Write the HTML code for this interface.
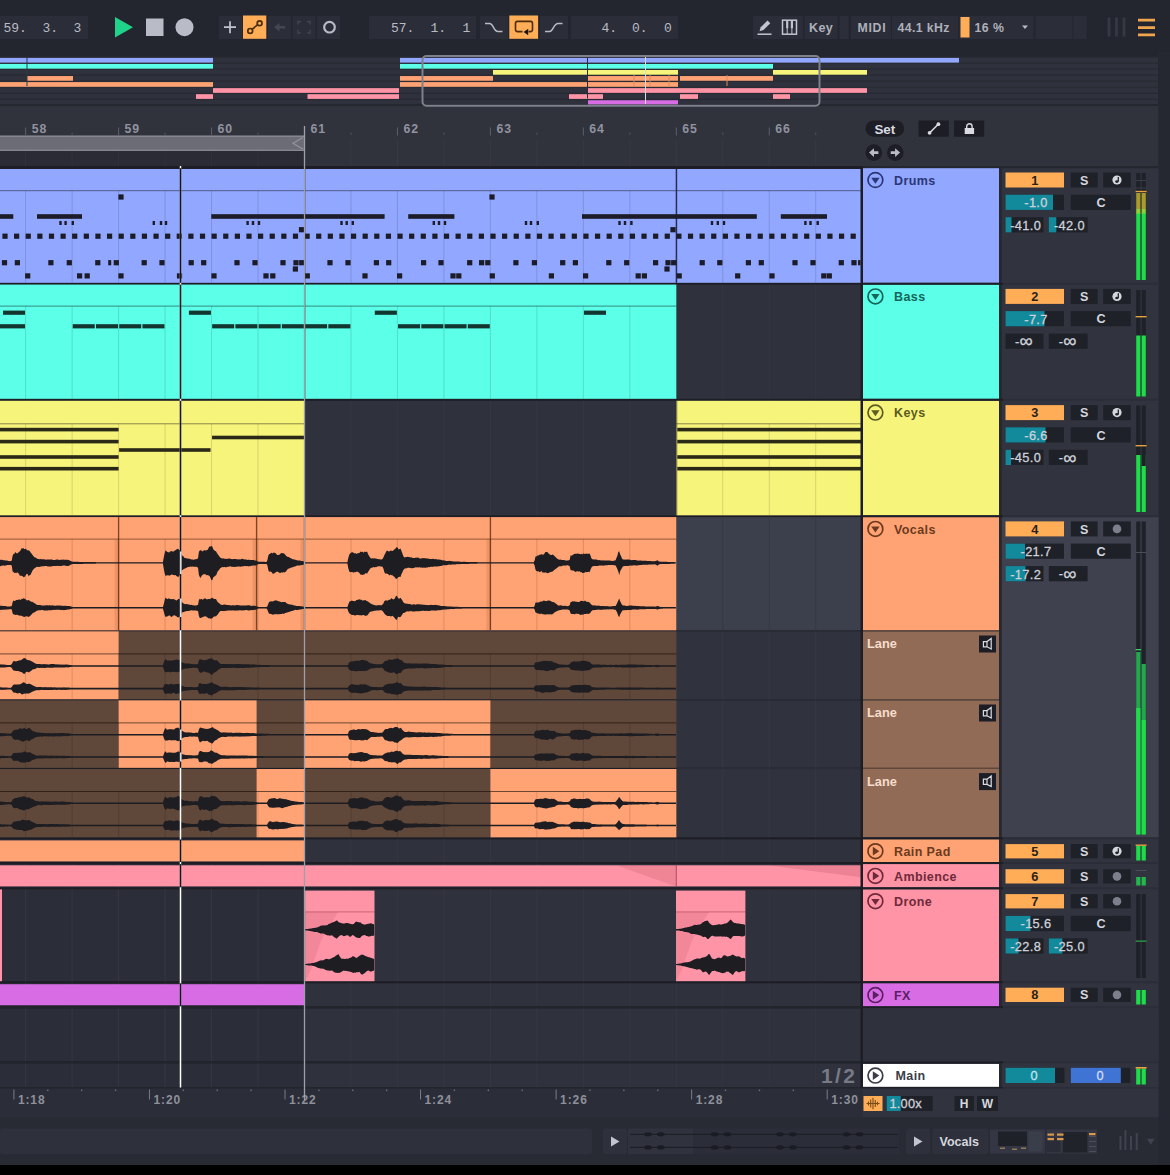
<!DOCTYPE html>
<html lang="en">
<head>
<meta charset="utf-8">
<title>Arrangement View</title>
<style>
html,body{margin:0;padding:0;background:#24262f;}
body{width:1170px;height:1175px;overflow:hidden;font-family:"Liberation Sans",sans-serif;}
svg{display:block;}
svg text{white-space:pre;}
</style>
</head>
<body>
<svg width="1170" height="1175" viewBox="0 0 1170 1175">
<rect x="0.00" y="0.00" width="1170.00" height="1175.00" fill="#24262f" />
<rect x="0.00" y="16.00" width="88.00" height="23.00" fill="#2b2d38" />
<text x="3.50" y="31.80" font-family='"Liberation Mono", monospace' font-size="13" font-weight="normal" fill="#b9bbc4" text-anchor="start" >59.</text>
<text x="42.50" y="31.80" font-family='"Liberation Mono", monospace' font-size="13" font-weight="normal" fill="#b9bbc4" text-anchor="start" >3.</text>
<text x="73.50" y="31.80" font-family='"Liberation Mono", monospace' font-size="13" font-weight="normal" fill="#b9bbc4" text-anchor="start" >3</text>
<polygon points="115,17 115,37.5 133,27.2" fill="#1fd48a"/>
<rect x="146.00" y="18.50" width="17.50" height="17.50" fill="#b9bbc6" />
<circle cx="184.5" cy="27.2" r="9" fill="#b9bbc6"/>
<rect x="219.00" y="16.00" width="23.00" height="23.00" fill="#2b2d38" />
<path d="M224 27.2h12M230 21.2v12" stroke="#c3c5ce" stroke-width="1.7" fill="none"/>
<rect x="243.00" y="15.50" width="23.30" height="23.30" fill="#ffad56" />
<g stroke="#4a2c0c" stroke-width="1.7" fill="none"><circle cx="250.2" cy="30.9" r="2.4"/><circle cx="259.6" cy="23.2" r="2.4"/><path d="M252.1 29.3l5.6-4.6"/></g>
<rect x="268.00" y="16.00" width="23.00" height="23.00" fill="#2b2d38" />
<path d="M274 27.2l5.6-4.2v2.9h5.6v2.6h-5.6v2.9z" fill="#444753"/>
<rect x="292.50" y="16.00" width="23.00" height="23.00" fill="#2b2d38" />
<path d="M298 24.5v-3h3M307 21.5h3v3M310 30v3h-3M301 33h-3v-3" stroke="#40434f" stroke-width="1.6" fill="none"/>
<rect x="317.00" y="16.00" width="23.00" height="23.00" fill="#2b2d38" />
<circle cx="329.5" cy="27.2" r="5.3" stroke="#b9bbc4" stroke-width="2.2" fill="none"/>
<rect x="369.00" y="16.00" width="107.00" height="23.00" fill="#2b2d38" />
<text x="391.00" y="31.80" font-family='"Liberation Mono", monospace' font-size="13" font-weight="normal" fill="#b9bbc4" text-anchor="start" >57.</text>
<text x="430.50" y="31.80" font-family='"Liberation Mono", monospace' font-size="13" font-weight="normal" fill="#b9bbc4" text-anchor="start" >1.</text>
<text x="462.50" y="31.80" font-family='"Liberation Mono", monospace' font-size="13" font-weight="normal" fill="#b9bbc4" text-anchor="start" >1</text>
<rect x="480.00" y="16.00" width="28.00" height="23.00" fill="#2b2d38" />
<path d="M485 23.5h4.5c4 0 4 8 8.5 8h4.5" stroke="#b9bbc4" stroke-width="1.5" fill="none"/>
<rect x="509.30" y="15.50" width="28.80" height="23.30" fill="#ffad56" />
<path d="M528.5 31.6h2a2 2 0 0 0 2-2v-6.2a2 2 0 0 0-2-2h-13a2 2 0 0 0-2 2v6.2a2 2 0 0 0 2 2h5" stroke="#4a2c0c" stroke-width="1.6" fill="none"/>
<path d="M523.6 32l4.6-3.3v6.6z" fill="#1f1408"/>
<rect x="540.00" y="16.00" width="28.00" height="23.00" fill="#2b2d38" />
<path d="M545 31.5h4.5c4 0 4-8 8.5-8h4.5" stroke="#b9bbc4" stroke-width="1.5" fill="none"/>
<rect x="571.00" y="16.00" width="107.00" height="23.00" fill="#2b2d38" />
<text x="601.50" y="31.80" font-family='"Liberation Mono", monospace' font-size="13" font-weight="normal" fill="#b9bbc4" text-anchor="start" >4.</text>
<text x="632.00" y="31.80" font-family='"Liberation Mono", monospace' font-size="13" font-weight="normal" fill="#b9bbc4" text-anchor="start" >0.</text>
<text x="664.00" y="31.80" font-family='"Liberation Mono", monospace' font-size="13" font-weight="normal" fill="#b9bbc4" text-anchor="start" >0</text>
<rect x="753.00" y="16.00" width="50.00" height="23.00" fill="#2b2d38" />
<path d="M759.5 31.2l1.2-4 6.8-6.8 2.8 2.8-6.8 6.8z" fill="#c3c5ce"/>
<path d="M757.5 34.2h14" stroke="#c3c5ce" stroke-width="1.5"/>
<rect x="782.50" y="20.20" width="14.00" height="14.00" fill="none" stroke="#c3c5ce" stroke-width="1.5"/>
<path d="M787.2 20.2v8M791.9 20.2v8" stroke="#c3c5ce" stroke-width="2.2"/>
<path d="M787.2 28v6M791.9 28v6" stroke="#c3c5ce" stroke-width="1"/>
<rect x="804.50" y="16.00" width="33.00" height="23.00" fill="#2b2d38" />
<text x="809.00" y="32.00" font-family='"Liberation Sans", sans-serif' font-size="12.5" font-weight="bold" fill="#aeb0ba" text-anchor="start" letter-spacing="0.4" >Key</text>
<rect x="839.50" y="16.00" width="9.00" height="23.00" fill="#2c2e39" />
<rect x="851.00" y="16.00" width="40.00" height="23.00" fill="#2b2d38" />
<text x="857.50" y="32.00" font-family='"Liberation Sans", sans-serif' font-size="12.3" font-weight="bold" fill="#aeb0ba" text-anchor="start" letter-spacing="0.7" >MIDI</text>
<rect x="892.00" y="16.00" width="66.00" height="23.00" fill="#2b2d38" />
<text x="897.50" y="32.00" font-family='"Liberation Sans", sans-serif' font-size="12.3" font-weight="bold" fill="#aeb0ba" text-anchor="start" letter-spacing="0.4" >44.1 kHz</text>
<rect x="959.50" y="16.00" width="74.00" height="23.00" fill="#2b2d38" />
<rect x="960.50" y="17.00" width="9.00" height="20.50" fill="#ffad56" />
<text x="974.50" y="32.00" font-family='"Liberation Sans", sans-serif' font-size="12.3" font-weight="bold" fill="#aeb0ba" text-anchor="start" letter-spacing="0.5" >16 %</text>
<path d="M1022 25.5h6l-3 3.4z" fill="#b9bbc4"/>
<rect x="1035.50" y="16.00" width="37.00" height="23.00" fill="#2b2d38" />
<rect x="1073.50" y="16.00" width="13.00" height="23.00" fill="#2b2d38" />
<path d="M1109 17.5v19M1116.5 17.5v19M1124 17.5v19" stroke="#363843" stroke-width="2.8"/>
<path d="M1138 20.2h17M1138 27.6h17M1138 34.9h17" stroke="#f0a54f" stroke-width="2.7"/>
<rect x="0.00" y="57.20" width="1158.00" height="47.30" fill="#2f313c" />
<line x1="0.00" y1="57.00" x2="1158.00" y2="57.00" stroke="#282a33" stroke-width="1.2" />
<line x1="0.00" y1="63.05" x2="1158.00" y2="63.05" stroke="#282a33" stroke-width="1.2" />
<line x1="0.00" y1="69.10" x2="1158.00" y2="69.10" stroke="#282a33" stroke-width="1.2" />
<line x1="0.00" y1="75.15" x2="1158.00" y2="75.15" stroke="#282a33" stroke-width="1.2" />
<line x1="0.00" y1="81.20" x2="1158.00" y2="81.20" stroke="#282a33" stroke-width="1.2" />
<line x1="0.00" y1="87.25" x2="1158.00" y2="87.25" stroke="#282a33" stroke-width="1.2" />
<line x1="0.00" y1="93.30" x2="1158.00" y2="93.30" stroke="#282a33" stroke-width="1.2" />
<line x1="0.00" y1="99.35" x2="1158.00" y2="99.35" stroke="#282a33" stroke-width="1.2" />
<line x1="0.00" y1="105.40" x2="1158.00" y2="105.40" stroke="#282a33" stroke-width="1.2" />
<rect x="0.00" y="57.90" width="213.00" height="4.70" fill="#92a7ff" />
<rect x="400.00" y="57.90" width="559.00" height="4.70" fill="#92a7ff" />
<rect x="0.00" y="63.95" width="213.00" height="4.70" fill="#5cffe8" />
<rect x="400.00" y="63.95" width="373.00" height="4.70" fill="#5cffe8" />
<rect x="493.00" y="70.00" width="185.00" height="4.70" fill="#f7f47c" />
<rect x="773.00" y="70.00" width="94.00" height="4.70" fill="#f7f47c" />
<rect x="27.00" y="76.05" width="46.00" height="4.70" fill="#ffa374" />
<rect x="400.00" y="76.05" width="93.00" height="4.70" fill="#ffa374" />
<rect x="588.00" y="76.05" width="90.00" height="4.70" fill="#ffa374" />
<rect x="680.00" y="76.05" width="93.00" height="4.70" fill="#ffa374" />
<rect x="0.00" y="82.10" width="213.00" height="4.70" fill="#ffa374" />
<rect x="400.00" y="82.10" width="278.00" height="4.70" fill="#ffa374" />
<rect x="213.00" y="88.15" width="186.00" height="4.70" fill="#ff94a6" />
<rect x="588.00" y="88.15" width="279.00" height="4.70" fill="#ff94a6" />
<rect x="196.00" y="94.20" width="17.00" height="4.70" fill="#ff94a6" />
<rect x="307.50" y="94.20" width="91.50" height="4.70" fill="#ff94a6" />
<rect x="569.00" y="94.20" width="34.00" height="4.70" fill="#ff94a6" />
<rect x="680.00" y="94.20" width="18.00" height="4.70" fill="#ff94a6" />
<rect x="773.00" y="94.20" width="17.00" height="4.70" fill="#ff94a6" />
<rect x="588.00" y="100.25" width="90.00" height="4.70" fill="#d86ce4" />
<line x1="27.00" y1="57.00" x2="27.00" y2="86.00" stroke="#2a3a44" stroke-width="1" />
<line x1="634.00" y1="75.00" x2="634.00" y2="86.00" stroke="#d98a5f" stroke-width="1" />
<line x1="650.00" y1="75.00" x2="650.00" y2="86.00" stroke="#d98a5f" stroke-width="1" />
<line x1="669.00" y1="75.00" x2="669.00" y2="86.00" stroke="#d98a5f" stroke-width="1" />
<line x1="727.00" y1="75.00" x2="727.00" y2="86.00" stroke="#d98a5f" stroke-width="1" />
<line x1="587.50" y1="57.50" x2="587.50" y2="98.50" stroke="#2a2c36" stroke-width="1" />
<line x1="645.50" y1="57.00" x2="645.50" y2="104.00" stroke="#d9dbe2" stroke-width="1" />
<rect x="0.00" y="104.50" width="1158.50" height="1.50" fill="#25272f" />
<rect x="0.00" y="106.00" width="1158.50" height="60.50" fill="#30323c" />
<rect x="0.00" y="151.00" width="304.50" height="15.00" fill="#2a2b35" />
<rect x="0.00" y="135.60" width="304.50" height="15.40" fill="#6b6c75" />
<rect x="0.00" y="135.60" width="304.50" height="1.40" fill="#85868e" />
<rect x="0.00" y="149.60" width="304.50" height="1.40" fill="#85868e" />
<path d="M303 137.5l-10 5.8 10 5.8" fill="none" stroke="#8e8f97" stroke-width="1.4"/>
<line x1="25.65" y1="127.50" x2="25.65" y2="135.50" stroke="#5d5f6a" stroke-width="1" />
<text x="31.65" y="132.90" font-family='"Liberation Sans", sans-serif' font-size="12.3" font-weight="bold" fill="#9093a0" text-anchor="start" letter-spacing="0.9" >58</text>
<rect x="71.52" y="132.50" width="1.20" height="2.50" fill="#4a4c57" />
<line x1="118.60" y1="127.50" x2="118.60" y2="135.50" stroke="#5d5f6a" stroke-width="1" />
<text x="124.60" y="132.90" font-family='"Liberation Sans", sans-serif' font-size="12.3" font-weight="bold" fill="#9093a0" text-anchor="start" letter-spacing="0.9" >59</text>
<rect x="164.47" y="132.50" width="1.20" height="2.50" fill="#4a4c57" />
<line x1="211.55" y1="127.50" x2="211.55" y2="135.50" stroke="#5d5f6a" stroke-width="1" />
<text x="217.55" y="132.90" font-family='"Liberation Sans", sans-serif' font-size="12.3" font-weight="bold" fill="#9093a0" text-anchor="start" letter-spacing="0.9" >60</text>
<rect x="257.43" y="132.50" width="1.20" height="2.50" fill="#4a4c57" />
<text x="310.50" y="132.90" font-family='"Liberation Sans", sans-serif' font-size="12.3" font-weight="bold" fill="#9093a0" text-anchor="start" letter-spacing="0.9" >61</text>
<rect x="350.38" y="132.50" width="1.20" height="2.50" fill="#4a4c57" />
<line x1="397.45" y1="127.50" x2="397.45" y2="135.50" stroke="#5d5f6a" stroke-width="1" />
<text x="403.45" y="132.90" font-family='"Liberation Sans", sans-serif' font-size="12.3" font-weight="bold" fill="#9093a0" text-anchor="start" letter-spacing="0.9" >62</text>
<rect x="443.32" y="132.50" width="1.20" height="2.50" fill="#4a4c57" />
<line x1="490.40" y1="127.50" x2="490.40" y2="135.50" stroke="#5d5f6a" stroke-width="1" />
<text x="496.40" y="132.90" font-family='"Liberation Sans", sans-serif' font-size="12.3" font-weight="bold" fill="#9093a0" text-anchor="start" letter-spacing="0.9" >63</text>
<rect x="536.27" y="132.50" width="1.20" height="2.50" fill="#4a4c57" />
<line x1="583.35" y1="127.50" x2="583.35" y2="135.50" stroke="#5d5f6a" stroke-width="1" />
<text x="589.35" y="132.90" font-family='"Liberation Sans", sans-serif' font-size="12.3" font-weight="bold" fill="#9093a0" text-anchor="start" letter-spacing="0.9" >64</text>
<rect x="629.23" y="132.50" width="1.20" height="2.50" fill="#4a4c57" />
<line x1="676.30" y1="127.50" x2="676.30" y2="135.50" stroke="#5d5f6a" stroke-width="1" />
<text x="682.30" y="132.90" font-family='"Liberation Sans", sans-serif' font-size="12.3" font-weight="bold" fill="#9093a0" text-anchor="start" letter-spacing="0.9" >65</text>
<rect x="722.17" y="132.50" width="1.20" height="2.50" fill="#4a4c57" />
<line x1="769.25" y1="127.50" x2="769.25" y2="135.50" stroke="#5d5f6a" stroke-width="1" />
<text x="775.25" y="132.90" font-family='"Liberation Sans", sans-serif' font-size="12.3" font-weight="bold" fill="#9093a0" text-anchor="start" letter-spacing="0.9" >66</text>
<rect x="815.12" y="132.50" width="1.20" height="2.50" fill="#4a4c57" />
<line x1="25.65" y1="151.00" x2="25.65" y2="166.00" stroke="#30313c" stroke-width="1" />
<line x1="72.12" y1="151.00" x2="72.12" y2="166.00" stroke="#30313c" stroke-width="1" />
<line x1="118.60" y1="151.00" x2="118.60" y2="166.00" stroke="#30313c" stroke-width="1" />
<line x1="165.07" y1="151.00" x2="165.07" y2="166.00" stroke="#30313c" stroke-width="1" />
<line x1="211.55" y1="151.00" x2="211.55" y2="166.00" stroke="#30313c" stroke-width="1" />
<line x1="258.02" y1="151.00" x2="258.02" y2="166.00" stroke="#30313c" stroke-width="1" />
<line x1="304.50" y1="151.00" x2="304.50" y2="166.00" stroke="#30313c" stroke-width="1" />
<line x1="350.98" y1="140.00" x2="350.98" y2="166.00" stroke="#373944" stroke-width="1" />
<line x1="397.45" y1="140.00" x2="397.45" y2="166.00" stroke="#373944" stroke-width="1" />
<line x1="443.93" y1="140.00" x2="443.93" y2="166.00" stroke="#373944" stroke-width="1" />
<line x1="490.40" y1="140.00" x2="490.40" y2="166.00" stroke="#373944" stroke-width="1" />
<line x1="536.88" y1="140.00" x2="536.88" y2="166.00" stroke="#373944" stroke-width="1" />
<line x1="583.35" y1="140.00" x2="583.35" y2="166.00" stroke="#373944" stroke-width="1" />
<line x1="629.83" y1="140.00" x2="629.83" y2="166.00" stroke="#373944" stroke-width="1" />
<line x1="676.30" y1="140.00" x2="676.30" y2="166.00" stroke="#373944" stroke-width="1" />
<line x1="722.78" y1="140.00" x2="722.78" y2="166.00" stroke="#373944" stroke-width="1" />
<line x1="769.25" y1="140.00" x2="769.25" y2="166.00" stroke="#373944" stroke-width="1" />
<line x1="815.73" y1="140.00" x2="815.73" y2="166.00" stroke="#373944" stroke-width="1" />
<rect x="0.00" y="166.00" width="863.00" height="2.20" fill="#1c1d25" />
<rect x="422.5" y="56" width="397" height="49.7" rx="4" ry="4" fill="none" stroke="#7e818c" stroke-width="2"/>
<rect x="0.00" y="166.00" width="863.00" height="921.00" fill="#1c1d25" />
<rect x="0.00" y="168.20" width="304.50" height="114.60" fill="#2b2d38" />
<rect x="304.50" y="168.20" width="556.50" height="114.60" fill="#2f313c" />
<line x1="25.65" y1="168.20" x2="25.65" y2="282.80" stroke="#353743" stroke-width="1" opacity="1.0"/>
<line x1="72.12" y1="168.20" x2="72.12" y2="282.80" stroke="#353743" stroke-width="1" opacity="1.0"/>
<line x1="118.60" y1="168.20" x2="118.60" y2="282.80" stroke="#353743" stroke-width="1" opacity="1.0"/>
<line x1="165.07" y1="168.20" x2="165.07" y2="282.80" stroke="#353743" stroke-width="1" opacity="1.0"/>
<line x1="211.55" y1="168.20" x2="211.55" y2="282.80" stroke="#353743" stroke-width="1" opacity="1.0"/>
<line x1="258.02" y1="168.20" x2="258.02" y2="282.80" stroke="#353743" stroke-width="1" opacity="1.0"/>
<line x1="304.50" y1="168.20" x2="304.50" y2="282.80" stroke="#353743" stroke-width="1" opacity="1.0"/>
<line x1="350.98" y1="168.20" x2="350.98" y2="282.80" stroke="#353743" stroke-width="1" opacity="1.0"/>
<line x1="397.45" y1="168.20" x2="397.45" y2="282.80" stroke="#353743" stroke-width="1" opacity="1.0"/>
<line x1="443.93" y1="168.20" x2="443.93" y2="282.80" stroke="#353743" stroke-width="1" opacity="1.0"/>
<line x1="490.40" y1="168.20" x2="490.40" y2="282.80" stroke="#353743" stroke-width="1" opacity="1.0"/>
<line x1="536.88" y1="168.20" x2="536.88" y2="282.80" stroke="#353743" stroke-width="1" opacity="1.0"/>
<line x1="583.35" y1="168.20" x2="583.35" y2="282.80" stroke="#353743" stroke-width="1" opacity="1.0"/>
<line x1="629.83" y1="168.20" x2="629.83" y2="282.80" stroke="#353743" stroke-width="1" opacity="1.0"/>
<line x1="676.30" y1="168.20" x2="676.30" y2="282.80" stroke="#353743" stroke-width="1" opacity="1.0"/>
<line x1="722.78" y1="168.20" x2="722.78" y2="282.80" stroke="#353743" stroke-width="1" opacity="1.0"/>
<line x1="769.25" y1="168.20" x2="769.25" y2="282.80" stroke="#353743" stroke-width="1" opacity="1.0"/>
<line x1="815.73" y1="168.20" x2="815.73" y2="282.80" stroke="#353743" stroke-width="1" opacity="1.0"/>
<rect x="0.00" y="284.60" width="304.50" height="114.20" fill="#2b2d38" />
<rect x="304.50" y="284.60" width="556.50" height="114.20" fill="#2f313c" />
<line x1="25.65" y1="284.60" x2="25.65" y2="398.80" stroke="#353743" stroke-width="1" opacity="1.0"/>
<line x1="72.12" y1="284.60" x2="72.12" y2="398.80" stroke="#353743" stroke-width="1" opacity="1.0"/>
<line x1="118.60" y1="284.60" x2="118.60" y2="398.80" stroke="#353743" stroke-width="1" opacity="1.0"/>
<line x1="165.07" y1="284.60" x2="165.07" y2="398.80" stroke="#353743" stroke-width="1" opacity="1.0"/>
<line x1="211.55" y1="284.60" x2="211.55" y2="398.80" stroke="#353743" stroke-width="1" opacity="1.0"/>
<line x1="258.02" y1="284.60" x2="258.02" y2="398.80" stroke="#353743" stroke-width="1" opacity="1.0"/>
<line x1="304.50" y1="284.60" x2="304.50" y2="398.80" stroke="#353743" stroke-width="1" opacity="1.0"/>
<line x1="350.98" y1="284.60" x2="350.98" y2="398.80" stroke="#353743" stroke-width="1" opacity="1.0"/>
<line x1="397.45" y1="284.60" x2="397.45" y2="398.80" stroke="#353743" stroke-width="1" opacity="1.0"/>
<line x1="443.93" y1="284.60" x2="443.93" y2="398.80" stroke="#353743" stroke-width="1" opacity="1.0"/>
<line x1="490.40" y1="284.60" x2="490.40" y2="398.80" stroke="#353743" stroke-width="1" opacity="1.0"/>
<line x1="536.88" y1="284.60" x2="536.88" y2="398.80" stroke="#353743" stroke-width="1" opacity="1.0"/>
<line x1="583.35" y1="284.60" x2="583.35" y2="398.80" stroke="#353743" stroke-width="1" opacity="1.0"/>
<line x1="629.83" y1="284.60" x2="629.83" y2="398.80" stroke="#353743" stroke-width="1" opacity="1.0"/>
<line x1="676.30" y1="284.60" x2="676.30" y2="398.80" stroke="#353743" stroke-width="1" opacity="1.0"/>
<line x1="722.78" y1="284.60" x2="722.78" y2="398.80" stroke="#353743" stroke-width="1" opacity="1.0"/>
<line x1="769.25" y1="284.60" x2="769.25" y2="398.80" stroke="#353743" stroke-width="1" opacity="1.0"/>
<line x1="815.73" y1="284.60" x2="815.73" y2="398.80" stroke="#353743" stroke-width="1" opacity="1.0"/>
<rect x="0.00" y="400.80" width="304.50" height="114.50" fill="#2b2d38" />
<rect x="304.50" y="400.80" width="556.50" height="114.50" fill="#2f313c" />
<line x1="25.65" y1="400.80" x2="25.65" y2="515.30" stroke="#353743" stroke-width="1" opacity="1.0"/>
<line x1="72.12" y1="400.80" x2="72.12" y2="515.30" stroke="#353743" stroke-width="1" opacity="1.0"/>
<line x1="118.60" y1="400.80" x2="118.60" y2="515.30" stroke="#353743" stroke-width="1" opacity="1.0"/>
<line x1="165.07" y1="400.80" x2="165.07" y2="515.30" stroke="#353743" stroke-width="1" opacity="1.0"/>
<line x1="211.55" y1="400.80" x2="211.55" y2="515.30" stroke="#353743" stroke-width="1" opacity="1.0"/>
<line x1="258.02" y1="400.80" x2="258.02" y2="515.30" stroke="#353743" stroke-width="1" opacity="1.0"/>
<line x1="304.50" y1="400.80" x2="304.50" y2="515.30" stroke="#353743" stroke-width="1" opacity="1.0"/>
<line x1="350.98" y1="400.80" x2="350.98" y2="515.30" stroke="#353743" stroke-width="1" opacity="1.0"/>
<line x1="397.45" y1="400.80" x2="397.45" y2="515.30" stroke="#353743" stroke-width="1" opacity="1.0"/>
<line x1="443.93" y1="400.80" x2="443.93" y2="515.30" stroke="#353743" stroke-width="1" opacity="1.0"/>
<line x1="490.40" y1="400.80" x2="490.40" y2="515.30" stroke="#353743" stroke-width="1" opacity="1.0"/>
<line x1="536.88" y1="400.80" x2="536.88" y2="515.30" stroke="#353743" stroke-width="1" opacity="1.0"/>
<line x1="583.35" y1="400.80" x2="583.35" y2="515.30" stroke="#353743" stroke-width="1" opacity="1.0"/>
<line x1="629.83" y1="400.80" x2="629.83" y2="515.30" stroke="#353743" stroke-width="1" opacity="1.0"/>
<line x1="676.30" y1="400.80" x2="676.30" y2="515.30" stroke="#353743" stroke-width="1" opacity="1.0"/>
<line x1="722.78" y1="400.80" x2="722.78" y2="515.30" stroke="#353743" stroke-width="1" opacity="1.0"/>
<line x1="769.25" y1="400.80" x2="769.25" y2="515.30" stroke="#353743" stroke-width="1" opacity="1.0"/>
<line x1="815.73" y1="400.80" x2="815.73" y2="515.30" stroke="#353743" stroke-width="1" opacity="1.0"/>
<rect x="0.00" y="839.40" width="304.50" height="22.60" fill="#2b2d38" />
<rect x="304.50" y="839.40" width="556.50" height="22.60" fill="#2f313c" />
<line x1="25.65" y1="839.40" x2="25.65" y2="862.00" stroke="#353743" stroke-width="1" opacity="1.0"/>
<line x1="72.12" y1="839.40" x2="72.12" y2="862.00" stroke="#353743" stroke-width="1" opacity="1.0"/>
<line x1="118.60" y1="839.40" x2="118.60" y2="862.00" stroke="#353743" stroke-width="1" opacity="1.0"/>
<line x1="165.07" y1="839.40" x2="165.07" y2="862.00" stroke="#353743" stroke-width="1" opacity="1.0"/>
<line x1="211.55" y1="839.40" x2="211.55" y2="862.00" stroke="#353743" stroke-width="1" opacity="1.0"/>
<line x1="258.02" y1="839.40" x2="258.02" y2="862.00" stroke="#353743" stroke-width="1" opacity="1.0"/>
<line x1="304.50" y1="839.40" x2="304.50" y2="862.00" stroke="#353743" stroke-width="1" opacity="1.0"/>
<line x1="350.98" y1="839.40" x2="350.98" y2="862.00" stroke="#353743" stroke-width="1" opacity="1.0"/>
<line x1="397.45" y1="839.40" x2="397.45" y2="862.00" stroke="#353743" stroke-width="1" opacity="1.0"/>
<line x1="443.93" y1="839.40" x2="443.93" y2="862.00" stroke="#353743" stroke-width="1" opacity="1.0"/>
<line x1="490.40" y1="839.40" x2="490.40" y2="862.00" stroke="#353743" stroke-width="1" opacity="1.0"/>
<line x1="536.88" y1="839.40" x2="536.88" y2="862.00" stroke="#353743" stroke-width="1" opacity="1.0"/>
<line x1="583.35" y1="839.40" x2="583.35" y2="862.00" stroke="#353743" stroke-width="1" opacity="1.0"/>
<line x1="629.83" y1="839.40" x2="629.83" y2="862.00" stroke="#353743" stroke-width="1" opacity="1.0"/>
<line x1="676.30" y1="839.40" x2="676.30" y2="862.00" stroke="#353743" stroke-width="1" opacity="1.0"/>
<line x1="722.78" y1="839.40" x2="722.78" y2="862.00" stroke="#353743" stroke-width="1" opacity="1.0"/>
<line x1="769.25" y1="839.40" x2="769.25" y2="862.00" stroke="#353743" stroke-width="1" opacity="1.0"/>
<line x1="815.73" y1="839.40" x2="815.73" y2="862.00" stroke="#353743" stroke-width="1" opacity="1.0"/>
<rect x="0.00" y="864.10" width="304.50" height="23.20" fill="#2b2d38" />
<rect x="304.50" y="864.10" width="556.50" height="23.20" fill="#2f313c" />
<line x1="25.65" y1="864.10" x2="25.65" y2="887.30" stroke="#353743" stroke-width="1" opacity="1.0"/>
<line x1="72.12" y1="864.10" x2="72.12" y2="887.30" stroke="#353743" stroke-width="1" opacity="1.0"/>
<line x1="118.60" y1="864.10" x2="118.60" y2="887.30" stroke="#353743" stroke-width="1" opacity="1.0"/>
<line x1="165.07" y1="864.10" x2="165.07" y2="887.30" stroke="#353743" stroke-width="1" opacity="1.0"/>
<line x1="211.55" y1="864.10" x2="211.55" y2="887.30" stroke="#353743" stroke-width="1" opacity="1.0"/>
<line x1="258.02" y1="864.10" x2="258.02" y2="887.30" stroke="#353743" stroke-width="1" opacity="1.0"/>
<line x1="304.50" y1="864.10" x2="304.50" y2="887.30" stroke="#353743" stroke-width="1" opacity="1.0"/>
<line x1="350.98" y1="864.10" x2="350.98" y2="887.30" stroke="#353743" stroke-width="1" opacity="1.0"/>
<line x1="397.45" y1="864.10" x2="397.45" y2="887.30" stroke="#353743" stroke-width="1" opacity="1.0"/>
<line x1="443.93" y1="864.10" x2="443.93" y2="887.30" stroke="#353743" stroke-width="1" opacity="1.0"/>
<line x1="490.40" y1="864.10" x2="490.40" y2="887.30" stroke="#353743" stroke-width="1" opacity="1.0"/>
<line x1="536.88" y1="864.10" x2="536.88" y2="887.30" stroke="#353743" stroke-width="1" opacity="1.0"/>
<line x1="583.35" y1="864.10" x2="583.35" y2="887.30" stroke="#353743" stroke-width="1" opacity="1.0"/>
<line x1="629.83" y1="864.10" x2="629.83" y2="887.30" stroke="#353743" stroke-width="1" opacity="1.0"/>
<line x1="676.30" y1="864.10" x2="676.30" y2="887.30" stroke="#353743" stroke-width="1" opacity="1.0"/>
<line x1="722.78" y1="864.10" x2="722.78" y2="887.30" stroke="#353743" stroke-width="1" opacity="1.0"/>
<line x1="769.25" y1="864.10" x2="769.25" y2="887.30" stroke="#353743" stroke-width="1" opacity="1.0"/>
<line x1="815.73" y1="864.10" x2="815.73" y2="887.30" stroke="#353743" stroke-width="1" opacity="1.0"/>
<rect x="0.00" y="889.40" width="304.50" height="91.80" fill="#2b2d38" />
<rect x="304.50" y="889.40" width="556.50" height="91.80" fill="#2f313c" />
<line x1="25.65" y1="889.40" x2="25.65" y2="981.20" stroke="#353743" stroke-width="1" opacity="1.0"/>
<line x1="72.12" y1="889.40" x2="72.12" y2="981.20" stroke="#353743" stroke-width="1" opacity="1.0"/>
<line x1="118.60" y1="889.40" x2="118.60" y2="981.20" stroke="#353743" stroke-width="1" opacity="1.0"/>
<line x1="165.07" y1="889.40" x2="165.07" y2="981.20" stroke="#353743" stroke-width="1" opacity="1.0"/>
<line x1="211.55" y1="889.40" x2="211.55" y2="981.20" stroke="#353743" stroke-width="1" opacity="1.0"/>
<line x1="258.02" y1="889.40" x2="258.02" y2="981.20" stroke="#353743" stroke-width="1" opacity="1.0"/>
<line x1="304.50" y1="889.40" x2="304.50" y2="981.20" stroke="#353743" stroke-width="1" opacity="1.0"/>
<line x1="350.98" y1="889.40" x2="350.98" y2="981.20" stroke="#353743" stroke-width="1" opacity="1.0"/>
<line x1="397.45" y1="889.40" x2="397.45" y2="981.20" stroke="#353743" stroke-width="1" opacity="1.0"/>
<line x1="443.93" y1="889.40" x2="443.93" y2="981.20" stroke="#353743" stroke-width="1" opacity="1.0"/>
<line x1="490.40" y1="889.40" x2="490.40" y2="981.20" stroke="#353743" stroke-width="1" opacity="1.0"/>
<line x1="536.88" y1="889.40" x2="536.88" y2="981.20" stroke="#353743" stroke-width="1" opacity="1.0"/>
<line x1="583.35" y1="889.40" x2="583.35" y2="981.20" stroke="#353743" stroke-width="1" opacity="1.0"/>
<line x1="629.83" y1="889.40" x2="629.83" y2="981.20" stroke="#353743" stroke-width="1" opacity="1.0"/>
<line x1="676.30" y1="889.40" x2="676.30" y2="981.20" stroke="#353743" stroke-width="1" opacity="1.0"/>
<line x1="722.78" y1="889.40" x2="722.78" y2="981.20" stroke="#353743" stroke-width="1" opacity="1.0"/>
<line x1="769.25" y1="889.40" x2="769.25" y2="981.20" stroke="#353743" stroke-width="1" opacity="1.0"/>
<line x1="815.73" y1="889.40" x2="815.73" y2="981.20" stroke="#353743" stroke-width="1" opacity="1.0"/>
<rect x="0.00" y="983.30" width="304.50" height="23.00" fill="#2b2d38" />
<rect x="304.50" y="983.30" width="556.50" height="23.00" fill="#2f313c" />
<line x1="25.65" y1="983.30" x2="25.65" y2="1006.30" stroke="#353743" stroke-width="1" opacity="1.0"/>
<line x1="72.12" y1="983.30" x2="72.12" y2="1006.30" stroke="#353743" stroke-width="1" opacity="1.0"/>
<line x1="118.60" y1="983.30" x2="118.60" y2="1006.30" stroke="#353743" stroke-width="1" opacity="1.0"/>
<line x1="165.07" y1="983.30" x2="165.07" y2="1006.30" stroke="#353743" stroke-width="1" opacity="1.0"/>
<line x1="211.55" y1="983.30" x2="211.55" y2="1006.30" stroke="#353743" stroke-width="1" opacity="1.0"/>
<line x1="258.02" y1="983.30" x2="258.02" y2="1006.30" stroke="#353743" stroke-width="1" opacity="1.0"/>
<line x1="304.50" y1="983.30" x2="304.50" y2="1006.30" stroke="#353743" stroke-width="1" opacity="1.0"/>
<line x1="350.98" y1="983.30" x2="350.98" y2="1006.30" stroke="#353743" stroke-width="1" opacity="1.0"/>
<line x1="397.45" y1="983.30" x2="397.45" y2="1006.30" stroke="#353743" stroke-width="1" opacity="1.0"/>
<line x1="443.93" y1="983.30" x2="443.93" y2="1006.30" stroke="#353743" stroke-width="1" opacity="1.0"/>
<line x1="490.40" y1="983.30" x2="490.40" y2="1006.30" stroke="#353743" stroke-width="1" opacity="1.0"/>
<line x1="536.88" y1="983.30" x2="536.88" y2="1006.30" stroke="#353743" stroke-width="1" opacity="1.0"/>
<line x1="583.35" y1="983.30" x2="583.35" y2="1006.30" stroke="#353743" stroke-width="1" opacity="1.0"/>
<line x1="629.83" y1="983.30" x2="629.83" y2="1006.30" stroke="#353743" stroke-width="1" opacity="1.0"/>
<line x1="676.30" y1="983.30" x2="676.30" y2="1006.30" stroke="#353743" stroke-width="1" opacity="1.0"/>
<line x1="722.78" y1="983.30" x2="722.78" y2="1006.30" stroke="#353743" stroke-width="1" opacity="1.0"/>
<line x1="769.25" y1="983.30" x2="769.25" y2="1006.30" stroke="#353743" stroke-width="1" opacity="1.0"/>
<line x1="815.73" y1="983.30" x2="815.73" y2="1006.30" stroke="#353743" stroke-width="1" opacity="1.0"/>
<rect x="0.00" y="1008.30" width="304.50" height="53.00" fill="#2b2d38" />
<rect x="304.50" y="1008.30" width="556.50" height="53.00" fill="#2f313c" />
<line x1="25.65" y1="1008.30" x2="25.65" y2="1061.30" stroke="#353743" stroke-width="1" opacity="1.0"/>
<line x1="72.12" y1="1008.30" x2="72.12" y2="1061.30" stroke="#353743" stroke-width="1" opacity="1.0"/>
<line x1="118.60" y1="1008.30" x2="118.60" y2="1061.30" stroke="#353743" stroke-width="1" opacity="1.0"/>
<line x1="165.07" y1="1008.30" x2="165.07" y2="1061.30" stroke="#353743" stroke-width="1" opacity="1.0"/>
<line x1="211.55" y1="1008.30" x2="211.55" y2="1061.30" stroke="#353743" stroke-width="1" opacity="1.0"/>
<line x1="258.02" y1="1008.30" x2="258.02" y2="1061.30" stroke="#353743" stroke-width="1" opacity="1.0"/>
<line x1="304.50" y1="1008.30" x2="304.50" y2="1061.30" stroke="#353743" stroke-width="1" opacity="1.0"/>
<line x1="350.98" y1="1008.30" x2="350.98" y2="1061.30" stroke="#353743" stroke-width="1" opacity="1.0"/>
<line x1="397.45" y1="1008.30" x2="397.45" y2="1061.30" stroke="#353743" stroke-width="1" opacity="1.0"/>
<line x1="443.93" y1="1008.30" x2="443.93" y2="1061.30" stroke="#353743" stroke-width="1" opacity="1.0"/>
<line x1="490.40" y1="1008.30" x2="490.40" y2="1061.30" stroke="#353743" stroke-width="1" opacity="1.0"/>
<line x1="536.88" y1="1008.30" x2="536.88" y2="1061.30" stroke="#353743" stroke-width="1" opacity="1.0"/>
<line x1="583.35" y1="1008.30" x2="583.35" y2="1061.30" stroke="#353743" stroke-width="1" opacity="1.0"/>
<line x1="629.83" y1="1008.30" x2="629.83" y2="1061.30" stroke="#353743" stroke-width="1" opacity="1.0"/>
<line x1="676.30" y1="1008.30" x2="676.30" y2="1061.30" stroke="#353743" stroke-width="1" opacity="1.0"/>
<line x1="722.78" y1="1008.30" x2="722.78" y2="1061.30" stroke="#353743" stroke-width="1" opacity="1.0"/>
<line x1="769.25" y1="1008.30" x2="769.25" y2="1061.30" stroke="#353743" stroke-width="1" opacity="1.0"/>
<line x1="815.73" y1="1008.30" x2="815.73" y2="1061.30" stroke="#353743" stroke-width="1" opacity="1.0"/>
<rect x="0.00" y="1063.30" width="304.50" height="23.70" fill="#2b2d38" />
<rect x="304.50" y="1063.30" width="556.50" height="23.70" fill="#2f313c" />
<line x1="25.65" y1="1063.30" x2="25.65" y2="1087.00" stroke="#353743" stroke-width="1" opacity="1.0"/>
<line x1="72.12" y1="1063.30" x2="72.12" y2="1087.00" stroke="#353743" stroke-width="1" opacity="1.0"/>
<line x1="118.60" y1="1063.30" x2="118.60" y2="1087.00" stroke="#353743" stroke-width="1" opacity="1.0"/>
<line x1="165.07" y1="1063.30" x2="165.07" y2="1087.00" stroke="#353743" stroke-width="1" opacity="1.0"/>
<line x1="211.55" y1="1063.30" x2="211.55" y2="1087.00" stroke="#353743" stroke-width="1" opacity="1.0"/>
<line x1="258.02" y1="1063.30" x2="258.02" y2="1087.00" stroke="#353743" stroke-width="1" opacity="1.0"/>
<line x1="304.50" y1="1063.30" x2="304.50" y2="1087.00" stroke="#353743" stroke-width="1" opacity="1.0"/>
<line x1="350.98" y1="1063.30" x2="350.98" y2="1087.00" stroke="#353743" stroke-width="1" opacity="1.0"/>
<line x1="397.45" y1="1063.30" x2="397.45" y2="1087.00" stroke="#353743" stroke-width="1" opacity="1.0"/>
<line x1="443.93" y1="1063.30" x2="443.93" y2="1087.00" stroke="#353743" stroke-width="1" opacity="1.0"/>
<line x1="490.40" y1="1063.30" x2="490.40" y2="1087.00" stroke="#353743" stroke-width="1" opacity="1.0"/>
<line x1="536.88" y1="1063.30" x2="536.88" y2="1087.00" stroke="#353743" stroke-width="1" opacity="1.0"/>
<line x1="583.35" y1="1063.30" x2="583.35" y2="1087.00" stroke="#353743" stroke-width="1" opacity="1.0"/>
<line x1="629.83" y1="1063.30" x2="629.83" y2="1087.00" stroke="#353743" stroke-width="1" opacity="1.0"/>
<line x1="676.30" y1="1063.30" x2="676.30" y2="1087.00" stroke="#353743" stroke-width="1" opacity="1.0"/>
<line x1="722.78" y1="1063.30" x2="722.78" y2="1087.00" stroke="#353743" stroke-width="1" opacity="1.0"/>
<line x1="769.25" y1="1063.30" x2="769.25" y2="1087.00" stroke="#353743" stroke-width="1" opacity="1.0"/>
<line x1="815.73" y1="1063.30" x2="815.73" y2="1087.00" stroke="#353743" stroke-width="1" opacity="1.0"/>
<rect x="0.00" y="517.10" width="861.00" height="113.20" fill="#3c3f4c" />
<line x1="25.65" y1="517.10" x2="25.65" y2="630.30" stroke="#363946" stroke-width="1" opacity="1.0"/>
<line x1="72.12" y1="517.10" x2="72.12" y2="630.30" stroke="#363946" stroke-width="1" opacity="1.0"/>
<line x1="118.60" y1="517.10" x2="118.60" y2="630.30" stroke="#363946" stroke-width="1" opacity="1.0"/>
<line x1="165.07" y1="517.10" x2="165.07" y2="630.30" stroke="#363946" stroke-width="1" opacity="1.0"/>
<line x1="211.55" y1="517.10" x2="211.55" y2="630.30" stroke="#363946" stroke-width="1" opacity="1.0"/>
<line x1="258.02" y1="517.10" x2="258.02" y2="630.30" stroke="#363946" stroke-width="1" opacity="1.0"/>
<line x1="304.50" y1="517.10" x2="304.50" y2="630.30" stroke="#363946" stroke-width="1" opacity="1.0"/>
<line x1="350.98" y1="517.10" x2="350.98" y2="630.30" stroke="#363946" stroke-width="1" opacity="1.0"/>
<line x1="397.45" y1="517.10" x2="397.45" y2="630.30" stroke="#363946" stroke-width="1" opacity="1.0"/>
<line x1="443.93" y1="517.10" x2="443.93" y2="630.30" stroke="#363946" stroke-width="1" opacity="1.0"/>
<line x1="490.40" y1="517.10" x2="490.40" y2="630.30" stroke="#363946" stroke-width="1" opacity="1.0"/>
<line x1="536.88" y1="517.10" x2="536.88" y2="630.30" stroke="#363946" stroke-width="1" opacity="1.0"/>
<line x1="583.35" y1="517.10" x2="583.35" y2="630.30" stroke="#363946" stroke-width="1" opacity="1.0"/>
<line x1="629.83" y1="517.10" x2="629.83" y2="630.30" stroke="#363946" stroke-width="1" opacity="1.0"/>
<line x1="676.30" y1="517.10" x2="676.30" y2="630.30" stroke="#363946" stroke-width="1" opacity="1.0"/>
<line x1="722.78" y1="517.10" x2="722.78" y2="630.30" stroke="#363946" stroke-width="1" opacity="1.0"/>
<line x1="769.25" y1="517.10" x2="769.25" y2="630.30" stroke="#363946" stroke-width="1" opacity="1.0"/>
<line x1="815.73" y1="517.10" x2="815.73" y2="630.30" stroke="#363946" stroke-width="1" opacity="1.0"/>
<rect x="0.00" y="631.40" width="861.00" height="67.80" fill="#30323e" />
<line x1="25.65" y1="631.40" x2="25.65" y2="699.20" stroke="#373945" stroke-width="1" opacity="1.0"/>
<line x1="72.12" y1="631.40" x2="72.12" y2="699.20" stroke="#373945" stroke-width="1" opacity="1.0"/>
<line x1="118.60" y1="631.40" x2="118.60" y2="699.20" stroke="#373945" stroke-width="1" opacity="1.0"/>
<line x1="165.07" y1="631.40" x2="165.07" y2="699.20" stroke="#373945" stroke-width="1" opacity="1.0"/>
<line x1="211.55" y1="631.40" x2="211.55" y2="699.20" stroke="#373945" stroke-width="1" opacity="1.0"/>
<line x1="258.02" y1="631.40" x2="258.02" y2="699.20" stroke="#373945" stroke-width="1" opacity="1.0"/>
<line x1="304.50" y1="631.40" x2="304.50" y2="699.20" stroke="#373945" stroke-width="1" opacity="1.0"/>
<line x1="350.98" y1="631.40" x2="350.98" y2="699.20" stroke="#373945" stroke-width="1" opacity="1.0"/>
<line x1="397.45" y1="631.40" x2="397.45" y2="699.20" stroke="#373945" stroke-width="1" opacity="1.0"/>
<line x1="443.93" y1="631.40" x2="443.93" y2="699.20" stroke="#373945" stroke-width="1" opacity="1.0"/>
<line x1="490.40" y1="631.40" x2="490.40" y2="699.20" stroke="#373945" stroke-width="1" opacity="1.0"/>
<line x1="536.88" y1="631.40" x2="536.88" y2="699.20" stroke="#373945" stroke-width="1" opacity="1.0"/>
<line x1="583.35" y1="631.40" x2="583.35" y2="699.20" stroke="#373945" stroke-width="1" opacity="1.0"/>
<line x1="629.83" y1="631.40" x2="629.83" y2="699.20" stroke="#373945" stroke-width="1" opacity="1.0"/>
<line x1="676.30" y1="631.40" x2="676.30" y2="699.20" stroke="#373945" stroke-width="1" opacity="1.0"/>
<line x1="722.78" y1="631.40" x2="722.78" y2="699.20" stroke="#373945" stroke-width="1" opacity="1.0"/>
<line x1="769.25" y1="631.40" x2="769.25" y2="699.20" stroke="#373945" stroke-width="1" opacity="1.0"/>
<line x1="815.73" y1="631.40" x2="815.73" y2="699.20" stroke="#373945" stroke-width="1" opacity="1.0"/>
<rect x="0.00" y="700.40" width="861.00" height="67.40" fill="#30323e" />
<line x1="25.65" y1="700.40" x2="25.65" y2="767.80" stroke="#373945" stroke-width="1" opacity="1.0"/>
<line x1="72.12" y1="700.40" x2="72.12" y2="767.80" stroke="#373945" stroke-width="1" opacity="1.0"/>
<line x1="118.60" y1="700.40" x2="118.60" y2="767.80" stroke="#373945" stroke-width="1" opacity="1.0"/>
<line x1="165.07" y1="700.40" x2="165.07" y2="767.80" stroke="#373945" stroke-width="1" opacity="1.0"/>
<line x1="211.55" y1="700.40" x2="211.55" y2="767.80" stroke="#373945" stroke-width="1" opacity="1.0"/>
<line x1="258.02" y1="700.40" x2="258.02" y2="767.80" stroke="#373945" stroke-width="1" opacity="1.0"/>
<line x1="304.50" y1="700.40" x2="304.50" y2="767.80" stroke="#373945" stroke-width="1" opacity="1.0"/>
<line x1="350.98" y1="700.40" x2="350.98" y2="767.80" stroke="#373945" stroke-width="1" opacity="1.0"/>
<line x1="397.45" y1="700.40" x2="397.45" y2="767.80" stroke="#373945" stroke-width="1" opacity="1.0"/>
<line x1="443.93" y1="700.40" x2="443.93" y2="767.80" stroke="#373945" stroke-width="1" opacity="1.0"/>
<line x1="490.40" y1="700.40" x2="490.40" y2="767.80" stroke="#373945" stroke-width="1" opacity="1.0"/>
<line x1="536.88" y1="700.40" x2="536.88" y2="767.80" stroke="#373945" stroke-width="1" opacity="1.0"/>
<line x1="583.35" y1="700.40" x2="583.35" y2="767.80" stroke="#373945" stroke-width="1" opacity="1.0"/>
<line x1="629.83" y1="700.40" x2="629.83" y2="767.80" stroke="#373945" stroke-width="1" opacity="1.0"/>
<line x1="676.30" y1="700.40" x2="676.30" y2="767.80" stroke="#373945" stroke-width="1" opacity="1.0"/>
<line x1="722.78" y1="700.40" x2="722.78" y2="767.80" stroke="#373945" stroke-width="1" opacity="1.0"/>
<line x1="769.25" y1="700.40" x2="769.25" y2="767.80" stroke="#373945" stroke-width="1" opacity="1.0"/>
<line x1="815.73" y1="700.40" x2="815.73" y2="767.80" stroke="#373945" stroke-width="1" opacity="1.0"/>
<rect x="0.00" y="769.00" width="861.00" height="68.30" fill="#30323e" />
<line x1="25.65" y1="769.00" x2="25.65" y2="837.30" stroke="#373945" stroke-width="1" opacity="1.0"/>
<line x1="72.12" y1="769.00" x2="72.12" y2="837.30" stroke="#373945" stroke-width="1" opacity="1.0"/>
<line x1="118.60" y1="769.00" x2="118.60" y2="837.30" stroke="#373945" stroke-width="1" opacity="1.0"/>
<line x1="165.07" y1="769.00" x2="165.07" y2="837.30" stroke="#373945" stroke-width="1" opacity="1.0"/>
<line x1="211.55" y1="769.00" x2="211.55" y2="837.30" stroke="#373945" stroke-width="1" opacity="1.0"/>
<line x1="258.02" y1="769.00" x2="258.02" y2="837.30" stroke="#373945" stroke-width="1" opacity="1.0"/>
<line x1="304.50" y1="769.00" x2="304.50" y2="837.30" stroke="#373945" stroke-width="1" opacity="1.0"/>
<line x1="350.98" y1="769.00" x2="350.98" y2="837.30" stroke="#373945" stroke-width="1" opacity="1.0"/>
<line x1="397.45" y1="769.00" x2="397.45" y2="837.30" stroke="#373945" stroke-width="1" opacity="1.0"/>
<line x1="443.93" y1="769.00" x2="443.93" y2="837.30" stroke="#373945" stroke-width="1" opacity="1.0"/>
<line x1="490.40" y1="769.00" x2="490.40" y2="837.30" stroke="#373945" stroke-width="1" opacity="1.0"/>
<line x1="536.88" y1="769.00" x2="536.88" y2="837.30" stroke="#373945" stroke-width="1" opacity="1.0"/>
<line x1="583.35" y1="769.00" x2="583.35" y2="837.30" stroke="#373945" stroke-width="1" opacity="1.0"/>
<line x1="629.83" y1="769.00" x2="629.83" y2="837.30" stroke="#373945" stroke-width="1" opacity="1.0"/>
<line x1="676.30" y1="769.00" x2="676.30" y2="837.30" stroke="#373945" stroke-width="1" opacity="1.0"/>
<line x1="722.78" y1="769.00" x2="722.78" y2="837.30" stroke="#373945" stroke-width="1" opacity="1.0"/>
<line x1="769.25" y1="769.00" x2="769.25" y2="837.30" stroke="#373945" stroke-width="1" opacity="1.0"/>
<line x1="815.73" y1="769.00" x2="815.73" y2="837.30" stroke="#373945" stroke-width="1" opacity="1.0"/>
<rect x="676.50" y="630.30" width="184.50" height="1.30" fill="#2b2d38" />
<rect x="676.50" y="699.20" width="184.50" height="1.30" fill="#2b2d38" />
<rect x="676.50" y="767.80" width="184.50" height="1.30" fill="#2b2d38" />
<rect x="-2.00" y="168.20" width="306.50" height="114.60" fill="#92a7ff" />
<line x1="25.65" y1="190.70" x2="25.65" y2="282.80" stroke="rgba(0,0,0,0.13)" stroke-width="1" opacity="1.0"/>
<line x1="72.12" y1="190.70" x2="72.12" y2="282.80" stroke="rgba(0,0,0,0.13)" stroke-width="1" opacity="1.0"/>
<line x1="118.60" y1="190.70" x2="118.60" y2="282.80" stroke="rgba(0,0,0,0.13)" stroke-width="1" opacity="1.0"/>
<line x1="165.07" y1="190.70" x2="165.07" y2="282.80" stroke="rgba(0,0,0,0.13)" stroke-width="1" opacity="1.0"/>
<line x1="211.55" y1="190.70" x2="211.55" y2="282.80" stroke="rgba(0,0,0,0.13)" stroke-width="1" opacity="1.0"/>
<line x1="258.02" y1="190.70" x2="258.02" y2="282.80" stroke="rgba(0,0,0,0.13)" stroke-width="1" opacity="1.0"/>
<line x1="-2.00" y1="190.70" x2="304.50" y2="190.70" stroke="rgba(0,0,0,0.45)" stroke-width="1" />
<line x1="-1.50" y1="168.20" x2="-1.50" y2="282.80" stroke="rgba(0,0,0,0.45)" stroke-width="1" />
<rect x="304.50" y="168.20" width="371.80" height="114.60" fill="#92a7ff" />
<line x1="350.98" y1="190.70" x2="350.98" y2="282.80" stroke="rgba(0,0,0,0.13)" stroke-width="1" opacity="1.0"/>
<line x1="397.45" y1="190.70" x2="397.45" y2="282.80" stroke="rgba(0,0,0,0.13)" stroke-width="1" opacity="1.0"/>
<line x1="443.93" y1="190.70" x2="443.93" y2="282.80" stroke="rgba(0,0,0,0.13)" stroke-width="1" opacity="1.0"/>
<line x1="490.40" y1="190.70" x2="490.40" y2="282.80" stroke="rgba(0,0,0,0.13)" stroke-width="1" opacity="1.0"/>
<line x1="536.88" y1="190.70" x2="536.88" y2="282.80" stroke="rgba(0,0,0,0.13)" stroke-width="1" opacity="1.0"/>
<line x1="583.35" y1="190.70" x2="583.35" y2="282.80" stroke="rgba(0,0,0,0.13)" stroke-width="1" opacity="1.0"/>
<line x1="629.83" y1="190.70" x2="629.83" y2="282.80" stroke="rgba(0,0,0,0.13)" stroke-width="1" opacity="1.0"/>
<line x1="304.50" y1="190.70" x2="676.30" y2="190.70" stroke="rgba(0,0,0,0.45)" stroke-width="1" />
<line x1="305.00" y1="168.20" x2="305.00" y2="282.80" stroke="rgba(0,0,0,0.45)" stroke-width="1" />
<rect x="676.30" y="168.20" width="184.70" height="114.60" fill="#92a7ff" />
<line x1="722.78" y1="190.70" x2="722.78" y2="282.80" stroke="rgba(0,0,0,0.13)" stroke-width="1" opacity="1.0"/>
<line x1="769.25" y1="190.70" x2="769.25" y2="282.80" stroke="rgba(0,0,0,0.13)" stroke-width="1" opacity="1.0"/>
<line x1="815.73" y1="190.70" x2="815.73" y2="282.80" stroke="rgba(0,0,0,0.13)" stroke-width="1" opacity="1.0"/>
<line x1="676.30" y1="190.70" x2="861.00" y2="190.70" stroke="rgba(0,0,0,0.45)" stroke-width="1" />
<line x1="676.80" y1="168.20" x2="676.80" y2="282.80" stroke="rgba(0,0,0,0.45)" stroke-width="1" />
<line x1="676.30" y1="168.20" x2="676.30" y2="282.80" stroke="#232850" stroke-width="1.2" />
<rect x="118.40" y="194.40" width="5.20" height="5.20" fill="#1b1c27" />
<rect x="489.40" y="194.40" width="5.20" height="5.20" fill="#1b1c27" />
<rect x="0.00" y="214.20" width="13.30" height="4.60" fill="#1b1c27" />
<rect x="37.00" y="214.20" width="45.00" height="4.60" fill="#1b1c27" />
<rect x="211.30" y="214.20" width="173.30" height="4.60" fill="#1b1c27" />
<rect x="408.20" y="214.20" width="46.20" height="4.60" fill="#1b1c27" />
<rect x="582.00" y="214.20" width="174.80" height="4.60" fill="#1b1c27" />
<rect x="780.80" y="214.20" width="46.20" height="4.60" fill="#1b1c27" />
<rect x="59.30" y="221.00" width="2.40" height="4.00" fill="#1b1c27" />
<rect x="64.40" y="221.00" width="2.40" height="4.00" fill="#1b1c27" />
<rect x="71.60" y="221.00" width="2.40" height="4.00" fill="#1b1c27" />
<rect x="152.60" y="221.00" width="2.40" height="4.00" fill="#1b1c27" />
<rect x="159.80" y="221.00" width="2.40" height="4.00" fill="#1b1c27" />
<rect x="164.80" y="221.00" width="2.40" height="4.00" fill="#1b1c27" />
<rect x="246.40" y="221.00" width="2.40" height="4.00" fill="#1b1c27" />
<rect x="251.80" y="221.00" width="2.40" height="4.00" fill="#1b1c27" />
<rect x="257.80" y="221.00" width="2.40" height="4.00" fill="#1b1c27" />
<rect x="340.30" y="221.00" width="2.40" height="4.00" fill="#1b1c27" />
<rect x="345.50" y="221.00" width="2.40" height="4.00" fill="#1b1c27" />
<rect x="351.60" y="221.00" width="2.40" height="4.00" fill="#1b1c27" />
<rect x="432.60" y="221.00" width="2.40" height="4.00" fill="#1b1c27" />
<rect x="437.80" y="221.00" width="2.40" height="4.00" fill="#1b1c27" />
<rect x="443.80" y="221.00" width="2.40" height="4.00" fill="#1b1c27" />
<rect x="524.80" y="221.00" width="2.40" height="4.00" fill="#1b1c27" />
<rect x="529.80" y="221.00" width="2.40" height="4.00" fill="#1b1c27" />
<rect x="536.60" y="221.00" width="2.40" height="4.00" fill="#1b1c27" />
<rect x="618.30" y="221.00" width="2.40" height="4.00" fill="#1b1c27" />
<rect x="623.80" y="221.00" width="2.40" height="4.00" fill="#1b1c27" />
<rect x="630.20" y="221.00" width="2.40" height="4.00" fill="#1b1c27" />
<rect x="710.80" y="221.00" width="2.40" height="4.00" fill="#1b1c27" />
<rect x="716.60" y="221.00" width="2.40" height="4.00" fill="#1b1c27" />
<rect x="722.80" y="221.00" width="2.40" height="4.00" fill="#1b1c27" />
<rect x="804.20" y="221.00" width="2.40" height="4.00" fill="#1b1c27" />
<rect x="809.30" y="221.00" width="2.40" height="4.00" fill="#1b1c27" />
<rect x="816.50" y="221.00" width="2.40" height="4.00" fill="#1b1c27" />
<rect x="298.90" y="227.10" width="5.20" height="5.20" fill="#1b1c27" />
<rect x="670.40" y="227.10" width="5.20" height="5.20" fill="#1b1c27" />
<rect x="292.80" y="266.40" width="5.20" height="5.20" fill="#1b1c27" />
<rect x="664.40" y="266.40" width="5.20" height="5.20" fill="#1b1c27" />
<rect x="2.41" y="233.60" width="5.20" height="5.20" fill="#1b1c27" />
<rect x="14.03" y="233.60" width="5.20" height="5.20" fill="#1b1c27" />
<rect x="25.65" y="233.60" width="5.20" height="5.20" fill="#1b1c27" />
<rect x="37.27" y="233.60" width="5.20" height="5.20" fill="#1b1c27" />
<rect x="48.89" y="233.60" width="5.20" height="5.20" fill="#1b1c27" />
<rect x="60.51" y="233.60" width="5.20" height="5.20" fill="#1b1c27" />
<rect x="72.12" y="233.60" width="5.20" height="5.20" fill="#1b1c27" />
<rect x="83.74" y="233.60" width="5.20" height="5.20" fill="#1b1c27" />
<rect x="95.36" y="233.60" width="5.20" height="5.20" fill="#1b1c27" />
<rect x="106.98" y="233.60" width="5.20" height="5.20" fill="#1b1c27" />
<rect x="118.60" y="233.60" width="5.20" height="5.20" fill="#1b1c27" />
<rect x="130.22" y="233.60" width="5.20" height="5.20" fill="#1b1c27" />
<rect x="141.84" y="233.60" width="5.20" height="5.20" fill="#1b1c27" />
<rect x="153.46" y="233.60" width="5.20" height="5.20" fill="#1b1c27" />
<rect x="165.07" y="233.60" width="5.20" height="5.20" fill="#1b1c27" />
<rect x="176.69" y="233.60" width="5.20" height="5.20" fill="#1b1c27" />
<rect x="188.31" y="233.60" width="5.20" height="5.20" fill="#1b1c27" />
<rect x="199.93" y="233.60" width="5.20" height="5.20" fill="#1b1c27" />
<rect x="211.55" y="233.60" width="5.20" height="5.20" fill="#1b1c27" />
<rect x="223.17" y="233.60" width="5.20" height="5.20" fill="#1b1c27" />
<rect x="234.79" y="233.60" width="5.20" height="5.20" fill="#1b1c27" />
<rect x="246.41" y="233.60" width="5.20" height="5.20" fill="#1b1c27" />
<rect x="258.02" y="233.60" width="5.20" height="5.20" fill="#1b1c27" />
<rect x="269.64" y="233.60" width="5.20" height="5.20" fill="#1b1c27" />
<rect x="281.26" y="233.60" width="5.20" height="5.20" fill="#1b1c27" />
<rect x="292.88" y="233.60" width="5.20" height="5.20" fill="#1b1c27" />
<rect x="304.50" y="233.60" width="5.20" height="5.20" fill="#1b1c27" />
<rect x="316.12" y="233.60" width="5.20" height="5.20" fill="#1b1c27" />
<rect x="327.74" y="233.60" width="5.20" height="5.20" fill="#1b1c27" />
<rect x="339.36" y="233.60" width="5.20" height="5.20" fill="#1b1c27" />
<rect x="350.97" y="233.60" width="5.20" height="5.20" fill="#1b1c27" />
<rect x="362.59" y="233.60" width="5.20" height="5.20" fill="#1b1c27" />
<rect x="374.21" y="233.60" width="5.20" height="5.20" fill="#1b1c27" />
<rect x="385.83" y="233.60" width="5.20" height="5.20" fill="#1b1c27" />
<rect x="397.45" y="233.60" width="5.20" height="5.20" fill="#1b1c27" />
<rect x="409.07" y="233.60" width="5.20" height="5.20" fill="#1b1c27" />
<rect x="420.69" y="233.60" width="5.20" height="5.20" fill="#1b1c27" />
<rect x="432.31" y="233.60" width="5.20" height="5.20" fill="#1b1c27" />
<rect x="443.92" y="233.60" width="5.20" height="5.20" fill="#1b1c27" />
<rect x="455.54" y="233.60" width="5.20" height="5.20" fill="#1b1c27" />
<rect x="467.16" y="233.60" width="5.20" height="5.20" fill="#1b1c27" />
<rect x="478.78" y="233.60" width="5.20" height="5.20" fill="#1b1c27" />
<rect x="490.40" y="233.60" width="5.20" height="5.20" fill="#1b1c27" />
<rect x="502.02" y="233.60" width="5.20" height="5.20" fill="#1b1c27" />
<rect x="513.64" y="233.60" width="5.20" height="5.20" fill="#1b1c27" />
<rect x="525.26" y="233.60" width="5.20" height="5.20" fill="#1b1c27" />
<rect x="536.88" y="233.60" width="5.20" height="5.20" fill="#1b1c27" />
<rect x="548.49" y="233.60" width="5.20" height="5.20" fill="#1b1c27" />
<rect x="560.11" y="233.60" width="5.20" height="5.20" fill="#1b1c27" />
<rect x="571.73" y="233.60" width="5.20" height="5.20" fill="#1b1c27" />
<rect x="583.35" y="233.60" width="5.20" height="5.20" fill="#1b1c27" />
<rect x="594.97" y="233.60" width="5.20" height="5.20" fill="#1b1c27" />
<rect x="606.59" y="233.60" width="5.20" height="5.20" fill="#1b1c27" />
<rect x="618.21" y="233.60" width="5.20" height="5.20" fill="#1b1c27" />
<rect x="629.83" y="233.60" width="5.20" height="5.20" fill="#1b1c27" />
<rect x="641.44" y="233.60" width="5.20" height="5.20" fill="#1b1c27" />
<rect x="653.06" y="233.60" width="5.20" height="5.20" fill="#1b1c27" />
<rect x="664.68" y="233.60" width="5.20" height="5.20" fill="#1b1c27" />
<rect x="676.30" y="233.60" width="5.20" height="5.20" fill="#1b1c27" />
<rect x="687.92" y="233.60" width="5.20" height="5.20" fill="#1b1c27" />
<rect x="699.54" y="233.60" width="5.20" height="5.20" fill="#1b1c27" />
<rect x="711.16" y="233.60" width="5.20" height="5.20" fill="#1b1c27" />
<rect x="722.78" y="233.60" width="5.20" height="5.20" fill="#1b1c27" />
<rect x="734.39" y="233.60" width="5.20" height="5.20" fill="#1b1c27" />
<rect x="746.01" y="233.60" width="5.20" height="5.20" fill="#1b1c27" />
<rect x="757.63" y="233.60" width="5.20" height="5.20" fill="#1b1c27" />
<rect x="769.25" y="233.60" width="5.20" height="5.20" fill="#1b1c27" />
<rect x="780.87" y="233.60" width="5.20" height="5.20" fill="#1b1c27" />
<rect x="792.49" y="233.60" width="5.20" height="5.20" fill="#1b1c27" />
<rect x="804.11" y="233.60" width="5.20" height="5.20" fill="#1b1c27" />
<rect x="815.73" y="233.60" width="5.20" height="5.20" fill="#1b1c27" />
<rect x="827.34" y="233.60" width="5.20" height="5.20" fill="#1b1c27" />
<rect x="838.96" y="233.60" width="5.20" height="5.20" fill="#1b1c27" />
<rect x="850.58" y="233.60" width="5.20" height="5.20" fill="#1b1c27" />
<rect x="1.90" y="260.10" width="5.20" height="5.20" fill="#1b1c27" />
<rect x="14.80" y="260.10" width="5.20" height="5.20" fill="#1b1c27" />
<rect x="48.30" y="260.10" width="5.20" height="5.20" fill="#1b1c27" />
<rect x="66.70" y="260.10" width="5.20" height="5.20" fill="#1b1c27" />
<rect x="95.20" y="260.10" width="5.20" height="5.20" fill="#1b1c27" />
<rect x="113.70" y="260.10" width="5.20" height="5.20" fill="#1b1c27" />
<rect x="141.60" y="260.10" width="5.20" height="5.20" fill="#1b1c27" />
<rect x="159.40" y="260.10" width="5.20" height="5.20" fill="#1b1c27" />
<rect x="188.60" y="260.10" width="5.20" height="5.20" fill="#1b1c27" />
<rect x="201.10" y="260.10" width="5.20" height="5.20" fill="#1b1c27" />
<rect x="234.40" y="260.10" width="5.20" height="5.20" fill="#1b1c27" />
<rect x="252.40" y="260.10" width="5.20" height="5.20" fill="#1b1c27" />
<rect x="280.40" y="260.10" width="5.20" height="5.20" fill="#1b1c27" />
<rect x="293.40" y="260.10" width="5.20" height="5.20" fill="#1b1c27" />
<rect x="299.10" y="260.10" width="5.20" height="5.20" fill="#1b1c27" />
<rect x="327.40" y="260.10" width="5.20" height="5.20" fill="#1b1c27" />
<rect x="345.40" y="260.10" width="5.20" height="5.20" fill="#1b1c27" />
<rect x="373.80" y="260.10" width="5.20" height="5.20" fill="#1b1c27" />
<rect x="386.10" y="260.10" width="5.20" height="5.20" fill="#1b1c27" />
<rect x="421.00" y="260.10" width="5.20" height="5.20" fill="#1b1c27" />
<rect x="438.40" y="260.10" width="5.20" height="5.20" fill="#1b1c27" />
<rect x="467.10" y="260.10" width="5.20" height="5.20" fill="#1b1c27" />
<rect x="479.00" y="260.10" width="5.20" height="5.20" fill="#1b1c27" />
<rect x="485.20" y="260.10" width="5.20" height="5.20" fill="#1b1c27" />
<rect x="513.30" y="260.10" width="5.20" height="5.20" fill="#1b1c27" />
<rect x="531.80" y="260.10" width="5.20" height="5.20" fill="#1b1c27" />
<rect x="560.10" y="260.10" width="5.20" height="5.20" fill="#1b1c27" />
<rect x="572.80" y="260.10" width="5.20" height="5.20" fill="#1b1c27" />
<rect x="606.20" y="260.10" width="5.20" height="5.20" fill="#1b1c27" />
<rect x="624.10" y="260.10" width="5.20" height="5.20" fill="#1b1c27" />
<rect x="653.00" y="260.10" width="5.20" height="5.20" fill="#1b1c27" />
<rect x="665.40" y="260.10" width="5.20" height="5.20" fill="#1b1c27" />
<rect x="671.10" y="260.10" width="5.20" height="5.20" fill="#1b1c27" />
<rect x="699.60" y="260.10" width="5.20" height="5.20" fill="#1b1c27" />
<rect x="717.20" y="260.10" width="5.20" height="5.20" fill="#1b1c27" />
<rect x="745.80" y="260.10" width="5.20" height="5.20" fill="#1b1c27" />
<rect x="758.70" y="260.10" width="5.20" height="5.20" fill="#1b1c27" />
<rect x="792.40" y="260.10" width="5.20" height="5.20" fill="#1b1c27" />
<rect x="810.40" y="260.10" width="5.20" height="5.20" fill="#1b1c27" />
<rect x="838.70" y="260.10" width="5.20" height="5.20" fill="#1b1c27" />
<rect x="851.40" y="260.10" width="5.20" height="5.20" fill="#1b1c27" />
<rect x="108.20" y="260.10" width="3.00" height="5.20" fill="#1b1c27" />
<rect x="858.05" y="260.10" width="2.50" height="5.20" fill="#1b1c27" />
<rect x="25.10" y="273.30" width="5.20" height="5.20" fill="#1b1c27" />
<rect x="77.00" y="273.30" width="5.20" height="5.20" fill="#1b1c27" />
<rect x="84.60" y="273.30" width="5.20" height="5.20" fill="#1b1c27" />
<rect x="118.40" y="273.30" width="5.20" height="5.20" fill="#1b1c27" />
<rect x="176.90" y="273.30" width="5.20" height="5.20" fill="#1b1c27" />
<rect x="211.40" y="273.30" width="5.20" height="5.20" fill="#1b1c27" />
<rect x="263.40" y="273.30" width="5.20" height="5.20" fill="#1b1c27" />
<rect x="270.20" y="273.30" width="5.20" height="5.20" fill="#1b1c27" />
<rect x="304.70" y="273.30" width="5.20" height="5.20" fill="#1b1c27" />
<rect x="362.40" y="273.30" width="5.20" height="5.20" fill="#1b1c27" />
<rect x="397.00" y="273.30" width="5.20" height="5.20" fill="#1b1c27" />
<rect x="450.40" y="273.30" width="5.20" height="5.20" fill="#1b1c27" />
<rect x="456.20" y="273.30" width="5.20" height="5.20" fill="#1b1c27" />
<rect x="489.70" y="273.30" width="5.20" height="5.20" fill="#1b1c27" />
<rect x="548.80" y="273.30" width="5.20" height="5.20" fill="#1b1c27" />
<rect x="583.00" y="273.30" width="5.20" height="5.20" fill="#1b1c27" />
<rect x="635.60" y="273.30" width="5.20" height="5.20" fill="#1b1c27" />
<rect x="641.80" y="273.30" width="5.20" height="5.20" fill="#1b1c27" />
<rect x="676.60" y="273.30" width="5.20" height="5.20" fill="#1b1c27" />
<rect x="735.10" y="273.30" width="5.20" height="5.20" fill="#1b1c27" />
<rect x="769.40" y="273.30" width="5.20" height="5.20" fill="#1b1c27" />
<rect x="821.20" y="273.30" width="5.20" height="5.20" fill="#1b1c27" />
<rect x="826.70" y="273.30" width="5.20" height="5.20" fill="#1b1c27" />
<rect x="0.00" y="166.00" width="861.00" height="3.00" fill="#1c1d25" />
<rect x="-2.00" y="284.60" width="306.50" height="114.20" fill="#5cffe8" />
<line x1="25.65" y1="306.10" x2="25.65" y2="398.80" stroke="rgba(0,0,0,0.13)" stroke-width="1" opacity="1.0"/>
<line x1="72.12" y1="306.10" x2="72.12" y2="398.80" stroke="rgba(0,0,0,0.13)" stroke-width="1" opacity="1.0"/>
<line x1="118.60" y1="306.10" x2="118.60" y2="398.80" stroke="rgba(0,0,0,0.13)" stroke-width="1" opacity="1.0"/>
<line x1="165.07" y1="306.10" x2="165.07" y2="398.80" stroke="rgba(0,0,0,0.13)" stroke-width="1" opacity="1.0"/>
<line x1="211.55" y1="306.10" x2="211.55" y2="398.80" stroke="rgba(0,0,0,0.13)" stroke-width="1" opacity="1.0"/>
<line x1="258.02" y1="306.10" x2="258.02" y2="398.80" stroke="rgba(0,0,0,0.13)" stroke-width="1" opacity="1.0"/>
<line x1="-2.00" y1="306.10" x2="304.50" y2="306.10" stroke="rgba(0,0,0,0.45)" stroke-width="1" />
<line x1="-1.50" y1="284.60" x2="-1.50" y2="398.80" stroke="rgba(0,0,0,0.45)" stroke-width="1" />
<rect x="304.50" y="284.60" width="371.80" height="114.20" fill="#5cffe8" />
<line x1="350.98" y1="306.10" x2="350.98" y2="398.80" stroke="rgba(0,0,0,0.13)" stroke-width="1" opacity="1.0"/>
<line x1="397.45" y1="306.10" x2="397.45" y2="398.80" stroke="rgba(0,0,0,0.13)" stroke-width="1" opacity="1.0"/>
<line x1="443.93" y1="306.10" x2="443.93" y2="398.80" stroke="rgba(0,0,0,0.13)" stroke-width="1" opacity="1.0"/>
<line x1="490.40" y1="306.10" x2="490.40" y2="398.80" stroke="rgba(0,0,0,0.13)" stroke-width="1" opacity="1.0"/>
<line x1="536.88" y1="306.10" x2="536.88" y2="398.80" stroke="rgba(0,0,0,0.13)" stroke-width="1" opacity="1.0"/>
<line x1="583.35" y1="306.10" x2="583.35" y2="398.80" stroke="rgba(0,0,0,0.13)" stroke-width="1" opacity="1.0"/>
<line x1="629.83" y1="306.10" x2="629.83" y2="398.80" stroke="rgba(0,0,0,0.13)" stroke-width="1" opacity="1.0"/>
<line x1="304.50" y1="306.10" x2="676.30" y2="306.10" stroke="rgba(0,0,0,0.45)" stroke-width="1" />
<line x1="305.00" y1="284.60" x2="305.00" y2="398.80" stroke="rgba(0,0,0,0.45)" stroke-width="1" />
<rect x="3.01" y="310.60" width="22.04" height="4.20" fill="#123530" />
<rect x="188.91" y="310.60" width="22.04" height="4.20" fill="#123530" />
<rect x="374.81" y="310.60" width="22.04" height="4.20" fill="#123530" />
<rect x="583.95" y="310.60" width="22.04" height="4.20" fill="#123530" />
<rect x="0.00" y="324.20" width="25.05" height="4.20" fill="#123530" />
<rect x="72.72" y="324.20" width="22.04" height="4.20" fill="#123530" />
<rect x="95.96" y="324.20" width="22.04" height="4.20" fill="#123530" />
<rect x="119.20" y="324.20" width="22.04" height="4.20" fill="#123530" />
<rect x="142.44" y="324.20" width="22.04" height="4.20" fill="#123530" />
<rect x="212.15" y="324.20" width="22.04" height="4.20" fill="#123530" />
<rect x="235.39" y="324.20" width="22.04" height="4.20" fill="#123530" />
<rect x="258.62" y="324.20" width="22.04" height="4.20" fill="#123530" />
<rect x="281.86" y="324.20" width="22.04" height="4.20" fill="#123530" />
<rect x="305.10" y="324.20" width="22.04" height="4.20" fill="#123530" />
<rect x="328.34" y="324.20" width="22.04" height="4.20" fill="#123530" />
<rect x="398.05" y="324.20" width="22.04" height="4.20" fill="#123530" />
<rect x="421.29" y="324.20" width="22.04" height="4.20" fill="#123530" />
<rect x="444.53" y="324.20" width="22.04" height="4.20" fill="#123530" />
<rect x="467.76" y="324.20" width="22.04" height="4.20" fill="#123530" />
<rect x="-2.00" y="400.80" width="306.50" height="114.50" fill="#f7f47c" />
<line x1="25.65" y1="423.80" x2="25.65" y2="515.30" stroke="rgba(0,0,0,0.13)" stroke-width="1" opacity="1.0"/>
<line x1="72.12" y1="423.80" x2="72.12" y2="515.30" stroke="rgba(0,0,0,0.13)" stroke-width="1" opacity="1.0"/>
<line x1="118.60" y1="423.80" x2="118.60" y2="515.30" stroke="rgba(0,0,0,0.13)" stroke-width="1" opacity="1.0"/>
<line x1="165.07" y1="423.80" x2="165.07" y2="515.30" stroke="rgba(0,0,0,0.13)" stroke-width="1" opacity="1.0"/>
<line x1="211.55" y1="423.80" x2="211.55" y2="515.30" stroke="rgba(0,0,0,0.13)" stroke-width="1" opacity="1.0"/>
<line x1="258.02" y1="423.80" x2="258.02" y2="515.30" stroke="rgba(0,0,0,0.13)" stroke-width="1" opacity="1.0"/>
<line x1="-2.00" y1="423.80" x2="304.50" y2="423.80" stroke="rgba(0,0,0,0.45)" stroke-width="1" />
<line x1="-1.50" y1="400.80" x2="-1.50" y2="515.30" stroke="rgba(0,0,0,0.45)" stroke-width="1" />
<rect x="676.30" y="400.80" width="184.70" height="114.50" fill="#f7f47c" />
<line x1="722.78" y1="423.80" x2="722.78" y2="515.30" stroke="rgba(0,0,0,0.13)" stroke-width="1" opacity="1.0"/>
<line x1="769.25" y1="423.80" x2="769.25" y2="515.30" stroke="rgba(0,0,0,0.13)" stroke-width="1" opacity="1.0"/>
<line x1="815.73" y1="423.80" x2="815.73" y2="515.30" stroke="rgba(0,0,0,0.13)" stroke-width="1" opacity="1.0"/>
<line x1="676.30" y1="423.80" x2="861.00" y2="423.80" stroke="rgba(0,0,0,0.45)" stroke-width="1" />
<line x1="676.80" y1="400.80" x2="676.80" y2="515.30" stroke="rgba(0,0,0,0.45)" stroke-width="1" />
<rect x="0.00" y="427.80" width="118.60" height="3.60" fill="#2a2918" />
<rect x="677.30" y="427.80" width="183.70" height="3.60" fill="#2a2918" />
<rect x="0.00" y="439.80" width="118.60" height="3.60" fill="#2a2918" />
<rect x="677.30" y="439.80" width="183.70" height="3.60" fill="#2a2918" />
<rect x="0.00" y="455.20" width="118.60" height="3.60" fill="#2a2918" />
<rect x="677.30" y="455.20" width="183.70" height="3.60" fill="#2a2918" />
<rect x="0.00" y="466.90" width="118.60" height="3.60" fill="#2a2918" />
<rect x="677.30" y="466.90" width="183.70" height="3.60" fill="#2a2918" />
<rect x="119.10" y="448.20" width="91.45" height="3.60" fill="#2a2918" />
<rect x="212.05" y="435.70" width="91.95" height="3.60" fill="#2a2918" />
<rect x="-2.00" y="517.10" width="120.60" height="113.20" fill="#ffa374" />
<rect x="118.60" y="517.10" width="138.00" height="113.20" fill="#ffa374" />
<rect x="256.60" y="517.10" width="47.90" height="113.20" fill="#ffa374" />
<rect x="304.50" y="517.10" width="185.90" height="113.20" fill="#ffa374" />
<rect x="490.40" y="517.10" width="185.90" height="113.20" fill="#ffa374" />
<line x1="25.65" y1="539.10" x2="25.65" y2="630.30" stroke="rgba(120,50,10,0.22)" stroke-width="1" opacity="1.0"/>
<line x1="72.12" y1="539.10" x2="72.12" y2="630.30" stroke="rgba(120,50,10,0.22)" stroke-width="1" opacity="1.0"/>
<line x1="118.60" y1="539.10" x2="118.60" y2="630.30" stroke="rgba(120,50,10,0.22)" stroke-width="1" opacity="1.0"/>
<line x1="165.07" y1="539.10" x2="165.07" y2="630.30" stroke="rgba(120,50,10,0.22)" stroke-width="1" opacity="1.0"/>
<line x1="211.55" y1="539.10" x2="211.55" y2="630.30" stroke="rgba(120,50,10,0.22)" stroke-width="1" opacity="1.0"/>
<line x1="258.02" y1="539.10" x2="258.02" y2="630.30" stroke="rgba(120,50,10,0.22)" stroke-width="1" opacity="1.0"/>
<line x1="304.50" y1="539.10" x2="304.50" y2="630.30" stroke="rgba(120,50,10,0.22)" stroke-width="1" opacity="1.0"/>
<line x1="350.98" y1="539.10" x2="350.98" y2="630.30" stroke="rgba(120,50,10,0.22)" stroke-width="1" opacity="1.0"/>
<line x1="397.45" y1="539.10" x2="397.45" y2="630.30" stroke="rgba(120,50,10,0.22)" stroke-width="1" opacity="1.0"/>
<line x1="443.93" y1="539.10" x2="443.93" y2="630.30" stroke="rgba(120,50,10,0.22)" stroke-width="1" opacity="1.0"/>
<line x1="490.40" y1="539.10" x2="490.40" y2="630.30" stroke="rgba(120,50,10,0.22)" stroke-width="1" opacity="1.0"/>
<line x1="536.88" y1="539.10" x2="536.88" y2="630.30" stroke="rgba(120,50,10,0.22)" stroke-width="1" opacity="1.0"/>
<line x1="583.35" y1="539.10" x2="583.35" y2="630.30" stroke="rgba(120,50,10,0.22)" stroke-width="1" opacity="1.0"/>
<line x1="629.83" y1="539.10" x2="629.83" y2="630.30" stroke="rgba(120,50,10,0.22)" stroke-width="1" opacity="1.0"/>
<line x1="0.00" y1="539.10" x2="676.30" y2="539.10" stroke="rgba(60,25,5,0.55)" stroke-width="1" />
<rect x="114.60" y="539.10" width="4.00" height="91.20" fill="rgba(120,50,10,0.13)" />
<line x1="118.60" y1="517.10" x2="118.60" y2="630.30" stroke="rgba(90,40,10,0.7)" stroke-width="1.4" />
<rect x="252.60" y="539.10" width="4.00" height="91.20" fill="rgba(120,50,10,0.13)" />
<line x1="256.60" y1="517.10" x2="256.60" y2="630.30" stroke="rgba(90,40,10,0.7)" stroke-width="1.4" />
<rect x="300.50" y="539.10" width="4.00" height="91.20" fill="rgba(120,50,10,0.13)" />
<line x1="304.50" y1="517.10" x2="304.50" y2="630.30" stroke="rgba(90,40,10,0.7)" stroke-width="1.4" />
<rect x="486.40" y="539.10" width="4.00" height="91.20" fill="rgba(120,50,10,0.13)" />
<line x1="490.40" y1="517.10" x2="490.40" y2="630.30" stroke="rgba(90,40,10,0.7)" stroke-width="1.4" />
<path d="M0.0 560.0L0.9 559.8L1.8 559.8L2.7 559.9L3.6 560.3L4.5 560.2L5.4 560.4L6.3 560.4L7.2 560.6L8.1 560.9L9.0 561.0L9.9 561.2L10.8 560.9L11.7 560.7L12.6 555.7L13.5 554.1L14.4 553.7L15.3 552.1L16.2 552.9L17.1 553.4L18.0 553.0L18.9 551.8L19.8 551.5L20.7 550.0L21.6 548.3L22.5 548.4L23.4 548.0L24.3 549.3L25.2 548.8L26.1 549.1L27.0 550.3L27.9 550.2L28.8 550.6L29.7 551.0L30.6 552.5L31.5 553.6L32.4 554.8L33.3 555.9L34.2 556.9L35.1 557.5L36.0 557.7L36.9 558.6L37.8 559.0L38.7 559.1L39.6 559.3L40.5 559.1L41.4 559.2L42.3 559.2L43.2 559.2L44.1 559.2L45.0 559.5L45.9 559.8L46.8 559.5L47.7 559.6L48.6 559.4L49.5 559.5L50.4 559.6L51.3 559.5L52.2 559.6L53.1 559.9L54.0 559.9L54.9 559.9L55.8 559.7L56.7 559.6L57.6 559.5L58.5 559.7L59.4 560.0L60.3 559.7L61.2 559.7L62.1 559.8L63.0 559.5L63.9 559.7L64.8 559.8L65.7 559.7L66.6 559.7L67.5 559.8L68.4 559.9L69.3 560.3L70.2 560.8L71.1 561.2L72.0 561.5L72.9 561.7L73.8 561.7L74.7 561.8L75.6 561.8L76.5 561.8L77.4 561.8L78.3 561.8L79.2 561.9L80.1 561.9L81.0 561.9L81.9 561.9L82.8 561.9L83.7 562.0L84.6 562.0L85.5 562.0L86.4 562.0L87.3 562.0L88.2 562.0L89.1 562.1L90.0 562.1L90.9 562.1L91.8 562.1L92.7 562.1L93.6 562.1L94.5 562.1L95.4 562.1L96.3 562.2L97.2 562.2L98.1 562.2L99.0 562.2L99.9 562.2L100.8 562.2L101.7 562.2L102.6 562.2L103.5 562.2L104.4 562.2L105.3 562.2L106.2 562.2L107.1 562.2L108.0 562.2L108.9 562.2L109.8 562.2L110.7 562.2L111.6 562.2L112.5 562.2L113.4 562.2L114.3 562.2L115.2 562.2L116.1 562.2L117.0 562.2L117.9 562.2L118.8 562.2L119.7 562.2L120.6 562.2L121.5 562.2L122.4 562.2L123.3 562.2L124.2 562.2L125.1 562.2L126.0 562.2L126.9 562.2L127.8 562.2L128.7 562.2L129.6 562.2L130.5 562.2L131.4 562.2L132.3 562.2L133.2 562.2L134.1 562.2L135.0 562.2L135.9 562.2L136.8 562.2L137.7 562.2L138.6 562.2L139.5 562.2L140.4 562.2L141.3 562.2L142.2 562.2L143.1 562.2L144.0 562.2L144.9 562.2L145.8 562.2L146.7 562.2L147.6 562.2L148.5 562.2L149.4 562.2L150.3 562.2L151.2 562.2L152.1 562.2L153.0 562.2L153.9 562.2L154.8 562.2L155.7 562.2L156.6 562.2L157.5 562.2L158.4 562.2L159.3 562.2L160.2 562.2L161.1 562.2L162.0 562.2L162.9 562.2L163.8 557.3L164.7 553.0L165.6 550.2L166.5 551.2L167.4 552.1L168.3 552.2L169.2 552.5L170.1 551.3L171.0 551.5L171.9 550.8L172.8 551.7L173.7 551.5L174.6 550.5L175.5 550.3L176.4 549.6L177.3 548.9L178.2 548.8L179.1 549.9L180.0 550.0L180.9 553.0L181.8 555.0L182.7 555.9L183.6 556.6L184.5 557.9L185.4 558.1L186.3 558.2L187.2 558.4L188.1 558.7L189.0 558.6L189.9 559.0L190.8 559.3L191.7 559.5L192.6 559.5L193.5 559.7L194.4 559.5L195.3 559.2L196.2 559.3L197.1 558.8L198.0 558.6L198.9 551.7L199.8 550.5L200.7 550.2L201.6 550.6L202.5 551.6L203.4 550.7L204.3 550.1L205.2 550.4L206.1 550.2L207.0 550.3L207.9 549.4L208.8 547.4L209.7 546.3L210.6 546.6L211.5 546.0L212.4 546.7L213.3 549.2L214.2 550.3L215.1 551.0L216.0 551.3L216.9 553.1L217.8 554.3L218.7 555.4L219.6 556.7L220.5 557.7L221.4 558.3L222.3 558.5L223.2 558.3L224.1 558.7L225.0 558.8L225.9 558.8L226.8 558.9L227.7 558.7L228.6 558.5L229.5 558.4L230.4 558.7L231.3 559.0L232.2 559.2L233.1 559.1L234.0 559.0L234.9 559.0L235.8 559.1L236.7 559.3L237.6 559.3L238.5 559.5L239.4 559.3L240.3 559.4L241.2 558.9L242.1 558.7L243.0 559.1L243.9 559.3L244.8 559.5L245.7 559.5L246.6 559.5L247.5 559.9L248.4 559.8L249.3 559.7L250.2 559.9L251.1 559.9L252.0 560.0L252.9 560.0L253.8 560.1L254.7 560.4L255.6 560.5L256.5 560.7L257.4 561.3L258.3 561.7L259.2 561.7L260.1 561.7L261.0 561.8L261.9 561.8L262.8 561.8L263.7 561.8L264.6 561.8L265.5 561.9L266.4 561.9L267.3 560.5L268.2 556.1L269.1 553.9L270.0 554.0L270.9 553.1L271.8 552.8L272.7 553.4L273.6 552.6L274.5 552.7L275.4 553.0L276.3 553.9L277.2 555.1L278.1 554.9L279.0 554.8L279.9 554.5L280.8 553.3L281.7 552.9L282.6 553.2L283.5 553.2L284.4 553.7L285.3 554.7L286.2 555.9L287.1 556.4L288.0 557.0L288.9 557.0L289.8 557.7L290.7 558.3L291.6 558.5L292.5 559.3L293.4 559.3L294.3 559.6L295.2 559.7L296.1 560.0L297.0 560.2L297.9 560.4L298.8 560.5L299.7 560.6L300.6 560.7L301.5 560.9L302.4 561.0L303.3 561.3L304.2 561.6L305.1 562.2L306.0 562.2L306.9 562.2L307.8 562.2L308.7 562.2L309.6 562.2L310.5 562.2L311.4 562.2L312.3 562.2L313.2 562.2L314.1 562.2L315.0 562.2L315.9 562.2L316.8 562.2L317.7 562.2L318.6 562.2L319.5 562.2L320.4 562.2L321.3 562.2L322.2 562.2L323.1 562.2L324.0 562.2L324.9 562.2L325.8 562.2L326.7 562.2L327.6 562.2L328.5 562.2L329.4 562.2L330.3 562.2L331.2 562.2L332.1 562.2L333.0 562.2L333.9 562.2L334.8 562.2L335.7 562.2L336.6 562.2L337.5 562.2L338.4 562.2L339.3 562.2L340.2 562.2L341.1 562.2L342.0 562.2L342.9 562.2L343.8 562.2L344.7 562.2L345.6 562.2L346.5 562.2L347.4 562.2L348.3 557.9L349.2 554.7L350.1 553.4L351.0 552.7L351.9 552.2L352.8 552.2L353.7 553.0L354.6 553.4L355.5 553.0L356.4 554.0L357.3 553.6L358.2 553.0L359.1 553.2L360.0 552.2L360.9 551.5L361.8 551.9L362.7 551.7L363.6 552.8L364.5 551.6L365.4 552.1L366.3 551.8L367.2 551.8L368.1 554.2L369.0 555.7L369.9 557.2L370.8 558.2L371.7 558.5L372.6 558.2L373.5 558.4L374.4 558.3L375.3 558.6L376.2 558.6L377.1 558.9L378.0 559.0L378.9 559.2L379.8 559.2L380.7 559.4L381.6 559.5L382.5 559.1L383.4 557.6L384.3 555.2L385.2 553.6L386.1 551.7L387.0 550.5L387.9 551.1L388.8 551.4L389.7 551.2L390.6 550.4L391.5 550.8L392.4 550.9L393.3 550.4L394.2 549.6L395.1 549.1L396.0 547.8L396.9 546.9L397.8 547.9L398.7 549.5L399.6 549.1L400.5 548.6L401.4 550.8L402.3 553.3L403.2 555.7L404.1 557.2L405.0 557.5L405.9 557.0L406.8 556.9L407.7 556.8L408.6 556.9L409.5 557.0L410.4 557.5L411.3 557.2L412.2 557.7L413.1 558.0L414.0 558.0L414.9 558.0L415.8 557.5L416.7 557.8L417.6 557.5L418.5 557.7L419.4 558.2L420.3 558.8L421.2 558.3L422.1 558.2L423.0 558.2L423.9 558.1L424.8 558.3L425.7 558.3L426.6 558.5L427.5 558.6L428.4 558.5L429.3 558.9L430.2 559.0L431.1 559.1L432.0 559.0L432.9 558.8L433.8 559.1L434.7 559.2L435.6 559.0L436.5 559.2L437.4 559.6L438.3 559.4L439.2 559.6L440.1 559.8L441.0 559.8L441.9 560.1L442.8 560.4L443.7 560.3L444.6 560.4L445.5 560.7L446.4 561.0L447.3 561.0L448.2 560.9L449.1 560.8L450.0 560.9L450.9 561.1L451.8 561.2L452.7 561.3L453.6 561.4L454.5 561.4L455.4 561.4L456.3 561.4L457.2 561.5L458.1 561.5L459.0 561.6L459.9 561.7L460.8 561.8L461.7 561.9L462.6 561.7L463.5 561.8L464.4 561.8L465.3 561.8L466.2 561.9L467.1 561.9L468.0 561.9L468.9 561.9L469.8 562.0L470.7 562.0L471.6 562.0L472.5 562.0L473.4 562.0L474.3 562.1L475.2 562.1L476.1 562.1L477.0 562.1L477.9 562.2L478.8 562.2L479.7 562.2L480.6 562.2L481.5 562.2L482.4 562.2L483.3 562.2L484.2 562.2L485.1 562.2L486.0 562.2L486.9 562.2L487.8 562.2L488.7 562.2L489.6 562.2L490.5 562.2L491.4 562.2L492.3 562.2L493.2 562.2L494.1 562.2L495.0 562.2L495.9 562.2L496.8 562.2L497.7 562.2L498.6 562.2L499.5 562.2L500.4 562.2L501.3 562.2L502.2 562.2L503.1 562.2L504.0 562.2L504.9 562.2L505.8 562.2L506.7 562.2L507.6 562.2L508.5 562.2L509.4 562.2L510.3 562.2L511.2 562.2L512.1 562.2L513.0 562.2L513.9 562.2L514.8 562.2L515.7 562.2L516.6 562.2L517.5 562.2L518.4 562.2L519.3 562.2L520.2 562.2L521.1 562.2L522.0 562.2L522.9 562.2L523.8 562.2L524.7 562.2L525.6 562.2L526.5 562.2L527.4 562.2L528.3 562.2L529.2 562.2L530.1 562.2L531.0 562.2L531.9 562.2L532.8 562.2L533.7 562.2L534.6 560.5L535.5 556.5L536.4 556.5L537.3 555.4L538.2 555.8L539.1 554.8L540.0 554.7L540.9 554.4L541.8 554.3L542.7 554.7L543.6 554.6L544.5 553.4L545.4 552.0L546.3 552.0L547.2 552.0L548.1 552.7L549.0 554.1L549.9 554.4L550.8 554.9L551.7 554.9L552.6 554.6L553.5 555.0L554.4 556.0L555.3 556.8L556.2 557.7L557.1 558.4L558.0 559.2L558.9 559.6L559.8 559.7L560.7 559.6L561.6 560.0L562.5 560.0L563.4 560.1L564.3 560.1L565.2 560.4L566.1 560.6L567.0 560.6L567.9 560.6L568.8 560.3L569.7 559.7L570.6 555.2L571.5 555.8L572.4 555.3L573.3 554.6L574.2 554.1L575.1 553.8L576.0 553.7L576.9 553.7L577.8 553.5L578.7 553.7L579.6 554.1L580.5 554.2L581.4 553.8L582.3 554.6L583.2 553.5L584.1 553.7L585.0 553.9L585.9 553.6L586.8 553.8L587.7 553.8L588.6 553.8L589.5 553.4L590.4 555.3L591.3 558.0L592.2 559.2L593.1 559.3L594.0 559.4L594.9 559.6L595.8 559.6L596.7 559.6L597.6 559.9L598.5 560.2L599.4 560.1L600.3 560.2L601.2 560.4L602.1 560.4L603.0 560.3L603.9 560.5L604.8 560.4L605.7 560.4L606.6 560.6L607.5 560.6L608.4 560.5L609.3 560.5L610.2 560.6L611.1 560.9L612.0 560.8L612.9 560.9L613.8 560.8L614.7 560.4L615.6 560.3L616.5 557.8L617.4 555.7L618.3 551.9L619.2 551.3L620.1 554.3L621.0 556.0L621.9 558.3L622.8 559.6L623.7 559.4L624.6 559.5L625.5 559.7L626.4 559.5L627.3 559.5L628.2 559.6L629.1 559.5L630.0 559.7L630.9 560.1L631.8 560.2L632.7 559.9L633.6 559.9L634.5 560.0L635.4 560.0L636.3 560.3L637.2 560.5L638.1 560.6L639.0 560.7L639.9 560.6L640.8 560.6L641.7 560.8L642.6 560.8L643.5 560.7L644.4 560.7L645.3 560.8L646.2 560.8L647.1 560.9L648.0 560.9L648.9 560.9L649.8 561.0L650.7 561.1L651.6 561.2L652.5 561.2L653.4 561.3L654.3 561.3L655.2 561.1L656.1 561.0L657.0 560.3L657.9 560.6L658.8 561.4L659.7 561.6L660.6 561.8L661.5 561.7L662.4 561.7L663.3 561.8L664.2 561.7L665.1 561.8L666.0 561.8L666.9 561.8L667.8 561.9L668.7 561.9L669.6 561.9L670.5 562.0L671.4 562.0L672.3 562.0L673.2 562.1L674.1 562.1L675.0 562.2L675.9 562.2L675.9 563.5L675.0 563.6L674.1 563.7L673.2 563.7L672.3 563.8L671.4 563.8L670.5 563.8L669.6 563.9L668.7 563.9L667.8 563.9L666.9 564.0L666.0 564.0L665.1 564.0L664.2 564.1L663.3 563.9L662.4 564.1L661.5 564.1L660.6 564.0L659.7 564.2L658.8 564.5L657.9 565.5L657.0 565.6L656.1 564.7L655.2 564.5L654.3 564.3L653.4 564.4L652.5 564.4L651.6 564.4L650.7 564.5L649.8 564.4L648.9 564.6L648.0 564.7L647.1 564.8L646.2 564.8L645.3 564.8L644.4 564.8L643.5 564.8L642.6 564.8L641.7 564.9L640.8 565.0L639.9 565.0L639.0 565.2L638.1 565.2L637.2 565.4L636.3 565.5L635.4 565.4L634.5 565.3L633.6 565.3L632.7 565.6L631.8 565.7L630.9 565.5L630.0 565.5L629.1 565.7L628.2 565.9L627.3 566.0L626.4 566.0L625.5 565.9L624.6 565.9L623.7 566.2L622.8 566.5L621.9 568.3L621.0 569.6L620.1 571.6L619.2 574.9L618.3 571.6L617.4 569.3L616.5 567.3L615.6 565.4L614.7 565.3L613.8 565.3L612.9 565.1L612.0 564.9L611.1 565.1L610.2 565.1L609.3 565.1L608.4 565.0L607.5 565.2L606.6 565.2L605.7 565.3L604.8 565.4L603.9 565.6L603.0 565.7L602.1 565.6L601.2 565.4L600.3 565.4L599.4 565.6L598.5 565.8L597.6 565.9L596.7 566.1L595.8 566.1L594.9 566.1L594.0 566.1L593.1 566.3L592.2 566.5L591.3 567.8L590.4 569.9L589.5 572.2L588.6 571.8L587.7 571.9L586.8 572.3L585.9 571.7L585.0 572.4L584.1 572.8L583.2 572.9L582.3 573.0L581.4 572.0L580.5 572.2L579.6 571.3L578.7 571.4L577.8 571.4L576.9 571.0L576.0 571.9L575.1 571.7L574.2 571.1L573.3 570.5L572.4 570.4L571.5 570.3L570.6 570.3L569.7 566.2L568.8 565.7L567.9 565.2L567.0 565.3L566.1 565.5L565.2 565.8L564.3 565.5L563.4 565.5L562.5 565.8L561.6 566.2L560.7 566.3L559.8 566.3L558.9 566.6L558.0 567.1L557.1 567.9L556.2 568.5L555.3 569.2L554.4 569.8L553.5 570.7L552.6 571.6L551.7 571.7L550.8 572.1L549.9 572.3L549.0 572.8L548.1 573.1L547.2 573.3L546.3 572.8L545.4 572.3L544.5 572.7L543.6 572.6L542.7 572.7L541.8 571.3L540.9 571.3L540.0 572.3L539.1 571.8L538.2 571.3L537.3 571.2L536.4 571.0L535.5 569.8L534.6 565.5L533.7 563.5L532.8 563.5L531.9 563.5L531.0 563.5L530.1 563.5L529.2 563.5L528.3 563.5L527.4 563.5L526.5 563.5L525.6 563.5L524.7 563.5L523.8 563.5L522.9 563.5L522.0 563.5L521.1 563.5L520.2 563.5L519.3 563.5L518.4 563.5L517.5 563.5L516.6 563.5L515.7 563.5L514.8 563.5L513.9 563.5L513.0 563.5L512.1 563.5L511.2 563.5L510.3 563.5L509.4 563.5L508.5 563.5L507.6 563.5L506.7 563.5L505.8 563.5L504.9 563.5L504.0 563.5L503.1 563.5L502.2 563.5L501.3 563.5L500.4 563.5L499.5 563.5L498.6 563.5L497.7 563.5L496.8 563.5L495.9 563.5L495.0 563.5L494.1 563.5L493.2 563.5L492.3 563.5L491.4 563.5L490.5 563.5L489.6 563.5L488.7 563.5L487.8 563.5L486.9 563.5L486.0 563.5L485.1 563.5L484.2 563.6L483.3 563.6L482.4 563.6L481.5 563.6L480.6 563.6L479.7 563.6L478.8 563.6L477.9 563.6L477.0 563.7L476.1 563.7L475.2 563.7L474.3 563.7L473.4 563.8L472.5 563.8L471.6 563.8L470.7 563.8L469.8 563.8L468.9 563.9L468.0 563.9L467.1 563.9L466.2 563.9L465.3 564.0L464.4 564.0L463.5 564.0L462.6 564.1L461.7 564.0L460.8 564.1L459.9 564.2L459.0 564.1L458.1 564.2L457.2 564.1L456.3 564.3L455.4 564.5L454.5 564.5L453.6 564.5L452.7 564.5L451.8 564.6L450.9 564.7L450.0 564.7L449.1 564.6L448.2 564.8L447.3 565.0L446.4 565.2L445.5 565.2L444.6 565.3L443.7 565.1L442.8 565.4L441.9 565.7L441.0 565.9L440.1 566.0L439.2 566.3L438.3 566.3L437.4 566.5L436.5 566.6L435.6 566.4L434.7 566.6L433.8 566.6L432.9 566.8L432.0 566.9L431.1 566.5L430.2 566.9L429.3 567.2L428.4 567.1L427.5 567.4L426.6 567.5L425.7 567.7L424.8 567.7L423.9 567.6L423.0 567.8L422.1 567.7L421.2 567.5L420.3 567.5L419.4 567.2L418.5 567.4L417.6 567.3L416.7 567.5L415.8 567.3L414.9 567.4L414.0 568.0L413.1 568.0L412.2 568.3L411.3 568.2L410.4 568.0L409.5 567.8L408.6 567.7L407.7 567.7L406.8 568.3L405.9 568.5L405.0 568.3L404.1 569.3L403.2 570.3L402.3 572.5L401.4 574.3L400.5 577.1L399.6 576.7L398.7 576.9L397.8 577.8L396.9 578.8L396.0 578.8L395.1 578.0L394.2 576.4L393.3 576.3L392.4 575.2L391.5 575.2L390.6 574.5L389.7 575.4L388.8 574.8L387.9 573.9L387.0 573.7L386.1 573.2L385.2 573.8L384.3 571.9L383.4 568.4L382.5 566.7L381.6 566.4L380.7 566.6L379.8 566.3L378.9 566.3L378.0 566.6L377.1 566.6L376.2 567.2L375.3 567.1L374.4 567.4L373.5 567.1L372.6 567.4L371.7 567.8L370.8 568.0L369.9 568.9L369.0 570.5L368.1 571.7L367.2 573.6L366.3 573.4L365.4 573.0L364.5 574.5L363.6 574.4L362.7 575.1L361.8 574.5L360.9 574.9L360.0 573.7L359.1 572.7L358.2 572.0L357.3 571.7L356.4 571.7L355.5 572.3L354.6 572.0L353.7 572.8L352.8 572.3L351.9 572.0L351.0 572.1L350.1 572.3L349.2 571.3L348.3 568.3L347.4 563.5L346.5 563.5L345.6 563.5L344.7 563.5L343.8 563.5L342.9 563.5L342.0 563.5L341.1 563.5L340.2 563.5L339.3 563.5L338.4 563.5L337.5 563.5L336.6 563.5L335.7 563.5L334.8 563.5L333.9 563.5L333.0 563.5L332.1 563.5L331.2 563.5L330.3 563.5L329.4 563.5L328.5 563.5L327.6 563.5L326.7 563.5L325.8 563.5L324.9 563.5L324.0 563.5L323.1 563.5L322.2 563.5L321.3 563.5L320.4 563.5L319.5 563.5L318.6 563.5L317.7 563.5L316.8 563.5L315.9 563.5L315.0 563.5L314.1 563.5L313.2 563.5L312.3 563.5L311.4 563.5L310.5 563.5L309.6 563.5L308.7 563.5L307.8 563.5L306.9 563.5L306.0 563.5L305.1 563.5L304.2 564.3L303.3 564.7L302.4 564.9L301.5 565.1L300.6 565.2L299.7 565.5L298.8 565.4L297.9 565.5L297.0 565.5L296.1 566.0L295.2 566.5L294.3 566.5L293.4 567.0L292.5 567.2L291.6 567.5L290.7 567.8L289.8 568.2L288.9 568.4L288.0 568.9L287.1 569.7L286.2 571.3L285.3 571.9L284.4 572.4L283.5 572.0L282.6 572.7L281.7 572.2L280.8 572.7L279.9 572.9L279.0 572.6L278.1 572.0L277.2 571.4L276.3 572.0L275.4 572.5L274.5 573.3L273.6 573.8L272.7 573.7L271.8 572.2L270.9 571.7L270.0 571.3L269.1 571.9L268.2 569.6L267.3 565.1L266.4 563.9L265.5 563.9L264.6 564.0L263.7 564.0L262.8 564.0L261.9 564.0L261.0 564.0L260.1 564.1L259.2 564.1L258.3 564.1L257.4 564.7L256.5 565.2L255.6 565.6L254.7 565.6L253.8 565.6L252.9 565.7L252.0 565.6L251.1 566.0L250.2 566.2L249.3 566.1L248.4 566.4L247.5 566.1L246.6 566.3L245.7 566.0L244.8 565.9L243.9 566.3L243.0 566.2L242.1 566.6L241.2 566.5L240.3 566.8L239.4 566.5L238.5 566.4L237.6 566.6L236.7 566.8L235.8 566.7L234.9 566.9L234.0 566.7L233.1 567.0L232.2 566.7L231.3 566.8L230.4 566.3L229.5 566.6L228.6 566.7L227.7 566.7L226.8 567.0L225.9 567.4L225.0 566.9L224.1 567.0L223.2 567.3L222.3 567.0L221.4 567.6L220.5 567.9L219.6 569.0L218.7 570.4L217.8 571.1L216.9 573.4L216.0 575.6L215.1 575.8L214.2 576.8L213.3 577.3L212.4 579.9L211.5 580.2L210.6 578.3L209.7 576.2L208.8 575.5L207.9 575.2L207.0 574.9L206.1 575.2L205.2 573.9L204.3 574.2L203.4 574.2L202.5 575.1L201.6 575.8L200.7 577.9L199.8 577.1L198.9 575.1L198.0 567.6L197.1 567.3L196.2 566.7L195.3 566.8L194.4 566.7L193.5 566.7L192.6 566.6L191.7 566.7L190.8 566.6L189.9 566.8L189.0 566.9L188.1 567.0L187.2 567.3L186.3 568.0L185.4 568.3L184.5 568.7L183.6 569.1L182.7 569.9L181.8 569.9L180.9 572.4L180.0 575.4L179.1 575.8L178.2 577.3L177.3 576.5L176.4 575.9L175.5 575.0L174.6 575.3L173.7 575.0L172.8 574.9L171.9 574.2L171.0 574.9L170.1 575.3L169.2 575.8L168.3 575.2L167.4 575.3L166.5 575.5L165.6 576.1L164.7 573.6L163.8 568.9L162.9 563.5L162.0 563.5L161.1 563.5L160.2 563.5L159.3 563.5L158.4 563.5L157.5 563.5L156.6 563.5L155.7 563.5L154.8 563.5L153.9 563.5L153.0 563.5L152.1 563.5L151.2 563.5L150.3 563.5L149.4 563.5L148.5 563.5L147.6 563.5L146.7 563.5L145.8 563.5L144.9 563.5L144.0 563.5L143.1 563.5L142.2 563.5L141.3 563.5L140.4 563.5L139.5 563.5L138.6 563.5L137.7 563.5L136.8 563.5L135.9 563.5L135.0 563.5L134.1 563.5L133.2 563.5L132.3 563.5L131.4 563.5L130.5 563.5L129.6 563.5L128.7 563.5L127.8 563.5L126.9 563.5L126.0 563.5L125.1 563.5L124.2 563.5L123.3 563.5L122.4 563.5L121.5 563.5L120.6 563.5L119.7 563.5L118.8 563.5L117.9 563.5L117.0 563.5L116.1 563.5L115.2 563.5L114.3 563.5L113.4 563.5L112.5 563.5L111.6 563.5L110.7 563.5L109.8 563.5L108.9 563.6L108.0 563.6L107.1 563.6L106.2 563.6L105.3 563.6L104.4 563.6L103.5 563.6L102.6 563.6L101.7 563.6L100.8 563.6L99.9 563.6L99.0 563.6L98.1 563.6L97.2 563.6L96.3 563.6L95.4 563.7L94.5 563.7L93.6 563.7L92.7 563.7L91.8 563.7L90.9 563.7L90.0 563.7L89.1 563.7L88.2 563.8L87.3 563.8L86.4 563.8L85.5 563.8L84.6 563.8L83.7 563.8L82.8 563.9L81.9 563.9L81.0 563.9L80.1 563.9L79.2 563.9L78.3 564.0L77.4 564.0L76.5 564.0L75.6 564.0L74.7 564.0L73.8 564.1L72.9 564.1L72.0 564.3L71.1 564.6L70.2 564.9L69.3 565.5L68.4 565.9L67.5 566.1L66.6 566.0L65.7 565.8L64.8 565.6L63.9 565.5L63.0 565.6L62.1 565.8L61.2 565.9L60.3 565.9L59.4 565.9L58.5 565.9L57.6 565.8L56.7 566.0L55.8 565.9L54.9 566.1L54.0 565.9L53.1 566.1L52.2 566.3L51.3 566.4L50.4 566.6L49.5 566.4L48.6 566.5L47.7 566.5L46.8 566.1L45.9 566.0L45.0 566.0L44.1 566.3L43.2 566.3L42.3 566.3L41.4 566.6L40.5 566.5L39.6 567.0L38.7 566.7L37.8 566.9L36.9 566.7L36.0 567.3L35.1 568.1L34.2 568.6L33.3 569.6L32.4 570.7L31.5 572.8L30.6 574.7L29.7 574.9L28.8 576.4L27.9 574.6L27.0 573.8L26.1 574.5L25.2 576.2L24.3 577.1L23.4 577.3L22.5 576.1L21.6 575.8L20.7 575.8L19.8 575.8L18.9 573.7L18.0 573.0L17.1 572.3L16.2 573.2L15.3 572.8L14.4 572.9L13.5 571.9L12.6 571.4L11.7 565.4L10.8 565.1L9.9 565.0L9.0 564.9L8.1 565.0L7.2 565.1L6.3 565.5L5.4 565.5L4.5 565.8L3.6 565.6L2.7 565.6L1.8 565.7L0.9 566.0L0.0 566.2Z" fill="#1e1d22"/>
<path d="M0.0 605.7L0.9 605.7L1.8 605.8L2.7 605.9L3.6 606.1L4.5 605.9L5.4 606.0L6.3 606.2L7.2 606.4L8.1 606.5L9.0 606.6L9.9 606.6L10.8 606.3L11.7 606.2L12.6 602.3L13.5 600.5L14.4 600.9L15.3 600.8L16.2 600.1L17.1 599.9L18.0 599.7L18.9 599.6L19.8 599.6L20.7 599.9L21.6 598.8L22.5 598.9L23.4 598.2L24.3 598.5L25.2 598.9L26.1 599.7L27.0 600.5L27.9 600.2L28.8 600.1L29.7 600.7L30.6 601.4L31.5 601.7L32.4 601.7L33.3 602.4L34.2 602.9L35.1 603.6L36.0 604.2L36.9 604.8L37.8 604.9L38.7 604.9L39.6 604.9L40.5 605.1L41.4 605.4L42.3 605.5L43.2 605.5L44.1 605.5L45.0 605.4L45.9 605.3L46.8 605.2L47.7 605.3L48.6 605.4L49.5 605.1L50.4 605.4L51.3 605.4L52.2 605.3L53.1 605.4L54.0 605.6L54.9 605.8L55.8 605.7L56.7 605.5L57.6 605.6L58.5 605.4L59.4 605.5L60.3 605.5L61.2 605.7L62.1 605.8L63.0 605.7L63.9 605.9L64.8 605.8L65.7 605.8L66.6 605.9L67.5 606.1L68.4 606.1L69.3 606.1L70.2 606.2L71.1 606.5L72.0 606.8L72.9 607.0L73.8 607.0L74.7 607.0L75.6 607.0L76.5 607.0L77.4 607.0L78.3 607.1L79.2 607.1L80.1 607.1L81.0 607.1L81.9 607.1L82.8 607.1L83.7 607.1L84.6 607.1L85.5 607.1L86.4 607.1L87.3 607.1L88.2 607.1L89.1 607.1L90.0 607.1L90.9 607.1L91.8 607.1L92.7 607.1L93.6 607.1L94.5 607.1L95.4 607.1L96.3 607.1L97.2 607.1L98.1 607.1L99.0 607.1L99.9 607.1L100.8 607.1L101.7 607.1L102.6 607.1L103.5 607.1L104.4 607.1L105.3 607.1L106.2 607.1L107.1 607.1L108.0 607.1L108.9 607.1L109.8 607.1L110.7 607.1L111.6 607.1L112.5 607.1L113.4 607.1L114.3 607.1L115.2 607.1L116.1 607.1L117.0 607.1L117.9 607.1L118.8 607.1L119.7 607.1L120.6 607.1L121.5 607.1L122.4 607.1L123.3 607.1L124.2 607.1L125.1 607.1L126.0 607.1L126.9 607.1L127.8 607.1L128.7 607.1L129.6 607.1L130.5 607.1L131.4 607.1L132.3 607.1L133.2 607.1L134.1 607.1L135.0 607.1L135.9 607.1L136.8 607.1L137.7 607.1L138.6 607.1L139.5 607.1L140.4 607.1L141.3 607.1L142.2 607.1L143.1 607.1L144.0 607.1L144.9 607.1L145.8 607.1L146.7 607.1L147.6 607.1L148.5 607.1L149.4 607.1L150.3 607.1L151.2 607.1L152.1 607.1L153.0 607.1L153.9 607.1L154.8 607.1L155.7 607.1L156.6 607.1L157.5 607.1L158.4 607.1L159.3 607.1L160.2 607.1L161.1 607.1L162.0 607.1L162.9 607.1L163.8 604.0L164.7 600.1L165.6 597.5L166.5 598.5L167.4 599.3L168.3 598.6L169.2 598.6L170.1 598.9L171.0 599.3L171.9 598.9L172.8 599.2L173.7 598.9L174.6 599.5L175.5 600.0L176.4 600.4L177.3 600.1L178.2 599.0L179.1 598.7L180.0 599.0L180.9 600.4L181.8 602.3L182.7 602.7L183.6 603.4L184.5 603.9L185.4 604.3L186.3 604.1L187.2 604.1L188.1 604.4L189.0 604.6L189.9 604.7L190.8 604.9L191.7 604.8L192.6 605.3L193.5 605.3L194.4 605.4L195.3 605.4L196.2 605.4L197.1 605.1L198.0 604.9L198.9 600.0L199.8 598.8L200.7 599.4L201.6 598.8L202.5 599.8L203.4 599.2L204.3 598.4L205.2 598.2L206.1 598.9L207.0 599.5L207.9 598.9L208.8 599.0L209.7 599.0L210.6 598.7L211.5 598.0L212.4 597.7L213.3 598.5L214.2 598.9L215.1 598.9L216.0 599.1L216.9 600.8L217.8 602.2L218.7 602.8L219.6 603.6L220.5 604.6L221.4 604.8L222.3 605.1L223.2 604.7L224.1 604.6L225.0 604.6L225.9 604.8L226.8 604.9L227.7 605.1L228.6 605.1L229.5 605.3L230.4 605.3L231.3 605.4L232.2 605.3L233.1 605.3L234.0 605.2L234.9 605.4L235.8 605.2L236.7 605.0L237.6 605.1L238.5 605.3L239.4 605.3L240.3 605.4L241.2 605.4L242.1 605.6L243.0 605.5L243.9 605.4L244.8 605.4L245.7 605.6L246.6 605.5L247.5 605.3L248.4 605.3L249.3 605.3L250.2 605.6L251.1 605.9L252.0 605.7L252.9 605.7L253.8 605.8L254.7 605.7L255.6 605.9L256.5 606.2L257.4 606.6L258.3 607.0L259.2 607.0L260.1 607.0L261.0 607.0L261.9 607.0L262.8 607.0L263.7 607.0L264.6 607.1L265.5 607.1L266.4 607.1L267.3 606.4L268.2 604.0L269.1 602.1L270.0 601.4L270.9 601.6L271.8 601.2L272.7 601.6L273.6 601.0L274.5 600.7L275.4 600.3L276.3 600.5L277.2 600.8L278.1 600.9L279.0 601.5L279.9 601.4L280.8 601.9L281.7 602.2L282.6 602.0L283.5 601.9L284.4 601.9L285.3 602.0L286.2 602.9L287.1 603.6L288.0 604.1L288.9 604.2L289.8 604.6L290.7 604.5L291.6 604.7L292.5 604.7L293.4 605.2L294.3 605.5L295.2 605.6L296.1 606.0L297.0 606.0L297.9 606.0L298.8 605.9L299.7 606.0L300.6 606.2L301.5 606.3L302.4 606.5L303.3 606.5L304.2 606.7L305.1 607.1L306.0 607.1L306.9 607.1L307.8 607.1L308.7 607.1L309.6 607.1L310.5 607.1L311.4 607.1L312.3 607.1L313.2 607.1L314.1 607.1L315.0 607.1L315.9 607.1L316.8 607.1L317.7 607.1L318.6 607.1L319.5 607.1L320.4 607.1L321.3 607.1L322.2 607.1L323.1 607.1L324.0 607.1L324.9 607.1L325.8 607.1L326.7 607.1L327.6 607.1L328.5 607.1L329.4 607.1L330.3 607.1L331.2 607.1L332.1 607.1L333.0 607.1L333.9 607.1L334.8 607.1L335.7 607.1L336.6 607.1L337.5 607.1L338.4 607.1L339.3 607.1L340.2 607.1L341.1 607.1L342.0 607.1L342.9 607.1L343.8 607.1L344.7 607.1L345.6 607.1L346.5 607.1L347.4 607.1L348.3 604.4L349.2 601.9L350.1 601.3L351.0 601.0L351.9 600.5L352.8 601.0L353.7 601.1L354.6 601.3L355.5 600.9L356.4 599.9L357.3 600.0L358.2 599.6L359.1 599.6L360.0 599.3L360.9 599.9L361.8 599.8L362.7 600.7L363.6 600.3L364.5 600.2L365.4 600.0L366.3 600.7L367.2 601.3L368.1 601.6L369.0 602.4L369.9 602.8L370.8 603.8L371.7 604.1L372.6 604.4L373.5 604.7L374.4 604.9L375.3 605.3L376.2 605.4L377.1 605.2L378.0 605.2L378.9 605.0L379.8 605.2L380.7 605.3L381.6 605.3L382.5 604.6L383.4 603.5L384.3 601.3L385.2 600.5L386.1 600.3L387.0 600.7L387.9 600.4L388.8 599.7L389.7 599.7L390.6 599.2L391.5 598.1L392.4 599.0L393.3 599.6L394.2 599.1L395.1 597.9L396.0 595.7L396.9 595.9L397.8 597.5L398.7 598.7L399.6 598.5L400.5 597.8L401.4 599.1L402.3 600.2L403.2 602.1L404.1 603.0L405.0 603.5L405.9 603.4L406.8 603.7L407.7 603.7L408.6 603.9L409.5 603.9L410.4 604.2L411.3 604.5L412.2 604.7L413.1 604.3L414.0 604.2L414.9 604.4L415.8 604.8L416.7 604.3L417.6 604.2L418.5 604.3L419.4 604.3L420.3 604.4L421.2 604.5L422.1 604.6L423.0 604.7L423.9 604.7L424.8 604.8L425.7 605.0L426.6 605.1L427.5 605.0L428.4 605.2L429.3 605.1L430.2 605.1L431.1 604.8L432.0 605.0L432.9 605.1L433.8 605.0L434.7 604.9L435.6 604.7L436.5 605.0L437.4 605.2L438.3 605.2L439.2 605.5L440.1 605.7L441.0 605.9L441.9 606.0L442.8 606.0L443.7 606.1L444.6 606.0L445.5 606.2L446.4 606.3L447.3 606.4L448.2 606.5L449.1 606.6L450.0 606.6L450.9 606.5L451.8 606.6L452.7 606.7L453.6 606.7L454.5 606.7L455.4 606.8L456.3 606.8L457.2 606.8L458.1 606.8L459.0 606.9L459.9 606.9L460.8 606.9L461.7 606.9L462.6 607.0L463.5 607.0L464.4 607.0L465.3 607.1L466.2 607.1L467.1 607.1L468.0 607.1L468.9 607.1L469.8 607.1L470.7 607.1L471.6 607.1L472.5 607.1L473.4 607.1L474.3 607.1L475.2 607.1L476.1 607.1L477.0 607.1L477.9 607.1L478.8 607.1L479.7 607.1L480.6 607.1L481.5 607.1L482.4 607.1L483.3 607.1L484.2 607.1L485.1 607.1L486.0 607.1L486.9 607.1L487.8 607.1L488.7 607.1L489.6 607.1L490.5 607.1L491.4 607.1L492.3 607.1L493.2 607.1L494.1 607.1L495.0 607.1L495.9 607.1L496.8 607.1L497.7 607.1L498.6 607.1L499.5 607.1L500.4 607.1L501.3 607.1L502.2 607.1L503.1 607.1L504.0 607.1L504.9 607.1L505.8 607.1L506.7 607.1L507.6 607.1L508.5 607.1L509.4 607.1L510.3 607.1L511.2 607.1L512.1 607.1L513.0 607.1L513.9 607.1L514.8 607.1L515.7 607.1L516.6 607.1L517.5 607.1L518.4 607.1L519.3 607.1L520.2 607.1L521.1 607.1L522.0 607.1L522.9 607.1L523.8 607.1L524.7 607.1L525.6 607.1L526.5 607.1L527.4 607.1L528.3 607.1L529.2 607.1L530.1 607.1L531.0 607.1L531.9 607.1L532.8 607.1L533.7 607.1L534.6 605.9L535.5 602.6L536.4 602.5L537.3 602.5L538.2 602.4L539.1 602.2L540.0 601.8L540.9 601.4L541.8 601.5L542.7 601.2L543.6 600.5L544.5 600.8L545.4 600.9L546.3 601.3L547.2 600.7L548.1 600.5L549.0 600.5L549.9 600.8L550.8 600.9L551.7 601.8L552.6 602.0L553.5 602.0L554.4 602.4L555.3 603.3L556.2 603.8L557.1 604.6L558.0 605.4L558.9 605.5L559.8 605.4L560.7 605.3L561.6 605.5L562.5 605.8L563.4 605.9L564.3 605.8L565.2 605.8L566.1 605.9L567.0 606.0L567.9 606.2L568.8 605.7L569.7 605.2L570.6 602.1L571.5 602.0L572.4 601.3L573.3 601.6L574.2 601.2L575.1 601.5L576.0 601.7L576.9 601.8L577.8 602.0L578.7 602.1L579.6 601.7L580.5 601.0L581.4 600.8L582.3 601.1L583.2 601.2L584.1 601.3L585.0 600.6L585.9 601.2L586.8 602.0L587.7 601.8L588.6 602.1L589.5 602.5L590.4 603.6L591.3 604.6L592.2 605.2L593.1 605.5L594.0 605.2L594.9 605.5L595.8 605.6L596.7 605.7L597.6 605.7L598.5 605.5L599.4 605.7L600.3 605.9L601.2 605.9L602.1 606.0L603.0 606.0L603.9 606.0L604.8 606.2L605.7 606.1L606.6 606.2L607.5 606.1L608.4 606.2L609.3 606.4L610.2 606.4L611.1 606.3L612.0 606.3L612.9 606.3L613.8 606.1L614.7 606.0L615.6 605.9L616.5 604.6L617.4 602.6L618.3 600.6L619.2 598.6L620.1 601.1L621.0 603.1L621.9 604.5L622.8 605.4L623.7 605.6L624.6 605.6L625.5 605.7L626.4 605.9L627.3 605.9L628.2 605.7L629.1 605.5L630.0 605.6L630.9 605.5L631.8 605.6L632.7 605.8L633.6 605.8L634.5 605.9L635.4 605.8L636.3 605.9L637.2 606.0L638.1 605.9L639.0 606.1L639.9 606.2L640.8 606.3L641.7 606.2L642.6 606.2L643.5 606.3L644.4 606.2L645.3 606.4L646.2 606.4L647.1 606.5L648.0 606.4L648.9 606.4L649.8 606.4L650.7 606.5L651.6 606.6L652.5 606.6L653.4 606.6L654.3 606.6L655.2 606.7L656.1 606.6L657.0 606.0L657.9 606.0L658.8 606.6L659.7 606.7L660.6 606.9L661.5 606.9L662.4 606.9L663.3 607.0L664.2 607.0L665.1 607.0L666.0 607.0L666.9 607.0L667.8 607.1L668.7 607.1L669.6 607.1L670.5 607.1L671.4 607.1L672.3 607.1L673.2 607.1L674.1 607.1L675.0 607.1L675.9 607.1L675.9 608.4L675.0 608.4L674.1 608.4L673.2 608.4L672.3 608.4L671.4 608.4L670.5 608.5L669.6 608.5L668.7 608.5L667.8 608.5L666.9 608.6L666.0 608.6L665.1 608.6L664.2 608.6L663.3 608.6L662.4 608.7L661.5 608.7L660.6 608.7L659.7 608.9L658.8 609.0L657.9 609.4L657.0 609.5L656.1 608.9L655.2 608.9L654.3 609.0L653.4 609.0L652.5 609.0L651.6 608.9L650.7 608.9L649.8 609.0L648.9 609.1L648.0 609.1L647.1 609.1L646.2 609.1L645.3 609.2L644.4 609.2L643.5 609.2L642.6 609.2L641.7 609.3L640.8 609.3L639.9 609.3L639.0 609.5L638.1 609.6L637.2 609.7L636.3 609.6L635.4 609.5L634.5 609.5L633.6 609.6L632.7 609.6L631.8 609.7L630.9 609.9L630.0 609.9L629.1 609.9L628.2 610.1L627.3 610.1L626.4 610.2L625.5 610.1L624.6 610.3L623.7 610.2L622.8 610.2L621.9 611.3L621.0 612.9L620.1 614.6L619.2 617.2L618.3 615.7L617.4 613.2L616.5 611.2L615.6 609.7L614.7 609.7L613.8 609.6L612.9 609.3L612.0 609.3L611.1 609.4L610.2 609.3L609.3 609.3L608.4 609.4L607.5 609.3L606.6 609.4L605.7 609.4L604.8 609.5L603.9 609.5L603.0 609.7L602.1 609.6L601.2 609.9L600.3 609.8L599.4 609.7L598.5 609.6L597.6 609.7L596.7 609.7L595.8 610.0L594.9 610.0L594.0 610.2L593.1 610.1L592.2 610.5L591.3 611.3L590.4 612.7L589.5 613.6L588.6 613.9L587.7 613.8L586.8 613.8L585.9 613.9L585.0 614.0L584.1 613.9L583.2 614.7L582.3 614.6L581.4 614.7L580.5 614.9L579.6 614.5L578.7 613.8L577.8 614.0L576.9 613.8L576.0 613.4L575.1 614.2L574.2 614.3L573.3 613.9L572.4 614.0L571.5 613.9L570.6 613.5L569.7 610.4L568.8 609.9L567.9 609.5L567.0 609.6L566.1 609.5L565.2 609.5L564.3 609.5L563.4 609.6L562.5 609.6L561.6 609.8L560.7 609.9L559.8 610.1L558.9 610.4L558.0 610.5L557.1 611.1L556.2 611.5L555.3 612.0L554.4 612.6L553.5 613.5L552.6 613.9L551.7 614.6L550.8 614.2L549.9 614.2L549.0 614.6L548.1 614.2L547.2 614.2L546.3 614.4L545.4 614.4L544.5 614.6L543.6 614.3L542.7 614.3L541.8 613.8L540.9 613.6L540.0 614.2L539.1 613.8L538.2 613.6L537.3 613.2L536.4 612.8L535.5 612.5L534.6 609.5L533.7 608.4L532.8 608.4L531.9 608.4L531.0 608.4L530.1 608.4L529.2 608.4L528.3 608.4L527.4 608.4L526.5 608.4L525.6 608.4L524.7 608.4L523.8 608.4L522.9 608.4L522.0 608.4L521.1 608.4L520.2 608.4L519.3 608.4L518.4 608.4L517.5 608.4L516.6 608.4L515.7 608.4L514.8 608.4L513.9 608.4L513.0 608.4L512.1 608.4L511.2 608.4L510.3 608.4L509.4 608.4L508.5 608.4L507.6 608.4L506.7 608.4L505.8 608.4L504.9 608.4L504.0 608.4L503.1 608.4L502.2 608.4L501.3 608.4L500.4 608.4L499.5 608.4L498.6 608.4L497.7 608.4L496.8 608.4L495.9 608.4L495.0 608.4L494.1 608.4L493.2 608.4L492.3 608.4L491.4 608.4L490.5 608.4L489.6 608.4L488.7 608.4L487.8 608.4L486.9 608.4L486.0 608.4L485.1 608.4L484.2 608.4L483.3 608.4L482.4 608.4L481.5 608.4L480.6 608.4L479.7 608.4L478.8 608.4L477.9 608.4L477.0 608.4L476.1 608.4L475.2 608.4L474.3 608.4L473.4 608.4L472.5 608.4L471.6 608.4L470.7 608.4L469.8 608.5L468.9 608.5L468.0 608.5L467.1 608.5L466.2 608.5L465.3 608.5L464.4 608.6L463.5 608.6L462.6 608.6L461.7 608.7L460.8 608.7L459.9 608.7L459.0 608.7L458.1 608.8L457.2 608.8L456.3 608.8L455.4 608.8L454.5 608.9L453.6 608.9L452.7 608.9L451.8 608.9L450.9 608.9L450.0 609.1L449.1 609.2L448.2 609.3L447.3 609.3L446.4 609.4L445.5 609.5L444.6 609.5L443.7 609.5L442.8 609.7L441.9 609.8L441.0 610.0L440.1 610.2L439.2 610.3L438.3 610.2L437.4 610.2L436.5 610.6L435.6 610.7L434.7 610.5L433.8 610.4L432.9 610.5L432.0 610.5L431.1 610.6L430.2 610.8L429.3 610.9L428.4 611.1L427.5 610.8L426.6 610.9L425.7 610.8L424.8 611.0L423.9 610.8L423.0 610.8L422.1 610.7L421.2 610.9L420.3 611.0L419.4 611.3L418.5 611.3L417.6 611.2L416.7 611.3L415.8 611.3L414.9 611.4L414.0 611.4L413.1 611.5L412.2 611.4L411.3 610.9L410.4 611.3L409.5 611.3L408.6 611.4L407.7 611.3L406.8 611.4L405.9 611.8L405.0 612.4L404.1 612.9L403.2 612.9L402.3 614.4L401.4 615.7L400.5 617.1L399.6 617.3L398.7 616.7L397.8 617.2L396.9 619.7L396.0 619.8L395.1 618.6L394.2 617.6L393.3 616.5L392.4 615.8L391.5 616.3L390.6 616.4L389.7 616.1L388.8 615.9L387.9 615.9L387.0 615.7L386.1 615.3L385.2 614.5L384.3 613.5L383.4 611.9L382.5 610.9L381.6 610.2L380.7 610.2L379.8 610.3L378.9 610.4L378.0 610.6L377.1 610.5L376.2 610.6L375.3 610.7L374.4 610.7L373.5 610.9L372.6 611.3L371.7 611.6L370.8 611.5L369.9 612.1L369.0 612.9L368.1 614.4L367.2 615.5L366.3 615.5L365.4 616.1L364.5 615.6L363.6 614.9L362.7 614.9L361.8 615.4L360.9 615.2L360.0 615.2L359.1 615.2L358.2 615.0L357.3 614.9L356.4 615.0L355.5 615.5L354.6 615.5L353.7 615.1L352.8 614.9L351.9 615.1L351.0 614.5L350.1 613.8L349.2 613.2L348.3 611.6L347.4 608.4L346.5 608.4L345.6 608.4L344.7 608.4L343.8 608.4L342.9 608.4L342.0 608.4L341.1 608.4L340.2 608.4L339.3 608.4L338.4 608.4L337.5 608.4L336.6 608.4L335.7 608.4L334.8 608.4L333.9 608.4L333.0 608.4L332.1 608.4L331.2 608.4L330.3 608.4L329.4 608.4L328.5 608.4L327.6 608.4L326.7 608.4L325.8 608.4L324.9 608.4L324.0 608.4L323.1 608.4L322.2 608.4L321.3 608.4L320.4 608.4L319.5 608.4L318.6 608.4L317.7 608.4L316.8 608.4L315.9 608.4L315.0 608.4L314.1 608.4L313.2 608.4L312.3 608.4L311.4 608.4L310.5 608.4L309.6 608.4L308.7 608.4L307.8 608.4L306.9 608.4L306.0 608.4L305.1 608.4L304.2 608.9L303.3 608.9L302.4 609.0L301.5 609.2L300.6 609.4L299.7 609.5L298.8 609.8L297.9 609.9L297.0 610.0L296.1 609.9L295.2 609.8L294.3 610.2L293.4 610.4L292.5 610.9L291.6 611.0L290.7 611.3L289.8 611.8L288.9 612.1L288.0 612.3L287.1 612.6L286.2 612.8L285.3 613.1L284.4 613.5L283.5 614.0L282.6 613.6L281.7 613.9L280.8 613.9L279.9 614.2L279.0 614.1L278.1 614.5L277.2 614.2L276.3 614.0L275.4 614.2L274.5 614.2L273.6 614.4L272.7 614.8L271.8 614.3L270.9 613.9L270.0 613.7L269.1 613.8L268.2 612.0L267.3 609.5L266.4 608.5L265.5 608.5L264.6 608.5L263.7 608.6L262.8 608.6L261.9 608.6L261.0 608.6L260.1 608.6L259.2 608.6L258.3 608.6L257.4 609.0L256.5 609.5L255.6 609.8L254.7 609.8L253.8 609.9L252.9 610.1L252.0 610.2L251.1 610.1L250.2 610.2L249.3 610.4L248.4 610.4L247.5 610.2L246.6 610.1L245.7 610.1L244.8 610.3L243.9 610.4L243.0 610.3L242.1 610.6L241.2 610.6L240.3 610.2L239.4 610.3L238.5 610.4L237.6 610.6L236.7 610.5L235.8 610.6L234.9 610.7L234.0 610.6L233.1 610.3L232.2 610.4L231.3 610.5L230.4 610.4L229.5 610.5L228.6 610.4L227.7 610.5L226.8 610.8L225.9 611.0L225.0 610.8L224.1 611.2L223.2 611.1L222.3 611.0L221.4 610.9L220.5 611.0L219.6 611.8L218.7 613.0L217.8 614.4L216.9 615.2L216.0 616.5L215.1 616.2L214.2 616.6L213.3 617.0L212.4 618.2L211.5 618.4L210.6 618.8L209.7 618.2L208.8 618.6L207.9 617.7L207.0 617.2L206.1 616.6L205.2 616.3L204.3 616.4L203.4 616.7L202.5 617.3L201.6 617.6L200.7 618.1L199.8 617.9L198.9 615.9L198.0 610.8L197.1 610.9L196.2 610.6L195.3 610.5L194.4 610.6L193.5 610.4L192.6 610.6L191.7 610.3L190.8 610.6L189.9 610.6L189.0 610.9L188.1 610.9L187.2 611.1L186.3 611.3L185.4 611.3L184.5 611.7L183.6 612.1L182.7 612.3L181.8 612.8L180.9 615.2L180.0 616.8L179.1 617.0L178.2 617.5L177.3 617.0L176.4 616.3L175.5 615.8L174.6 615.2L173.7 615.6L172.8 615.7L171.9 616.9L171.0 616.8L170.1 615.7L169.2 615.6L168.3 615.8L167.4 616.4L166.5 616.5L165.6 617.1L164.7 615.2L163.8 611.7L162.9 608.4L162.0 608.4L161.1 608.4L160.2 608.4L159.3 608.4L158.4 608.4L157.5 608.4L156.6 608.4L155.7 608.4L154.8 608.4L153.9 608.4L153.0 608.4L152.1 608.4L151.2 608.4L150.3 608.4L149.4 608.4L148.5 608.4L147.6 608.4L146.7 608.4L145.8 608.4L144.9 608.4L144.0 608.4L143.1 608.4L142.2 608.4L141.3 608.4L140.4 608.4L139.5 608.4L138.6 608.4L137.7 608.4L136.8 608.4L135.9 608.4L135.0 608.4L134.1 608.4L133.2 608.4L132.3 608.4L131.4 608.4L130.5 608.4L129.6 608.4L128.7 608.4L127.8 608.4L126.9 608.4L126.0 608.4L125.1 608.4L124.2 608.4L123.3 608.4L122.4 608.4L121.5 608.4L120.6 608.4L119.7 608.4L118.8 608.4L117.9 608.4L117.0 608.4L116.1 608.4L115.2 608.4L114.3 608.4L113.4 608.4L112.5 608.4L111.6 608.4L110.7 608.4L109.8 608.4L108.9 608.4L108.0 608.4L107.1 608.4L106.2 608.4L105.3 608.4L104.4 608.4L103.5 608.4L102.6 608.4L101.7 608.4L100.8 608.4L99.9 608.4L99.0 608.4L98.1 608.4L97.2 608.4L96.3 608.4L95.4 608.4L94.5 608.4L93.6 608.4L92.7 608.4L91.8 608.4L90.9 608.4L90.0 608.4L89.1 608.4L88.2 608.4L87.3 608.4L86.4 608.4L85.5 608.4L84.6 608.4L83.7 608.5L82.8 608.5L81.9 608.5L81.0 608.5L80.1 608.5L79.2 608.5L78.3 608.5L77.4 608.6L76.5 608.6L75.6 608.6L74.7 608.6L73.8 608.6L72.9 608.6L72.0 608.8L71.1 609.0L70.2 609.1L69.3 609.4L68.4 609.6L67.5 609.6L66.6 609.8L65.7 609.9L64.8 610.1L63.9 610.2L63.0 610.1L62.1 610.1L61.2 610.1L60.3 609.9L59.4 609.8L58.5 609.8L57.6 609.8L56.7 609.8L55.8 609.8L54.9 609.9L54.0 609.8L53.1 610.1L52.2 610.0L51.3 610.2L50.4 610.3L49.5 610.2L48.6 610.3L47.7 610.5L46.8 610.6L45.9 610.5L45.0 610.5L44.1 610.6L43.2 610.3L42.3 610.1L41.4 610.1L40.5 610.3L39.6 610.3L38.7 610.3L37.8 610.5L36.9 610.7L36.0 611.2L35.1 611.9L34.2 612.4L33.3 612.7L32.4 613.4L31.5 614.5L30.6 615.6L29.7 616.3L28.8 616.9L27.9 616.5L27.0 616.6L26.1 616.3L25.2 616.4L24.3 617.0L23.4 616.8L22.5 616.3L21.6 615.8L20.7 615.7L19.8 615.5L18.9 615.8L18.0 614.7L17.1 615.1L16.2 614.8L15.3 615.0L14.4 614.6L13.5 614.4L12.6 613.2L11.7 609.3L10.8 609.3L9.9 609.2L9.0 609.3L8.1 609.5L7.2 609.5L6.3 609.6L5.4 609.7L4.5 609.6L3.6 609.8L2.7 609.8L1.8 609.7L0.9 609.9L0.0 609.8Z" fill="#1e1d22"/>
<rect x="-2.00" y="631.40" width="678.30" height="67.80" fill="#5f473a" />
<rect x="-2.00" y="631.40" width="120.60" height="67.80" fill="#ffa374" />
<line x1="25.65" y1="653.90" x2="25.65" y2="699.20" stroke="rgba(0,0,0,0.13)" stroke-width="1" opacity="1.0"/>
<line x1="72.12" y1="653.90" x2="72.12" y2="699.20" stroke="rgba(0,0,0,0.13)" stroke-width="1" opacity="1.0"/>
<line x1="118.60" y1="653.90" x2="118.60" y2="699.20" stroke="rgba(0,0,0,0.13)" stroke-width="1" opacity="1.0"/>
<line x1="165.07" y1="653.90" x2="165.07" y2="699.20" stroke="rgba(0,0,0,0.13)" stroke-width="1" opacity="1.0"/>
<line x1="211.55" y1="653.90" x2="211.55" y2="699.20" stroke="rgba(0,0,0,0.13)" stroke-width="1" opacity="1.0"/>
<line x1="258.02" y1="653.90" x2="258.02" y2="699.20" stroke="rgba(0,0,0,0.13)" stroke-width="1" opacity="1.0"/>
<line x1="304.50" y1="653.90" x2="304.50" y2="699.20" stroke="rgba(0,0,0,0.13)" stroke-width="1" opacity="1.0"/>
<line x1="350.98" y1="653.90" x2="350.98" y2="699.20" stroke="rgba(0,0,0,0.13)" stroke-width="1" opacity="1.0"/>
<line x1="397.45" y1="653.90" x2="397.45" y2="699.20" stroke="rgba(0,0,0,0.13)" stroke-width="1" opacity="1.0"/>
<line x1="443.93" y1="653.90" x2="443.93" y2="699.20" stroke="rgba(0,0,0,0.13)" stroke-width="1" opacity="1.0"/>
<line x1="490.40" y1="653.90" x2="490.40" y2="699.20" stroke="rgba(0,0,0,0.13)" stroke-width="1" opacity="1.0"/>
<line x1="536.88" y1="653.90" x2="536.88" y2="699.20" stroke="rgba(0,0,0,0.13)" stroke-width="1" opacity="1.0"/>
<line x1="583.35" y1="653.90" x2="583.35" y2="699.20" stroke="rgba(0,0,0,0.13)" stroke-width="1" opacity="1.0"/>
<line x1="629.83" y1="653.90" x2="629.83" y2="699.20" stroke="rgba(0,0,0,0.13)" stroke-width="1" opacity="1.0"/>
<line x1="0.00" y1="653.90" x2="676.30" y2="653.90" stroke="rgba(20,10,5,0.6)" stroke-width="1" />
<path d="M0.0 664.3L1.0 664.4L2.0 664.5L3.0 664.6L4.0 664.6L5.0 664.7L6.0 664.8L7.0 664.9L8.0 664.9L9.0 664.9L10.0 665.0L11.0 664.8L12.0 663.8L13.0 661.4L14.0 661.1L15.0 661.3L16.0 661.4L17.0 661.1L18.0 660.9L19.0 660.3L20.0 660.4L21.0 659.9L22.0 659.6L23.0 658.8L24.0 657.9L25.0 658.3L26.0 658.7L27.0 659.9L28.0 660.1L29.0 660.2L30.0 660.4L31.0 660.9L32.0 661.6L33.0 662.0L34.0 662.7L35.0 663.2L36.0 663.8L37.0 664.1L38.0 664.1L39.0 664.1L40.0 664.1L41.0 664.2L42.0 664.2L43.0 664.2L44.0 664.1L45.0 664.2L46.0 664.2L47.0 664.3L48.0 664.4L49.0 664.5L50.0 664.2L51.0 664.1L52.0 664.1L53.0 664.1L54.0 664.1L55.0 664.2L56.0 664.4L57.0 664.3L58.0 664.5L59.0 664.6L60.0 664.6L61.0 664.6L62.0 664.7L63.0 664.6L64.0 664.7L65.0 664.6L66.0 664.4L67.0 664.5L68.0 664.7L69.0 664.7L70.0 664.9L71.0 665.1L72.0 665.2L73.0 665.2L74.0 665.2L75.0 665.2L76.0 665.2L77.0 665.2L78.0 665.2L79.0 665.2L80.0 665.2L81.0 665.2L82.0 665.2L83.0 665.2L84.0 665.2L85.0 665.2L86.0 665.2L87.0 665.2L88.0 665.2L89.0 665.2L90.0 665.2L91.0 665.2L92.0 665.2L93.0 665.2L94.0 665.2L95.0 665.2L96.0 665.2L97.0 665.2L98.0 665.2L99.0 665.2L100.0 665.2L101.0 665.2L102.0 665.2L103.0 665.2L104.0 665.2L105.0 665.2L106.0 665.2L107.0 665.2L108.0 665.2L109.0 665.2L110.0 665.2L111.0 665.2L112.0 665.2L113.0 665.2L114.0 665.2L115.0 665.2L116.0 665.2L117.0 665.2L118.0 665.2L119.0 665.2L120.0 665.2L121.0 665.2L122.0 665.2L123.0 665.2L124.0 665.2L125.0 665.2L126.0 665.2L127.0 665.2L128.0 665.2L129.0 665.2L130.0 665.2L131.0 665.2L132.0 665.2L133.0 665.2L134.0 665.2L135.0 665.2L136.0 665.2L137.0 665.2L138.0 665.2L139.0 665.2L140.0 665.2L141.0 665.2L142.0 665.2L143.0 665.2L144.0 665.2L145.0 665.2L146.0 665.2L147.0 665.2L148.0 665.2L149.0 665.2L150.0 665.2L151.0 665.2L152.0 665.2L153.0 665.2L154.0 665.2L155.0 665.2L156.0 665.2L157.0 665.2L158.0 665.2L159.0 665.2L160.0 665.2L161.0 665.2L162.0 665.2L163.0 665.2L164.0 661.8L165.0 659.2L166.0 659.6L167.0 660.5L168.0 660.6L169.0 660.6L170.0 660.6L171.0 660.6L172.0 660.5L173.0 660.2L174.0 660.3L175.0 660.1L176.0 659.5L177.0 659.6L178.0 660.0L179.0 659.9L180.0 659.4L181.0 661.2L182.0 662.3L183.0 662.7L184.0 663.2L185.0 663.5L186.0 663.6L187.0 663.5L188.0 663.6L189.0 663.6L190.0 663.8L191.0 663.9L192.0 664.0L193.0 664.2L194.0 664.2L195.0 664.3L196.0 664.3L197.0 664.2L198.0 663.9L199.0 660.0L200.0 659.2L201.0 659.5L202.0 659.8L203.0 659.9L204.0 660.4L205.0 659.9L206.0 660.0L207.0 659.8L208.0 659.2L209.0 658.7L210.0 658.4L211.0 658.5L212.0 658.3L213.0 659.5L214.0 660.0L215.0 660.4L216.0 660.3L217.0 660.4L218.0 661.2L219.0 662.4L220.0 663.5L221.0 663.9L222.0 663.9L223.0 664.0L224.0 664.0L225.0 664.1L226.0 664.0L227.0 664.0L228.0 664.1L229.0 664.3L230.0 664.1L231.0 664.1L232.0 664.3L233.0 664.1L234.0 664.2L235.0 664.0L236.0 664.1L237.0 663.9L238.0 663.9L239.0 664.1L240.0 664.1L241.0 664.2L242.0 664.3L243.0 664.2L244.0 664.3L245.0 664.3L246.0 664.3L247.0 664.3L248.0 664.3L249.0 664.3L250.0 664.4L251.0 664.4L252.0 664.4L253.0 664.3L254.0 664.4L255.0 664.6L256.0 664.7L257.0 664.8L258.0 664.9L259.0 664.8L260.0 664.8L261.0 664.9L262.0 664.9L263.0 664.9L264.0 665.0L265.0 665.0L266.0 665.0L267.0 665.1L268.0 665.1L269.0 665.1L270.0 665.2L271.0 665.2L272.0 665.2L273.0 665.2L274.0 665.2L275.0 665.2L276.0 665.2L277.0 665.2L278.0 665.2L279.0 665.2L280.0 665.2L281.0 665.2L282.0 665.2L283.0 665.2L284.0 665.2L285.0 665.2L286.0 665.2L287.0 665.2L288.0 665.2L289.0 665.2L290.0 665.2L291.0 665.2L292.0 665.2L293.0 665.2L294.0 665.2L295.0 665.2L296.0 665.2L297.0 665.2L298.0 665.2L299.0 665.2L300.0 665.2L301.0 665.2L302.0 665.2L303.0 665.2L304.0 665.2L305.0 665.2L306.0 665.2L307.0 665.2L308.0 665.2L309.0 665.2L310.0 665.2L311.0 665.2L312.0 665.2L313.0 665.2L314.0 665.2L315.0 665.2L316.0 665.2L317.0 665.2L318.0 665.2L319.0 665.2L320.0 665.2L321.0 665.2L322.0 665.2L323.0 665.2L324.0 665.2L325.0 665.2L326.0 665.2L327.0 665.2L328.0 665.2L329.0 665.2L330.0 665.2L331.0 665.2L332.0 665.2L333.0 665.2L334.0 665.2L335.0 665.2L336.0 665.2L337.0 665.2L338.0 665.2L339.0 665.2L340.0 665.2L341.0 665.2L342.0 665.2L343.0 665.2L344.0 665.2L345.0 665.2L346.0 665.2L347.0 665.2L348.0 665.1L349.0 662.4L350.0 661.9L351.0 661.8L352.0 661.1L353.0 661.4L354.0 661.2L355.0 661.1L356.0 660.7L357.0 660.7L358.0 660.8L359.0 660.8L360.0 660.8L361.0 660.0L362.0 660.0L363.0 659.8L364.0 660.2L365.0 660.5L366.0 660.6L367.0 660.7L368.0 661.7L369.0 662.5L370.0 663.1L371.0 663.5L372.0 663.5L373.0 663.8L374.0 663.9L375.0 664.1L376.0 664.3L377.0 664.2L378.0 664.2L379.0 664.3L380.0 664.3L381.0 664.2L382.0 664.1L383.0 663.4L384.0 661.9L385.0 661.0L386.0 660.7L387.0 660.9L388.0 659.9L389.0 659.4L390.0 659.4L391.0 659.7L392.0 659.8L393.0 659.7L394.0 659.1L395.0 658.8L396.0 659.0L397.0 658.3L398.0 658.4L399.0 659.2L400.0 659.8L401.0 660.0L402.0 660.6L403.0 661.5L404.0 662.7L405.0 663.2L406.0 663.1L407.0 663.4L408.0 663.2L409.0 663.3L410.0 663.4L411.0 663.4L412.0 663.5L413.0 663.5L414.0 663.4L415.0 663.5L416.0 663.5L417.0 663.6L418.0 663.5L419.0 663.5L420.0 663.7L421.0 663.8L422.0 663.6L423.0 663.5L424.0 663.5L425.0 663.6L426.0 663.5L427.0 663.5L428.0 663.8L429.0 663.8L430.0 663.8L431.0 664.1L432.0 664.0L433.0 663.9L434.0 663.9L435.0 663.9L436.0 664.0L437.0 664.2L438.0 664.4L439.0 664.5L440.0 664.5L441.0 664.6L442.0 664.6L443.0 664.8L444.0 664.7L445.0 664.8L446.0 664.9L447.0 664.9L448.0 664.9L449.0 665.0L450.0 665.0L451.0 665.1L452.0 665.1L453.0 665.2L454.0 665.2L455.0 665.2L456.0 665.2L457.0 665.2L458.0 665.2L459.0 665.2L460.0 665.2L461.0 665.2L462.0 665.2L463.0 665.2L464.0 665.2L465.0 665.2L466.0 665.2L467.0 665.2L468.0 665.2L469.0 665.2L470.0 665.2L471.0 665.2L472.0 665.2L473.0 665.2L474.0 665.2L475.0 665.2L476.0 665.2L477.0 665.2L478.0 665.2L479.0 665.2L480.0 665.2L481.0 665.2L482.0 665.2L483.0 665.2L484.0 665.2L485.0 665.2L486.0 665.2L487.0 665.2L488.0 665.2L489.0 665.2L490.0 665.2L491.0 665.2L492.0 665.2L493.0 665.2L494.0 665.2L495.0 665.2L496.0 665.2L497.0 665.2L498.0 665.2L499.0 665.2L500.0 665.2L501.0 665.2L502.0 665.2L503.0 665.2L504.0 665.2L505.0 665.2L506.0 665.2L507.0 665.2L508.0 665.2L509.0 665.2L510.0 665.2L511.0 665.2L512.0 665.2L513.0 665.2L514.0 665.2L515.0 665.2L516.0 665.2L517.0 665.2L518.0 665.2L519.0 665.2L520.0 665.2L521.0 665.2L522.0 665.2L523.0 665.2L524.0 665.2L525.0 665.2L526.0 665.2L527.0 665.2L528.0 665.2L529.0 665.2L530.0 665.2L531.0 665.2L532.0 665.2L533.0 665.2L534.0 665.2L535.0 662.5L536.0 662.4L537.0 662.2L538.0 662.1L539.0 662.0L540.0 661.6L541.0 661.6L542.0 661.2L543.0 661.0L544.0 660.8L545.0 661.2L546.0 660.8L547.0 660.9L548.0 661.0L549.0 661.3L550.0 661.1L551.0 661.2L552.0 661.3L553.0 661.9L554.0 662.4L555.0 662.8L556.0 663.1L557.0 663.4L558.0 664.0L559.0 664.2L560.0 664.4L561.0 664.5L562.0 664.6L563.0 664.6L564.0 664.7L565.0 664.7L566.0 664.8L567.0 664.9L568.0 664.8L569.0 664.5L570.0 664.1L571.0 662.1L572.0 662.2L573.0 661.5L574.0 661.2L575.0 661.4L576.0 661.8L577.0 661.6L578.0 661.4L579.0 661.2L580.0 661.4L581.0 661.0L582.0 660.8L583.0 660.7L584.0 660.9L585.0 660.8L586.0 661.1L587.0 661.6L588.0 661.5L589.0 661.9L590.0 662.2L591.0 663.4L592.0 664.2L593.0 664.4L594.0 664.4L595.0 664.5L596.0 664.6L597.0 664.4L598.0 664.3L599.0 664.5L600.0 664.7L601.0 664.8L602.0 664.8L603.0 664.8L604.0 664.8L605.0 664.7L606.0 664.8L607.0 664.9L608.0 665.0L609.0 665.0L610.0 664.8L611.0 664.8L612.0 664.9L613.0 664.9L614.0 664.9L615.0 664.8L616.0 664.8L617.0 664.8L618.0 664.9L619.0 664.9L620.0 664.8L621.0 664.8L622.0 664.8L623.0 664.8L624.0 664.7L625.0 664.8L626.0 664.7L627.0 664.6L628.0 664.6L629.0 664.5L630.0 664.6L631.0 664.6L632.0 664.6L633.0 664.5L634.0 664.6L635.0 664.6L636.0 664.6L637.0 664.8L638.0 664.8L639.0 664.8L640.0 664.7L641.0 664.8L642.0 664.8L643.0 664.8L644.0 664.8L645.0 664.9L646.0 664.9L647.0 664.9L648.0 665.0L649.0 665.0L650.0 665.1L651.0 665.1L652.0 665.1L653.0 665.2L654.0 665.2L655.0 665.1L656.0 665.0L657.0 664.7L658.0 665.0L659.0 665.1L660.0 665.2L661.0 665.2L662.0 665.2L663.0 665.2L664.0 665.2L665.0 665.2L666.0 665.2L667.0 665.2L668.0 665.2L669.0 665.2L670.0 665.2L671.0 665.2L672.0 665.2L673.0 665.2L674.0 665.2L675.0 665.2L676.0 665.2L676.0 666.8L675.0 666.8L674.0 666.8L673.0 666.8L672.0 666.8L671.0 666.8L670.0 666.8L669.0 666.8L668.0 666.8L667.0 666.8L666.0 666.8L665.0 666.8L664.0 666.8L663.0 666.8L662.0 666.8L661.0 666.8L660.0 666.8L659.0 666.9L658.0 667.2L657.0 667.3L656.0 667.0L655.0 666.9L654.0 666.8L653.0 666.8L652.0 666.9L651.0 666.9L650.0 666.9L649.0 667.0L648.0 667.0L647.0 667.1L646.0 667.1L645.0 667.1L644.0 667.2L643.0 667.2L642.0 667.2L641.0 667.2L640.0 667.3L639.0 667.3L638.0 667.3L637.0 667.3L636.0 667.4L635.0 667.4L634.0 667.5L633.0 667.5L632.0 667.5L631.0 667.4L630.0 667.6L629.0 667.5L628.0 667.5L627.0 667.4L626.0 667.4L625.0 667.5L624.0 667.4L623.0 667.5L622.0 667.4L621.0 667.2L620.0 667.1L619.0 667.2L618.0 667.3L617.0 667.2L616.0 667.2L615.0 667.2L614.0 667.1L613.0 667.1L612.0 667.1L611.0 667.2L610.0 667.2L609.0 667.0L608.0 667.1L607.0 667.2L606.0 667.2L605.0 667.1L604.0 667.2L603.0 667.3L602.0 667.3L601.0 667.4L600.0 667.4L599.0 667.5L598.0 667.5L597.0 667.5L596.0 667.4L595.0 667.5L594.0 667.7L593.0 667.8L592.0 668.2L591.0 668.8L590.0 670.0L589.0 670.3L588.0 670.0L587.0 670.4L586.0 670.4L585.0 670.5L584.0 670.8L583.0 671.1L582.0 670.7L581.0 670.7L580.0 670.7L579.0 670.6L578.0 670.6L577.0 670.6L576.0 670.3L575.0 670.4L574.0 670.1L573.0 670.1L572.0 669.8L571.0 669.9L570.0 667.9L569.0 667.6L568.0 667.2L567.0 667.3L566.0 667.3L565.0 667.3L564.0 667.4L563.0 667.4L562.0 667.4L561.0 667.4L560.0 667.7L559.0 667.8L558.0 667.9L557.0 668.3L556.0 669.1L555.0 669.8L554.0 670.5L553.0 670.2L552.0 670.2L551.0 670.0L550.0 670.2L549.0 670.6L548.0 671.0L547.0 671.2L546.0 670.9L545.0 670.7L544.0 670.5L543.0 670.2L542.0 670.3L541.0 670.5L540.0 670.1L539.0 670.0L538.0 669.8L537.0 670.2L536.0 669.7L535.0 669.3L534.0 666.8L533.0 666.8L532.0 666.8L531.0 666.8L530.0 666.8L529.0 666.8L528.0 666.8L527.0 666.8L526.0 666.8L525.0 666.8L524.0 666.8L523.0 666.8L522.0 666.8L521.0 666.8L520.0 666.8L519.0 666.8L518.0 666.8L517.0 666.8L516.0 666.8L515.0 666.8L514.0 666.8L513.0 666.8L512.0 666.8L511.0 666.8L510.0 666.8L509.0 666.8L508.0 666.8L507.0 666.8L506.0 666.8L505.0 666.8L504.0 666.8L503.0 666.8L502.0 666.8L501.0 666.8L500.0 666.8L499.0 666.8L498.0 666.8L497.0 666.8L496.0 666.8L495.0 666.8L494.0 666.8L493.0 666.8L492.0 666.8L491.0 666.8L490.0 666.8L489.0 666.8L488.0 666.8L487.0 666.8L486.0 666.8L485.0 666.8L484.0 666.8L483.0 666.8L482.0 666.8L481.0 666.8L480.0 666.8L479.0 666.8L478.0 666.8L477.0 666.8L476.0 666.8L475.0 666.8L474.0 666.8L473.0 666.8L472.0 666.8L471.0 666.8L470.0 666.8L469.0 666.8L468.0 666.8L467.0 666.8L466.0 666.8L465.0 666.8L464.0 666.8L463.0 666.8L462.0 666.8L461.0 666.8L460.0 666.8L459.0 666.8L458.0 666.8L457.0 666.8L456.0 666.8L455.0 666.8L454.0 666.8L453.0 666.8L452.0 666.9L451.0 666.9L450.0 667.0L449.0 667.0L448.0 667.1L447.0 667.1L446.0 667.0L445.0 667.1L444.0 667.2L443.0 667.4L442.0 667.5L441.0 667.7L440.0 667.8L439.0 667.8L438.0 668.0L437.0 668.1L436.0 668.1L435.0 668.1L434.0 667.9L433.0 667.8L432.0 668.1L431.0 668.3L430.0 668.1L429.0 668.2L428.0 668.1L427.0 668.3L426.0 668.4L425.0 668.3L424.0 668.4L423.0 668.1L422.0 668.1L421.0 668.0L420.0 668.2L419.0 668.1L418.0 668.2L417.0 668.1L416.0 668.2L415.0 668.2L414.0 668.6L413.0 668.6L412.0 668.4L411.0 668.5L410.0 668.5L409.0 668.5L408.0 668.6L407.0 668.8L406.0 669.0L405.0 669.1L404.0 669.4L403.0 669.9L402.0 670.9L401.0 672.8L400.0 672.9L399.0 673.1L398.0 673.2L397.0 674.2L396.0 674.0L395.0 672.9L394.0 672.2L393.0 672.5L392.0 672.8L391.0 672.7L390.0 673.0L389.0 672.3L388.0 672.2L387.0 671.7L386.0 671.3L385.0 671.0L384.0 669.8L383.0 668.2L382.0 667.5L381.0 667.7L380.0 667.8L379.0 667.9L378.0 667.8L377.0 667.7L376.0 667.8L375.0 668.0L374.0 668.2L373.0 668.3L372.0 668.4L371.0 668.3L370.0 669.0L369.0 669.6L368.0 670.1L367.0 670.8L366.0 670.7L365.0 671.0L364.0 671.0L363.0 671.0L362.0 670.9L361.0 670.9L360.0 671.1L359.0 671.0L358.0 670.9L357.0 671.3L356.0 671.2L355.0 671.2L354.0 670.7L353.0 671.0L352.0 671.1L351.0 670.7L350.0 669.8L349.0 669.9L348.0 666.9L347.0 666.8L346.0 666.8L345.0 666.8L344.0 666.8L343.0 666.8L342.0 666.8L341.0 666.8L340.0 666.8L339.0 666.8L338.0 666.8L337.0 666.8L336.0 666.8L335.0 666.8L334.0 666.8L333.0 666.8L332.0 666.8L331.0 666.8L330.0 666.8L329.0 666.8L328.0 666.8L327.0 666.8L326.0 666.8L325.0 666.8L324.0 666.8L323.0 666.8L322.0 666.8L321.0 666.8L320.0 666.8L319.0 666.8L318.0 666.8L317.0 666.8L316.0 666.8L315.0 666.8L314.0 666.8L313.0 666.8L312.0 666.8L311.0 666.8L310.0 666.8L309.0 666.8L308.0 666.8L307.0 666.8L306.0 666.8L305.0 666.8L304.0 666.8L303.0 666.8L302.0 666.8L301.0 666.8L300.0 666.8L299.0 666.8L298.0 666.8L297.0 666.8L296.0 666.8L295.0 666.8L294.0 666.8L293.0 666.8L292.0 666.8L291.0 666.8L290.0 666.8L289.0 666.8L288.0 666.8L287.0 666.8L286.0 666.8L285.0 666.8L284.0 666.8L283.0 666.8L282.0 666.8L281.0 666.8L280.0 666.8L279.0 666.8L278.0 666.8L277.0 666.8L276.0 666.8L275.0 666.8L274.0 666.8L273.0 666.8L272.0 666.8L271.0 666.8L270.0 666.8L269.0 666.9L268.0 666.9L267.0 666.9L266.0 667.0L265.0 667.0L264.0 667.0L263.0 667.1L262.0 667.1L261.0 667.1L260.0 667.2L259.0 667.2L258.0 667.1L257.0 667.2L256.0 667.2L255.0 667.3L254.0 667.4L253.0 667.6L252.0 667.6L251.0 667.5L250.0 667.7L249.0 667.7L248.0 667.7L247.0 667.7L246.0 667.7L245.0 667.7L244.0 667.9L243.0 667.9L242.0 667.9L241.0 668.0L240.0 667.8L239.0 668.0L238.0 668.0L237.0 668.0L236.0 667.9L235.0 667.8L234.0 667.8L233.0 667.8L232.0 667.8L231.0 667.9L230.0 668.0L229.0 667.9L228.0 667.9L227.0 668.0L226.0 668.0L225.0 668.1L224.0 668.0L223.0 668.0L222.0 668.0L221.0 668.1L220.0 668.8L219.0 669.3L218.0 670.1L217.0 671.1L216.0 671.7L215.0 672.4L214.0 672.6L213.0 674.1L212.0 674.8L211.0 674.8L210.0 673.6L209.0 672.7L208.0 672.8L207.0 672.3L206.0 672.2L205.0 671.6L204.0 671.4L203.0 671.8L202.0 672.6L201.0 672.7L200.0 672.4L199.0 671.5L198.0 668.3L197.0 668.0L196.0 667.8L195.0 667.7L194.0 667.6L193.0 667.8L192.0 668.0L191.0 668.0L190.0 668.1L189.0 668.2L188.0 668.4L187.0 668.5L186.0 668.4L185.0 668.5L184.0 669.0L183.0 669.2L182.0 669.7L181.0 670.7L180.0 671.8L179.0 671.6L178.0 672.3L177.0 671.9L176.0 672.2L175.0 671.8L174.0 672.0L173.0 671.7L172.0 671.8L171.0 671.9L170.0 672.4L169.0 671.9L168.0 671.8L167.0 672.0L166.0 672.3L165.0 672.3L164.0 670.1L163.0 666.8L162.0 666.8L161.0 666.8L160.0 666.8L159.0 666.8L158.0 666.8L157.0 666.8L156.0 666.8L155.0 666.8L154.0 666.8L153.0 666.8L152.0 666.8L151.0 666.8L150.0 666.8L149.0 666.8L148.0 666.8L147.0 666.8L146.0 666.8L145.0 666.8L144.0 666.8L143.0 666.8L142.0 666.8L141.0 666.8L140.0 666.8L139.0 666.8L138.0 666.8L137.0 666.8L136.0 666.8L135.0 666.8L134.0 666.8L133.0 666.8L132.0 666.8L131.0 666.8L130.0 666.8L129.0 666.8L128.0 666.8L127.0 666.8L126.0 666.8L125.0 666.8L124.0 666.8L123.0 666.8L122.0 666.8L121.0 666.8L120.0 666.8L119.0 666.8L118.0 666.8L117.0 666.8L116.0 666.8L115.0 666.8L114.0 666.8L113.0 666.8L112.0 666.8L111.0 666.8L110.0 666.8L109.0 666.8L108.0 666.8L107.0 666.8L106.0 666.8L105.0 666.8L104.0 666.8L103.0 666.8L102.0 666.8L101.0 666.8L100.0 666.8L99.0 666.8L98.0 666.8L97.0 666.8L96.0 666.8L95.0 666.8L94.0 666.8L93.0 666.8L92.0 666.8L91.0 666.8L90.0 666.8L89.0 666.8L88.0 666.8L87.0 666.8L86.0 666.8L85.0 666.8L84.0 666.8L83.0 666.8L82.0 666.8L81.0 666.8L80.0 666.8L79.0 666.8L78.0 666.8L77.0 666.8L76.0 666.8L75.0 666.8L74.0 666.8L73.0 666.8L72.0 666.8L71.0 666.9L70.0 667.1L69.0 667.3L68.0 667.4L67.0 667.3L66.0 667.3L65.0 667.4L64.0 667.4L63.0 667.5L62.0 667.6L61.0 667.6L60.0 667.6L59.0 667.5L58.0 667.6L57.0 667.5L56.0 667.4L55.0 667.5L54.0 667.6L53.0 667.7L52.0 667.8L51.0 667.7L50.0 667.7L49.0 667.7L48.0 667.6L47.0 667.7L46.0 667.8L45.0 667.9L44.0 667.9L43.0 667.8L42.0 667.9L41.0 667.8L40.0 668.0L39.0 667.9L38.0 667.8L37.0 667.8L36.0 668.4L35.0 669.0L34.0 669.3L33.0 669.2L32.0 669.9L31.0 671.0L30.0 671.5L29.0 672.6L28.0 672.0L27.0 671.7L26.0 672.1L25.0 673.4L24.0 674.1L23.0 673.2L22.0 672.2L21.0 672.0L20.0 671.7L19.0 671.2L18.0 670.9L17.0 671.0L16.0 671.0L15.0 670.7L14.0 670.5L13.0 670.2L12.0 668.3L11.0 667.2L10.0 667.0L9.0 667.1L8.0 667.1L7.0 667.2L6.0 667.3L5.0 667.4L4.0 667.4L3.0 667.4L2.0 667.4L1.0 667.4L0.0 667.4Z" fill="#1e1d22"/>
<path d="M0.0 687.2L1.0 687.2L2.0 687.4L3.0 687.5L4.0 687.4L5.0 687.5L6.0 687.5L7.0 687.6L8.0 687.7L9.0 687.8L10.0 687.8L11.0 687.7L12.0 686.8L13.0 684.9L14.0 684.4L15.0 684.4L16.0 684.5L17.0 684.5L18.0 684.4L19.0 684.3L20.0 684.4L21.0 683.7L22.0 683.2L23.0 682.6L24.0 682.3L25.0 682.9L26.0 683.8L27.0 684.1L28.0 684.0L29.0 683.6L30.0 684.1L31.0 684.2L32.0 685.1L33.0 685.5L34.0 686.0L35.0 686.5L36.0 686.8L37.0 687.2L38.0 687.0L39.0 687.0L40.0 687.0L41.0 687.0L42.0 687.2L43.0 687.2L44.0 687.2L45.0 687.1L46.0 687.2L47.0 687.2L48.0 687.2L49.0 687.2L50.0 687.2L51.0 687.3L52.0 687.3L53.0 687.4L54.0 687.3L55.0 687.3L56.0 687.4L57.0 687.5L58.0 687.5L59.0 687.5L60.0 687.5L61.0 687.4L62.0 687.4L63.0 687.4L64.0 687.3L65.0 687.4L66.0 687.5L67.0 687.5L68.0 687.5L69.0 687.5L70.0 687.7L71.0 687.8L72.0 687.8L73.0 687.8L74.0 687.8L75.0 687.8L76.0 687.8L77.0 687.8L78.0 687.8L79.0 687.8L80.0 687.8L81.0 687.8L82.0 687.8L83.0 687.8L84.0 687.8L85.0 687.8L86.0 687.8L87.0 687.8L88.0 687.8L89.0 687.8L90.0 687.8L91.0 687.8L92.0 687.8L93.0 687.8L94.0 687.8L95.0 687.8L96.0 687.8L97.0 687.8L98.0 687.8L99.0 687.8L100.0 687.8L101.0 687.8L102.0 687.8L103.0 687.8L104.0 687.8L105.0 687.8L106.0 687.8L107.0 687.8L108.0 687.8L109.0 687.8L110.0 687.8L111.0 687.8L112.0 687.8L113.0 687.8L114.0 687.8L115.0 687.8L116.0 687.8L117.0 687.8L118.0 687.8L119.0 687.8L120.0 687.8L121.0 687.8L122.0 687.8L123.0 687.8L124.0 687.8L125.0 687.8L126.0 687.8L127.0 687.8L128.0 687.8L129.0 687.8L130.0 687.8L131.0 687.8L132.0 687.8L133.0 687.8L134.0 687.8L135.0 687.8L136.0 687.8L137.0 687.8L138.0 687.8L139.0 687.8L140.0 687.8L141.0 687.8L142.0 687.8L143.0 687.8L144.0 687.8L145.0 687.8L146.0 687.8L147.0 687.8L148.0 687.8L149.0 687.8L150.0 687.8L151.0 687.8L152.0 687.8L153.0 687.8L154.0 687.8L155.0 687.8L156.0 687.8L157.0 687.8L158.0 687.8L159.0 687.8L160.0 687.8L161.0 687.8L162.0 687.8L163.0 687.8L164.0 685.4L165.0 683.8L166.0 683.9L167.0 684.2L168.0 684.5L169.0 684.4L170.0 684.3L171.0 683.7L172.0 683.9L173.0 684.4L174.0 684.6L175.0 684.2L176.0 683.9L177.0 683.9L178.0 683.8L179.0 684.0L180.0 683.9L181.0 684.9L182.0 685.9L183.0 686.3L184.0 686.5L185.0 686.9L186.0 687.0L187.0 686.9L188.0 687.1L189.0 686.9L190.0 687.1L191.0 687.0L192.0 687.0L193.0 687.2L194.0 687.3L195.0 687.3L196.0 687.2L197.0 687.0L198.0 686.9L199.0 683.6L200.0 682.9L201.0 683.5L202.0 684.1L203.0 684.1L204.0 683.8L205.0 684.0L206.0 683.9L207.0 684.0L208.0 683.4L209.0 683.5L210.0 683.3L211.0 682.3L212.0 682.4L213.0 683.1L214.0 683.9L215.0 684.0L216.0 684.6L217.0 684.8L218.0 685.5L219.0 686.0L220.0 686.6L221.0 686.7L222.0 686.9L223.0 686.8L224.0 686.8L225.0 686.8L226.0 686.8L227.0 686.8L228.0 686.9L229.0 687.1L230.0 687.2L231.0 687.2L232.0 687.1L233.0 687.1L234.0 687.1L235.0 687.0L236.0 687.0L237.0 687.1L238.0 687.1L239.0 687.1L240.0 687.1L241.0 687.0L242.0 687.0L243.0 687.1L244.0 687.2L245.0 687.2L246.0 687.3L247.0 687.3L248.0 687.3L249.0 687.3L250.0 687.4L251.0 687.3L252.0 687.4L253.0 687.5L254.0 687.5L255.0 687.4L256.0 687.5L257.0 687.5L258.0 687.6L259.0 687.6L260.0 687.6L261.0 687.7L262.0 687.7L263.0 687.7L264.0 687.8L265.0 687.8L266.0 687.8L267.0 687.8L268.0 687.8L269.0 687.8L270.0 687.8L271.0 687.8L272.0 687.8L273.0 687.8L274.0 687.8L275.0 687.8L276.0 687.8L277.0 687.8L278.0 687.8L279.0 687.8L280.0 687.8L281.0 687.8L282.0 687.8L283.0 687.8L284.0 687.8L285.0 687.8L286.0 687.8L287.0 687.8L288.0 687.8L289.0 687.8L290.0 687.8L291.0 687.8L292.0 687.8L293.0 687.8L294.0 687.8L295.0 687.8L296.0 687.8L297.0 687.8L298.0 687.8L299.0 687.8L300.0 687.8L301.0 687.8L302.0 687.8L303.0 687.8L304.0 687.8L305.0 687.8L306.0 687.8L307.0 687.8L308.0 687.8L309.0 687.8L310.0 687.8L311.0 687.8L312.0 687.8L313.0 687.8L314.0 687.8L315.0 687.8L316.0 687.8L317.0 687.8L318.0 687.8L319.0 687.8L320.0 687.8L321.0 687.8L322.0 687.8L323.0 687.8L324.0 687.8L325.0 687.8L326.0 687.8L327.0 687.8L328.0 687.8L329.0 687.8L330.0 687.8L331.0 687.8L332.0 687.8L333.0 687.8L334.0 687.8L335.0 687.8L336.0 687.8L337.0 687.8L338.0 687.8L339.0 687.8L340.0 687.8L341.0 687.8L342.0 687.8L343.0 687.8L344.0 687.8L345.0 687.8L346.0 687.8L347.0 687.8L348.0 687.8L349.0 685.6L350.0 685.3L351.0 684.6L352.0 684.1L353.0 684.4L354.0 684.6L355.0 684.8L356.0 684.8L357.0 684.9L358.0 684.9L359.0 684.7L360.0 684.6L361.0 684.3L362.0 684.3L363.0 684.7L364.0 684.2L365.0 684.3L366.0 684.4L367.0 685.1L368.0 685.4L369.0 685.8L370.0 686.4L371.0 686.8L372.0 686.8L373.0 687.0L374.0 687.0L375.0 686.9L376.0 687.0L377.0 687.0L378.0 687.2L379.0 687.2L380.0 687.1L381.0 687.2L382.0 687.2L383.0 686.8L384.0 685.9L385.0 684.8L386.0 684.6L387.0 684.5L388.0 683.8L389.0 683.8L390.0 683.8L391.0 683.8L392.0 683.7L393.0 683.4L394.0 683.2L395.0 683.1L396.0 682.7L397.0 682.1L398.0 682.7L399.0 683.3L400.0 682.9L401.0 683.2L402.0 684.4L403.0 685.4L404.0 685.8L405.0 686.3L406.0 686.1L407.0 686.2L408.0 686.4L409.0 686.6L410.0 686.6L411.0 686.5L412.0 686.6L413.0 686.7L414.0 686.8L415.0 686.7L416.0 686.8L417.0 686.8L418.0 686.7L419.0 686.8L420.0 686.9L421.0 686.8L422.0 686.8L423.0 686.6L424.0 686.7L425.0 686.6L426.0 686.8L427.0 686.9L428.0 686.9L429.0 686.9L430.0 686.8L431.0 686.9L432.0 686.9L433.0 686.9L434.0 686.9L435.0 687.0L436.0 687.0L437.0 687.0L438.0 687.1L439.0 687.2L440.0 687.3L441.0 687.4L442.0 687.4L443.0 687.5L444.0 687.5L445.0 687.6L446.0 687.6L447.0 687.7L448.0 687.7L449.0 687.8L450.0 687.8L451.0 687.8L452.0 687.8L453.0 687.8L454.0 687.8L455.0 687.8L456.0 687.8L457.0 687.8L458.0 687.8L459.0 687.8L460.0 687.8L461.0 687.8L462.0 687.8L463.0 687.8L464.0 687.8L465.0 687.8L466.0 687.8L467.0 687.8L468.0 687.8L469.0 687.8L470.0 687.8L471.0 687.8L472.0 687.8L473.0 687.8L474.0 687.8L475.0 687.8L476.0 687.8L477.0 687.8L478.0 687.8L479.0 687.8L480.0 687.8L481.0 687.8L482.0 687.8L483.0 687.8L484.0 687.8L485.0 687.8L486.0 687.8L487.0 687.8L488.0 687.8L489.0 687.8L490.0 687.8L491.0 687.8L492.0 687.8L493.0 687.8L494.0 687.8L495.0 687.8L496.0 687.8L497.0 687.8L498.0 687.8L499.0 687.8L500.0 687.8L501.0 687.8L502.0 687.8L503.0 687.8L504.0 687.8L505.0 687.8L506.0 687.8L507.0 687.8L508.0 687.8L509.0 687.8L510.0 687.8L511.0 687.8L512.0 687.8L513.0 687.8L514.0 687.8L515.0 687.8L516.0 687.8L517.0 687.8L518.0 687.8L519.0 687.8L520.0 687.8L521.0 687.8L522.0 687.8L523.0 687.8L524.0 687.8L525.0 687.8L526.0 687.8L527.0 687.8L528.0 687.8L529.0 687.8L530.0 687.8L531.0 687.8L532.0 687.8L533.0 687.8L534.0 687.8L535.0 685.7L536.0 685.6L537.0 685.4L538.0 685.3L539.0 685.6L540.0 685.2L541.0 685.0L542.0 685.0L543.0 685.2L544.0 685.2L545.0 685.1L546.0 685.0L547.0 685.0L548.0 685.0L549.0 685.2L550.0 685.2L551.0 685.3L552.0 685.1L553.0 685.0L554.0 685.1L555.0 685.6L556.0 686.2L557.0 686.8L558.0 687.1L559.0 687.4L560.0 687.4L561.0 687.5L562.0 687.5L563.0 687.4L564.0 687.4L565.0 687.5L566.0 687.5L567.0 687.5L568.0 687.5L569.0 687.3L570.0 687.0L571.0 685.4L572.0 685.6L573.0 685.2L574.0 685.3L575.0 685.0L576.0 684.9L577.0 684.9L578.0 684.9L579.0 685.1L580.0 684.8L581.0 685.1L582.0 685.0L583.0 685.0L584.0 684.7L585.0 684.6L586.0 684.9L587.0 685.0L588.0 685.0L589.0 685.2L590.0 685.2L591.0 686.3L592.0 686.9L593.0 687.2L594.0 687.3L595.0 687.4L596.0 687.4L597.0 687.5L598.0 687.4L599.0 687.5L600.0 687.6L601.0 687.4L602.0 687.5L603.0 687.5L604.0 687.5L605.0 687.5L606.0 687.6L607.0 687.6L608.0 687.6L609.0 687.6L610.0 687.7L611.0 687.7L612.0 687.7L613.0 687.7L614.0 687.7L615.0 687.7L616.0 687.6L617.0 687.6L618.0 687.6L619.0 687.6L620.0 687.5L621.0 687.5L622.0 687.5L623.0 687.5L624.0 687.5L625.0 687.4L626.0 687.4L627.0 687.6L628.0 687.5L629.0 687.4L630.0 687.3L631.0 687.4L632.0 687.4L633.0 687.4L634.0 687.4L635.0 687.5L636.0 687.5L637.0 687.5L638.0 687.5L639.0 687.5L640.0 687.6L641.0 687.6L642.0 687.6L643.0 687.6L644.0 687.7L645.0 687.7L646.0 687.7L647.0 687.8L648.0 687.8L649.0 687.8L650.0 687.8L651.0 687.8L652.0 687.8L653.0 687.8L654.0 687.8L655.0 687.8L656.0 687.8L657.0 687.5L658.0 687.6L659.0 687.8L660.0 687.8L661.0 687.8L662.0 687.8L663.0 687.8L664.0 687.8L665.0 687.8L666.0 687.8L667.0 687.8L668.0 687.8L669.0 687.8L670.0 687.8L671.0 687.8L672.0 687.8L673.0 687.8L674.0 687.8L675.0 687.8L676.0 687.8L676.0 689.4L675.0 689.4L674.0 689.4L673.0 689.4L672.0 689.4L671.0 689.4L670.0 689.4L669.0 689.4L668.0 689.4L667.0 689.4L666.0 689.4L665.0 689.4L664.0 689.4L663.0 689.4L662.0 689.4L661.0 689.4L660.0 689.4L659.0 689.4L658.0 689.6L657.0 689.7L656.0 689.4L655.0 689.4L654.0 689.4L653.0 689.4L652.0 689.4L651.0 689.4L650.0 689.4L649.0 689.4L648.0 689.4L647.0 689.4L646.0 689.5L645.0 689.5L644.0 689.5L643.0 689.6L642.0 689.6L641.0 689.6L640.0 689.6L639.0 689.7L638.0 689.7L637.0 689.7L636.0 689.7L635.0 689.7L634.0 689.8L633.0 689.8L632.0 689.7L631.0 689.7L630.0 689.8L629.0 689.7L628.0 689.7L627.0 689.7L626.0 689.8L625.0 689.8L624.0 689.7L623.0 689.7L622.0 689.7L621.0 689.7L620.0 689.7L619.0 689.6L618.0 689.6L617.0 689.6L616.0 689.6L615.0 689.5L614.0 689.5L613.0 689.5L612.0 689.5L611.0 689.5L610.0 689.5L609.0 689.6L608.0 689.6L607.0 689.6L606.0 689.6L605.0 689.7L604.0 689.7L603.0 689.7L602.0 689.7L601.0 689.8L600.0 689.7L599.0 689.7L598.0 689.9L597.0 690.0L596.0 689.9L595.0 689.8L594.0 689.7L593.0 690.0L592.0 690.4L591.0 691.1L590.0 691.9L589.0 692.6L588.0 692.6L587.0 692.7L586.0 692.5L585.0 692.6L584.0 692.7L583.0 692.4L582.0 692.5L581.0 692.4L580.0 692.7L579.0 692.4L578.0 692.7L577.0 692.4L576.0 692.4L575.0 692.4L574.0 692.5L573.0 692.3L572.0 691.9L571.0 691.7L570.0 690.2L569.0 689.9L568.0 689.7L567.0 689.7L566.0 689.7L565.0 689.7L564.0 689.8L563.0 689.7L562.0 689.8L561.0 689.8L560.0 689.8L559.0 689.9L558.0 690.0L557.0 690.4L556.0 690.9L555.0 691.5L554.0 692.0L553.0 692.0L552.0 691.9L551.0 692.2L550.0 692.6L549.0 692.5L548.0 692.3L547.0 692.2L546.0 692.2L545.0 692.2L544.0 692.4L543.0 692.9L542.0 692.4L541.0 692.6L540.0 692.1L539.0 691.6L538.0 691.6L537.0 691.6L536.0 691.4L535.0 691.0L534.0 689.4L533.0 689.4L532.0 689.4L531.0 689.4L530.0 689.4L529.0 689.4L528.0 689.4L527.0 689.4L526.0 689.4L525.0 689.4L524.0 689.4L523.0 689.4L522.0 689.4L521.0 689.4L520.0 689.4L519.0 689.4L518.0 689.4L517.0 689.4L516.0 689.4L515.0 689.4L514.0 689.4L513.0 689.4L512.0 689.4L511.0 689.4L510.0 689.4L509.0 689.4L508.0 689.4L507.0 689.4L506.0 689.4L505.0 689.4L504.0 689.4L503.0 689.4L502.0 689.4L501.0 689.4L500.0 689.4L499.0 689.4L498.0 689.4L497.0 689.4L496.0 689.4L495.0 689.4L494.0 689.4L493.0 689.4L492.0 689.4L491.0 689.4L490.0 689.4L489.0 689.4L488.0 689.4L487.0 689.4L486.0 689.4L485.0 689.4L484.0 689.4L483.0 689.4L482.0 689.4L481.0 689.4L480.0 689.4L479.0 689.4L478.0 689.4L477.0 689.4L476.0 689.4L475.0 689.4L474.0 689.4L473.0 689.4L472.0 689.4L471.0 689.4L470.0 689.4L469.0 689.4L468.0 689.4L467.0 689.4L466.0 689.4L465.0 689.4L464.0 689.4L463.0 689.4L462.0 689.4L461.0 689.4L460.0 689.4L459.0 689.4L458.0 689.4L457.0 689.4L456.0 689.4L455.0 689.4L454.0 689.4L453.0 689.4L452.0 689.4L451.0 689.4L450.0 689.4L449.0 689.4L448.0 689.5L447.0 689.5L446.0 689.6L445.0 689.6L444.0 689.7L443.0 689.7L442.0 689.8L441.0 689.8L440.0 690.0L439.0 689.9L438.0 689.9L437.0 690.0L436.0 690.0L435.0 690.0L434.0 690.1L433.0 690.1L432.0 690.3L431.0 690.5L430.0 690.4L429.0 690.5L428.0 690.4L427.0 690.4L426.0 690.4L425.0 690.3L424.0 690.4L423.0 690.5L422.0 690.4L421.0 690.4L420.0 690.4L419.0 690.5L418.0 690.6L417.0 690.5L416.0 690.4L415.0 690.4L414.0 690.4L413.0 690.5L412.0 690.6L411.0 690.6L410.0 690.5L409.0 690.5L408.0 690.6L407.0 690.8L406.0 690.9L405.0 690.9L404.0 691.2L403.0 691.9L402.0 692.9L401.0 693.9L400.0 694.0L399.0 694.1L398.0 694.8L397.0 695.0L396.0 694.4L395.0 694.4L394.0 694.3L393.0 694.1L392.0 694.2L391.0 694.0L390.0 693.3L389.0 693.4L388.0 693.4L387.0 692.9L386.0 692.9L385.0 692.6L384.0 691.4L383.0 690.3L382.0 689.8L381.0 689.9L380.0 690.0L379.0 690.1L378.0 690.2L377.0 690.2L376.0 690.2L375.0 690.1L374.0 690.1L373.0 690.3L372.0 690.3L371.0 690.5L370.0 691.0L369.0 691.4L368.0 692.1L367.0 692.6L366.0 692.4L365.0 692.5L364.0 692.9L363.0 692.9L362.0 693.5L361.0 693.3L360.0 693.4L359.0 693.3L358.0 693.0L357.0 693.1L356.0 692.7L355.0 692.8L354.0 692.5L353.0 692.9L352.0 692.9L351.0 692.4L350.0 691.9L349.0 691.6L348.0 689.4L347.0 689.4L346.0 689.4L345.0 689.4L344.0 689.4L343.0 689.4L342.0 689.4L341.0 689.4L340.0 689.4L339.0 689.4L338.0 689.4L337.0 689.4L336.0 689.4L335.0 689.4L334.0 689.4L333.0 689.4L332.0 689.4L331.0 689.4L330.0 689.4L329.0 689.4L328.0 689.4L327.0 689.4L326.0 689.4L325.0 689.4L324.0 689.4L323.0 689.4L322.0 689.4L321.0 689.4L320.0 689.4L319.0 689.4L318.0 689.4L317.0 689.4L316.0 689.4L315.0 689.4L314.0 689.4L313.0 689.4L312.0 689.4L311.0 689.4L310.0 689.4L309.0 689.4L308.0 689.4L307.0 689.4L306.0 689.4L305.0 689.4L304.0 689.4L303.0 689.4L302.0 689.4L301.0 689.4L300.0 689.4L299.0 689.4L298.0 689.4L297.0 689.4L296.0 689.4L295.0 689.4L294.0 689.4L293.0 689.4L292.0 689.4L291.0 689.4L290.0 689.4L289.0 689.4L288.0 689.4L287.0 689.4L286.0 689.4L285.0 689.4L284.0 689.4L283.0 689.4L282.0 689.4L281.0 689.4L280.0 689.4L279.0 689.4L278.0 689.4L277.0 689.4L276.0 689.4L275.0 689.4L274.0 689.4L273.0 689.4L272.0 689.4L271.0 689.4L270.0 689.4L269.0 689.4L268.0 689.4L267.0 689.4L266.0 689.4L265.0 689.4L264.0 689.4L263.0 689.5L262.0 689.5L261.0 689.5L260.0 689.6L259.0 689.6L258.0 689.6L257.0 689.7L256.0 689.7L255.0 689.8L254.0 689.7L253.0 689.6L252.0 689.7L251.0 689.6L250.0 689.7L249.0 689.8L248.0 689.8L247.0 689.8L246.0 689.9L245.0 690.0L244.0 689.9L243.0 690.0L242.0 689.9L241.0 689.9L240.0 689.9L239.0 690.0L238.0 690.0L237.0 690.0L236.0 690.2L235.0 690.2L234.0 690.3L233.0 690.3L232.0 690.2L231.0 690.2L230.0 690.3L229.0 690.3L228.0 690.5L227.0 690.3L226.0 690.3L225.0 690.3L224.0 690.3L223.0 690.3L222.0 690.2L221.0 690.3L220.0 690.6L219.0 691.2L218.0 691.6L217.0 692.5L216.0 693.2L215.0 693.6L214.0 693.7L213.0 694.3L212.0 695.4L211.0 695.3L210.0 694.8L209.0 694.7L208.0 694.0L207.0 693.1L206.0 693.6L205.0 693.6L204.0 694.0L203.0 693.5L202.0 693.4L201.0 693.7L200.0 694.1L199.0 693.5L198.0 690.5L197.0 690.1L196.0 689.9L195.0 689.9L194.0 690.0L193.0 689.9L192.0 689.9L191.0 690.0L190.0 690.2L189.0 690.2L188.0 690.3L187.0 690.4L186.0 690.6L185.0 690.7L184.0 690.8L183.0 691.1L182.0 691.3L181.0 692.4L180.0 693.5L179.0 693.3L178.0 693.4L177.0 693.8L176.0 693.9L175.0 693.4L174.0 692.5L173.0 693.1L172.0 693.5L171.0 693.7L170.0 693.5L169.0 693.4L168.0 693.4L167.0 693.4L166.0 694.0L165.0 693.9L164.0 692.3L163.0 689.4L162.0 689.4L161.0 689.4L160.0 689.4L159.0 689.4L158.0 689.4L157.0 689.4L156.0 689.4L155.0 689.4L154.0 689.4L153.0 689.4L152.0 689.4L151.0 689.4L150.0 689.4L149.0 689.4L148.0 689.4L147.0 689.4L146.0 689.4L145.0 689.4L144.0 689.4L143.0 689.4L142.0 689.4L141.0 689.4L140.0 689.4L139.0 689.4L138.0 689.4L137.0 689.4L136.0 689.4L135.0 689.4L134.0 689.4L133.0 689.4L132.0 689.4L131.0 689.4L130.0 689.4L129.0 689.4L128.0 689.4L127.0 689.4L126.0 689.4L125.0 689.4L124.0 689.4L123.0 689.4L122.0 689.4L121.0 689.4L120.0 689.4L119.0 689.4L118.0 689.4L117.0 689.4L116.0 689.4L115.0 689.4L114.0 689.4L113.0 689.4L112.0 689.4L111.0 689.4L110.0 689.4L109.0 689.4L108.0 689.4L107.0 689.4L106.0 689.4L105.0 689.4L104.0 689.4L103.0 689.4L102.0 689.4L101.0 689.4L100.0 689.4L99.0 689.4L98.0 689.4L97.0 689.4L96.0 689.4L95.0 689.4L94.0 689.4L93.0 689.4L92.0 689.4L91.0 689.4L90.0 689.4L89.0 689.4L88.0 689.4L87.0 689.4L86.0 689.4L85.0 689.4L84.0 689.4L83.0 689.4L82.0 689.4L81.0 689.4L80.0 689.4L79.0 689.4L78.0 689.4L77.0 689.4L76.0 689.4L75.0 689.4L74.0 689.4L73.0 689.4L72.0 689.4L71.0 689.4L70.0 689.5L69.0 689.7L68.0 689.7L67.0 689.8L66.0 689.9L65.0 689.9L64.0 689.8L63.0 689.9L62.0 689.8L61.0 689.9L60.0 689.8L59.0 689.8L58.0 689.8L57.0 689.9L56.0 689.9L55.0 689.8L54.0 689.8L53.0 689.9L52.0 690.0L51.0 690.0L50.0 689.9L49.0 690.1L48.0 690.1L47.0 690.0L46.0 690.0L45.0 690.1L44.0 690.1L43.0 690.0L42.0 689.8L41.0 690.1L40.0 690.1L39.0 690.2L38.0 690.2L37.0 690.1L36.0 690.5L35.0 690.5L34.0 691.1L33.0 691.5L32.0 691.8L31.0 692.4L30.0 693.0L29.0 693.6L28.0 693.6L27.0 693.6L26.0 693.5L25.0 693.8L24.0 693.5L23.0 694.2L22.0 694.5L21.0 693.8L20.0 692.9L19.0 693.1L18.0 693.4L17.0 693.2L16.0 693.1L15.0 692.6L14.0 692.7L13.0 692.0L12.0 690.4L11.0 689.5L10.0 689.4L9.0 689.4L8.0 689.5L7.0 689.6L6.0 689.7L5.0 689.7L4.0 689.8L3.0 689.8L2.0 689.9L1.0 689.8L0.0 689.8Z" fill="#1e1d22"/>
<rect x="-2.00" y="700.40" width="678.30" height="67.40" fill="#5f473a" />
<rect x="118.60" y="700.40" width="138.00" height="67.40" fill="#ffa374" />
<rect x="304.50" y="700.40" width="185.90" height="67.40" fill="#ffa374" />
<line x1="25.65" y1="722.90" x2="25.65" y2="767.80" stroke="rgba(0,0,0,0.13)" stroke-width="1" opacity="1.0"/>
<line x1="72.12" y1="722.90" x2="72.12" y2="767.80" stroke="rgba(0,0,0,0.13)" stroke-width="1" opacity="1.0"/>
<line x1="118.60" y1="722.90" x2="118.60" y2="767.80" stroke="rgba(0,0,0,0.13)" stroke-width="1" opacity="1.0"/>
<line x1="165.07" y1="722.90" x2="165.07" y2="767.80" stroke="rgba(0,0,0,0.13)" stroke-width="1" opacity="1.0"/>
<line x1="211.55" y1="722.90" x2="211.55" y2="767.80" stroke="rgba(0,0,0,0.13)" stroke-width="1" opacity="1.0"/>
<line x1="258.02" y1="722.90" x2="258.02" y2="767.80" stroke="rgba(0,0,0,0.13)" stroke-width="1" opacity="1.0"/>
<line x1="304.50" y1="722.90" x2="304.50" y2="767.80" stroke="rgba(0,0,0,0.13)" stroke-width="1" opacity="1.0"/>
<line x1="350.98" y1="722.90" x2="350.98" y2="767.80" stroke="rgba(0,0,0,0.13)" stroke-width="1" opacity="1.0"/>
<line x1="397.45" y1="722.90" x2="397.45" y2="767.80" stroke="rgba(0,0,0,0.13)" stroke-width="1" opacity="1.0"/>
<line x1="443.93" y1="722.90" x2="443.93" y2="767.80" stroke="rgba(0,0,0,0.13)" stroke-width="1" opacity="1.0"/>
<line x1="490.40" y1="722.90" x2="490.40" y2="767.80" stroke="rgba(0,0,0,0.13)" stroke-width="1" opacity="1.0"/>
<line x1="536.88" y1="722.90" x2="536.88" y2="767.80" stroke="rgba(0,0,0,0.13)" stroke-width="1" opacity="1.0"/>
<line x1="583.35" y1="722.90" x2="583.35" y2="767.80" stroke="rgba(0,0,0,0.13)" stroke-width="1" opacity="1.0"/>
<line x1="629.83" y1="722.90" x2="629.83" y2="767.80" stroke="rgba(0,0,0,0.13)" stroke-width="1" opacity="1.0"/>
<line x1="0.00" y1="722.90" x2="676.30" y2="722.90" stroke="rgba(20,10,5,0.6)" stroke-width="1" />
<path d="M0.0 733.1L1.0 733.2L2.0 733.2L3.0 733.2L4.0 733.3L5.0 733.3L6.0 733.4L7.0 733.6L8.0 733.6L9.0 733.6L10.0 733.7L11.0 733.5L12.0 732.5L13.0 730.7L14.0 730.3L15.0 729.8L16.0 729.8L17.0 729.7L18.0 729.4L19.0 728.7L20.0 728.3L21.0 728.4L22.0 729.0L23.0 728.7L24.0 727.8L25.0 728.6L26.0 729.0L27.0 729.1L28.0 728.3L29.0 727.8L30.0 728.6L31.0 729.5L32.0 730.6L33.0 731.2L34.0 731.6L35.0 731.7L36.0 732.1L37.0 732.6L38.0 732.6L39.0 732.6L40.0 732.8L41.0 732.7L42.0 732.9L43.0 733.0L44.0 733.0L45.0 733.1L46.0 733.2L47.0 733.2L48.0 733.0L49.0 733.1L50.0 733.2L51.0 733.2L52.0 733.2L53.0 733.2L54.0 733.2L55.0 733.1L56.0 733.2L57.0 733.3L58.0 733.2L59.0 733.1L60.0 733.1L61.0 733.1L62.0 733.1L63.0 733.1L64.0 733.1L65.0 733.2L66.0 733.2L67.0 733.3L68.0 733.3L69.0 733.4L70.0 733.6L71.0 733.8L72.0 733.9L73.0 733.9L74.0 733.9L75.0 733.9L76.0 733.9L77.0 733.9L78.0 733.9L79.0 733.9L80.0 733.9L81.0 733.9L82.0 733.9L83.0 733.9L84.0 733.9L85.0 733.9L86.0 733.9L87.0 733.9L88.0 733.9L89.0 733.9L90.0 733.9L91.0 733.9L92.0 733.9L93.0 733.9L94.0 733.9L95.0 733.9L96.0 733.9L97.0 733.9L98.0 733.9L99.0 733.9L100.0 733.9L101.0 733.9L102.0 733.9L103.0 733.9L104.0 733.9L105.0 733.9L106.0 733.9L107.0 733.9L108.0 733.9L109.0 733.9L110.0 733.9L111.0 733.9L112.0 733.9L113.0 733.9L114.0 733.9L115.0 733.9L116.0 733.9L117.0 733.9L118.0 733.9L119.0 733.9L120.0 733.9L121.0 733.9L122.0 733.9L123.0 733.9L124.0 733.9L125.0 733.9L126.0 733.9L127.0 733.9L128.0 733.9L129.0 733.9L130.0 733.9L131.0 733.9L132.0 733.9L133.0 733.9L134.0 733.9L135.0 733.9L136.0 733.9L137.0 733.9L138.0 733.9L139.0 733.9L140.0 733.9L141.0 733.9L142.0 733.9L143.0 733.9L144.0 733.9L145.0 733.9L146.0 733.9L147.0 733.9L148.0 733.9L149.0 733.9L150.0 733.9L151.0 733.9L152.0 733.9L153.0 733.9L154.0 733.9L155.0 733.9L156.0 733.9L157.0 733.9L158.0 733.9L159.0 733.9L160.0 733.9L161.0 733.9L162.0 733.9L163.0 733.9L164.0 730.8L165.0 728.5L166.0 728.3L167.0 729.9L168.0 729.3L169.0 729.4L170.0 729.1L171.0 729.3L172.0 729.2L173.0 729.4L174.0 729.4L175.0 728.7L176.0 727.7L177.0 728.0L178.0 727.5L179.0 728.2L180.0 728.8L181.0 730.2L182.0 730.9L183.0 731.3L184.0 731.9L185.0 732.3L186.0 732.5L187.0 732.4L188.0 732.3L189.0 732.5L190.0 732.5L191.0 732.5L192.0 732.7L193.0 733.0L194.0 733.1L195.0 732.9L196.0 732.6L197.0 732.8L198.0 732.7L199.0 729.3L200.0 727.6L201.0 727.8L202.0 727.9L203.0 728.2L204.0 728.5L205.0 728.8L206.0 729.0L207.0 728.7L208.0 728.9L209.0 728.5L210.0 728.2L211.0 728.1L212.0 727.3L213.0 727.3L214.0 728.6L215.0 728.7L216.0 729.2L217.0 729.9L218.0 730.3L219.0 731.3L220.0 732.1L221.0 732.5L222.0 732.5L223.0 732.5L224.0 732.3L225.0 732.4L226.0 732.5L227.0 732.6L228.0 732.7L229.0 732.6L230.0 732.7L231.0 732.5L232.0 732.8L233.0 732.9L234.0 732.9L235.0 732.8L236.0 732.8L237.0 732.7L238.0 732.7L239.0 732.7L240.0 732.8L241.0 732.8L242.0 733.0L243.0 733.1L244.0 733.1L245.0 733.1L246.0 732.9L247.0 732.8L248.0 732.9L249.0 732.9L250.0 733.1L251.0 733.3L252.0 733.1L253.0 733.1L254.0 733.2L255.0 733.2L256.0 733.4L257.0 733.4L258.0 733.5L259.0 733.6L260.0 733.5L261.0 733.6L262.0 733.6L263.0 733.6L264.0 733.7L265.0 733.7L266.0 733.7L267.0 733.8L268.0 733.8L269.0 733.8L270.0 733.9L271.0 733.9L272.0 733.9L273.0 733.9L274.0 733.9L275.0 733.9L276.0 733.9L277.0 733.9L278.0 733.9L279.0 733.9L280.0 733.9L281.0 733.9L282.0 733.9L283.0 733.9L284.0 733.9L285.0 733.9L286.0 733.9L287.0 733.9L288.0 733.9L289.0 733.9L290.0 733.9L291.0 733.9L292.0 733.9L293.0 733.9L294.0 733.9L295.0 733.9L296.0 733.9L297.0 733.9L298.0 733.9L299.0 733.9L300.0 733.9L301.0 733.9L302.0 733.9L303.0 733.9L304.0 733.9L305.0 733.9L306.0 733.9L307.0 733.9L308.0 733.9L309.0 733.9L310.0 733.9L311.0 733.9L312.0 733.9L313.0 733.9L314.0 733.9L315.0 733.9L316.0 733.9L317.0 733.9L318.0 733.9L319.0 733.9L320.0 733.9L321.0 733.9L322.0 733.9L323.0 733.9L324.0 733.9L325.0 733.9L326.0 733.9L327.0 733.9L328.0 733.9L329.0 733.9L330.0 733.9L331.0 733.9L332.0 733.9L333.0 733.9L334.0 733.9L335.0 733.9L336.0 733.9L337.0 733.9L338.0 733.9L339.0 733.9L340.0 733.9L341.0 733.9L342.0 733.9L343.0 733.9L344.0 733.9L345.0 733.9L346.0 733.9L347.0 733.9L348.0 733.8L349.0 731.0L350.0 730.4L351.0 730.0L352.0 729.9L353.0 729.5L354.0 729.4L355.0 729.8L356.0 729.9L357.0 729.8L358.0 728.9L359.0 728.9L360.0 729.6L361.0 729.3L362.0 729.1L363.0 728.9L364.0 729.2L365.0 729.0L366.0 729.3L367.0 729.4L368.0 729.9L369.0 730.8L370.0 731.4L371.0 732.0L372.0 732.1L373.0 732.1L374.0 732.3L375.0 732.4L376.0 732.5L377.0 732.7L378.0 732.8L379.0 732.9L380.0 732.8L381.0 732.8L382.0 732.8L383.0 732.0L384.0 730.5L385.0 729.2L386.0 729.1L387.0 729.1L388.0 728.9L389.0 728.1L390.0 728.3L391.0 727.8L392.0 728.0L393.0 728.2L394.0 727.4L395.0 727.1L396.0 726.9L397.0 726.9L398.0 727.5L399.0 728.4L400.0 728.3L401.0 727.8L402.0 729.4L403.0 730.6L404.0 731.4L405.0 732.0L406.0 731.9L407.0 731.9L408.0 731.8L409.0 731.6L410.0 731.8L411.0 732.0L412.0 732.0L413.0 732.0L414.0 732.2L415.0 732.2L416.0 732.5L417.0 732.4L418.0 732.3L419.0 732.2L420.0 732.2L421.0 732.3L422.0 732.4L423.0 732.4L424.0 732.4L425.0 732.3L426.0 732.7L427.0 732.7L428.0 732.6L429.0 732.4L430.0 732.7L431.0 732.7L432.0 732.8L433.0 732.8L434.0 732.7L435.0 732.7L436.0 732.8L437.0 732.9L438.0 733.1L439.0 733.0L440.0 733.1L441.0 733.2L442.0 733.2L443.0 733.4L444.0 733.5L445.0 733.5L446.0 733.5L447.0 733.6L448.0 733.6L449.0 733.7L450.0 733.7L451.0 733.8L452.0 733.8L453.0 733.9L454.0 733.9L455.0 733.9L456.0 733.9L457.0 733.9L458.0 733.9L459.0 733.9L460.0 733.9L461.0 733.9L462.0 733.9L463.0 733.9L464.0 733.9L465.0 733.9L466.0 733.9L467.0 733.9L468.0 733.9L469.0 733.9L470.0 733.9L471.0 733.9L472.0 733.9L473.0 733.9L474.0 733.9L475.0 733.9L476.0 733.9L477.0 733.9L478.0 733.9L479.0 733.9L480.0 733.9L481.0 733.9L482.0 733.9L483.0 733.9L484.0 733.9L485.0 733.9L486.0 733.9L487.0 733.9L488.0 733.9L489.0 733.9L490.0 733.9L491.0 733.9L492.0 733.9L493.0 733.9L494.0 733.9L495.0 733.9L496.0 733.9L497.0 733.9L498.0 733.9L499.0 733.9L500.0 733.9L501.0 733.9L502.0 733.9L503.0 733.9L504.0 733.9L505.0 733.9L506.0 733.9L507.0 733.9L508.0 733.9L509.0 733.9L510.0 733.9L511.0 733.9L512.0 733.9L513.0 733.9L514.0 733.9L515.0 733.9L516.0 733.9L517.0 733.9L518.0 733.9L519.0 733.9L520.0 733.9L521.0 733.9L522.0 733.9L523.0 733.9L524.0 733.9L525.0 733.9L526.0 733.9L527.0 733.9L528.0 733.9L529.0 733.9L530.0 733.9L531.0 733.9L532.0 733.9L533.0 733.9L534.0 733.9L535.0 731.6L536.0 730.8L537.0 730.5L538.0 730.6L539.0 730.7L540.0 730.2L541.0 729.9L542.0 729.9L543.0 729.8L544.0 730.1L545.0 730.2L546.0 730.0L547.0 729.7L548.0 729.7L549.0 730.4L550.0 731.0L551.0 730.8L552.0 731.0L553.0 731.0L554.0 730.8L555.0 731.3L556.0 732.2L557.0 732.7L558.0 732.8L559.0 732.9L560.0 733.2L561.0 733.3L562.0 733.4L563.0 733.4L564.0 733.5L565.0 733.6L566.0 733.5L567.0 733.5L568.0 733.4L569.0 733.2L570.0 733.0L571.0 730.5L572.0 730.5L573.0 730.3L574.0 730.3L575.0 729.7L576.0 729.9L577.0 729.7L578.0 729.7L579.0 729.7L580.0 729.5L581.0 730.1L582.0 729.9L583.0 730.3L584.0 729.9L585.0 729.8L586.0 730.2L587.0 730.5L588.0 730.7L589.0 730.9L590.0 731.2L591.0 732.2L592.0 732.7L593.0 732.8L594.0 732.9L595.0 733.1L596.0 733.2L597.0 733.3L598.0 733.4L599.0 733.4L600.0 733.3L601.0 733.4L602.0 733.3L603.0 733.3L604.0 733.4L605.0 733.5L606.0 733.5L607.0 733.5L608.0 733.5L609.0 733.5L610.0 733.5L611.0 733.5L612.0 733.6L613.0 733.6L614.0 733.6L615.0 733.5L616.0 733.5L617.0 733.6L618.0 733.6L619.0 733.6L620.0 733.4L621.0 733.3L622.0 733.3L623.0 733.4L624.0 733.5L625.0 733.5L626.0 733.3L627.0 733.3L628.0 733.3L629.0 733.3L630.0 733.2L631.0 733.1L632.0 733.2L633.0 733.4L634.0 733.4L635.0 733.3L636.0 733.4L637.0 733.4L638.0 733.4L639.0 733.4L640.0 733.5L641.0 733.5L642.0 733.5L643.0 733.5L644.0 733.5L645.0 733.6L646.0 733.6L647.0 733.6L648.0 733.7L649.0 733.7L650.0 733.8L651.0 733.8L652.0 733.8L653.0 733.9L654.0 733.9L655.0 733.8L656.0 733.7L657.0 733.4L658.0 733.5L659.0 733.8L660.0 733.9L661.0 733.9L662.0 733.9L663.0 733.9L664.0 733.9L665.0 733.9L666.0 733.9L667.0 733.9L668.0 733.9L669.0 733.9L670.0 733.9L671.0 733.9L672.0 733.9L673.0 733.9L674.0 733.9L675.0 733.9L676.0 733.9L676.0 735.5L675.0 735.5L674.0 735.5L673.0 735.5L672.0 735.5L671.0 735.5L670.0 735.5L669.0 735.5L668.0 735.5L667.0 735.5L666.0 735.5L665.0 735.5L664.0 735.5L663.0 735.5L662.0 735.5L661.0 735.5L660.0 735.5L659.0 735.6L658.0 736.0L657.0 736.0L656.0 735.7L655.0 735.6L654.0 735.5L653.0 735.5L652.0 735.6L651.0 735.6L650.0 735.6L649.0 735.7L648.0 735.7L647.0 735.8L646.0 735.8L645.0 735.8L644.0 735.9L643.0 735.9L642.0 735.9L641.0 735.9L640.0 735.9L639.0 735.9L638.0 735.9L637.0 735.9L636.0 735.9L635.0 736.0L634.0 736.1L633.0 736.2L632.0 736.2L631.0 736.2L630.0 736.3L629.0 736.3L628.0 736.1L627.0 736.0L626.0 735.9L625.0 735.9L624.0 736.0L623.0 736.0L622.0 736.1L621.0 736.0L620.0 736.0L619.0 736.0L618.0 735.9L617.0 735.8L616.0 735.9L615.0 735.9L614.0 735.8L613.0 735.8L612.0 735.8L611.0 735.9L610.0 735.9L609.0 735.8L608.0 735.7L607.0 735.8L606.0 735.9L605.0 735.9L604.0 735.9L603.0 736.0L602.0 736.0L601.0 736.0L600.0 736.0L599.0 736.1L598.0 736.0L597.0 736.1L596.0 736.2L595.0 736.2L594.0 736.1L593.0 736.3L592.0 736.6L591.0 737.3L590.0 738.5L589.0 739.2L588.0 739.2L587.0 739.5L586.0 739.3L585.0 739.0L584.0 739.4L583.0 739.7L582.0 739.5L581.0 739.7L580.0 739.8L579.0 739.7L578.0 739.9L577.0 739.3L576.0 739.2L575.0 739.6L574.0 739.7L573.0 739.2L572.0 739.2L571.0 738.8L570.0 736.5L569.0 736.2L568.0 735.8L567.0 735.9L566.0 736.0L565.0 736.1L564.0 736.1L563.0 736.1L562.0 736.2L561.0 736.2L560.0 736.4L559.0 736.6L558.0 736.6L557.0 736.8L556.0 737.3L555.0 738.2L554.0 739.1L553.0 739.4L552.0 739.5L551.0 739.0L550.0 738.7L549.0 739.0L548.0 739.9L547.0 740.0L546.0 739.7L545.0 739.8L544.0 739.4L543.0 739.5L542.0 739.6L541.0 739.4L540.0 739.0L539.0 738.5L538.0 738.4L537.0 738.3L536.0 738.0L535.0 738.0L534.0 735.5L533.0 735.5L532.0 735.5L531.0 735.5L530.0 735.5L529.0 735.5L528.0 735.5L527.0 735.5L526.0 735.5L525.0 735.5L524.0 735.5L523.0 735.5L522.0 735.5L521.0 735.5L520.0 735.5L519.0 735.5L518.0 735.5L517.0 735.5L516.0 735.5L515.0 735.5L514.0 735.5L513.0 735.5L512.0 735.5L511.0 735.5L510.0 735.5L509.0 735.5L508.0 735.5L507.0 735.5L506.0 735.5L505.0 735.5L504.0 735.5L503.0 735.5L502.0 735.5L501.0 735.5L500.0 735.5L499.0 735.5L498.0 735.5L497.0 735.5L496.0 735.5L495.0 735.5L494.0 735.5L493.0 735.5L492.0 735.5L491.0 735.5L490.0 735.5L489.0 735.5L488.0 735.5L487.0 735.5L486.0 735.5L485.0 735.5L484.0 735.5L483.0 735.5L482.0 735.5L481.0 735.5L480.0 735.5L479.0 735.5L478.0 735.5L477.0 735.5L476.0 735.5L475.0 735.5L474.0 735.5L473.0 735.5L472.0 735.5L471.0 735.5L470.0 735.5L469.0 735.5L468.0 735.5L467.0 735.5L466.0 735.5L465.0 735.5L464.0 735.5L463.0 735.5L462.0 735.5L461.0 735.5L460.0 735.5L459.0 735.5L458.0 735.5L457.0 735.5L456.0 735.5L455.0 735.5L454.0 735.5L453.0 735.5L452.0 735.6L451.0 735.6L450.0 735.7L449.0 735.7L448.0 735.8L447.0 735.8L446.0 735.8L445.0 735.7L444.0 735.9L443.0 736.1L442.0 736.2L441.0 736.4L440.0 736.4L439.0 736.4L438.0 736.5L437.0 736.7L436.0 736.7L435.0 736.7L434.0 736.9L433.0 737.0L432.0 736.8L431.0 736.8L430.0 736.7L429.0 736.9L428.0 736.9L427.0 737.0L426.0 736.9L425.0 736.9L424.0 736.9L423.0 736.8L422.0 737.0L421.0 736.9L420.0 737.2L419.0 737.1L418.0 737.2L417.0 737.2L416.0 737.0L415.0 737.1L414.0 737.0L413.0 737.2L412.0 737.1L411.0 737.4L410.0 737.2L409.0 737.4L408.0 737.2L407.0 737.3L406.0 737.2L405.0 737.6L404.0 738.1L403.0 738.5L402.0 739.6L401.0 740.2L400.0 740.8L399.0 741.6L398.0 742.7L397.0 743.1L396.0 742.4L395.0 742.4L394.0 742.3L393.0 741.2L392.0 741.4L391.0 741.2L390.0 741.4L389.0 741.2L388.0 741.1L387.0 740.6L386.0 740.3L385.0 740.2L384.0 738.8L383.0 737.1L382.0 736.5L381.0 736.6L380.0 736.7L379.0 736.7L378.0 736.8L377.0 736.8L376.0 736.9L375.0 737.0L374.0 737.1L373.0 737.1L372.0 736.9L371.0 737.1L370.0 737.9L369.0 738.6L368.0 739.4L367.0 740.2L366.0 740.1L365.0 739.7L364.0 740.3L363.0 740.6L362.0 740.3L361.0 740.5L360.0 740.0L359.0 739.9L358.0 740.0L357.0 740.2L356.0 740.3L355.0 740.2L354.0 739.9L353.0 740.1L352.0 739.8L351.0 739.7L350.0 739.7L349.0 738.9L348.0 735.6L347.0 735.5L346.0 735.5L345.0 735.5L344.0 735.5L343.0 735.5L342.0 735.5L341.0 735.5L340.0 735.5L339.0 735.5L338.0 735.5L337.0 735.5L336.0 735.5L335.0 735.5L334.0 735.5L333.0 735.5L332.0 735.5L331.0 735.5L330.0 735.5L329.0 735.5L328.0 735.5L327.0 735.5L326.0 735.5L325.0 735.5L324.0 735.5L323.0 735.5L322.0 735.5L321.0 735.5L320.0 735.5L319.0 735.5L318.0 735.5L317.0 735.5L316.0 735.5L315.0 735.5L314.0 735.5L313.0 735.5L312.0 735.5L311.0 735.5L310.0 735.5L309.0 735.5L308.0 735.5L307.0 735.5L306.0 735.5L305.0 735.5L304.0 735.5L303.0 735.5L302.0 735.5L301.0 735.5L300.0 735.5L299.0 735.5L298.0 735.5L297.0 735.5L296.0 735.5L295.0 735.5L294.0 735.5L293.0 735.5L292.0 735.5L291.0 735.5L290.0 735.5L289.0 735.5L288.0 735.5L287.0 735.5L286.0 735.5L285.0 735.5L284.0 735.5L283.0 735.5L282.0 735.5L281.0 735.5L280.0 735.5L279.0 735.5L278.0 735.5L277.0 735.5L276.0 735.5L275.0 735.5L274.0 735.5L273.0 735.5L272.0 735.5L271.0 735.5L270.0 735.5L269.0 735.6L268.0 735.6L267.0 735.6L266.0 735.7L265.0 735.7L264.0 735.7L263.0 735.8L262.0 735.8L261.0 735.9L260.0 735.9L259.0 735.9L258.0 736.0L257.0 736.0L256.0 735.9L255.0 735.9L254.0 736.0L253.0 736.0L252.0 736.1L251.0 736.3L250.0 736.3L249.0 736.3L248.0 736.4L247.0 736.3L246.0 736.4L245.0 736.4L244.0 736.6L243.0 736.5L242.0 736.5L241.0 736.6L240.0 736.7L239.0 736.5L238.0 736.4L237.0 736.5L236.0 736.5L235.0 736.5L234.0 736.6L233.0 736.7L232.0 736.6L231.0 736.6L230.0 736.5L229.0 736.6L228.0 736.6L227.0 736.8L226.0 736.9L225.0 737.0L224.0 737.0L223.0 736.8L222.0 736.9L221.0 737.0L220.0 737.7L219.0 738.1L218.0 738.6L217.0 739.8L216.0 740.1L215.0 740.6L214.0 741.4L213.0 742.7L212.0 743.7L211.0 742.9L210.0 742.6L209.0 742.2L208.0 741.2L207.0 740.7L206.0 741.1L205.0 741.2L204.0 741.0L203.0 740.7L202.0 741.2L201.0 741.7L200.0 742.4L199.0 740.7L198.0 736.7L197.0 736.7L196.0 736.7L195.0 736.6L194.0 736.6L193.0 736.6L192.0 736.7L191.0 736.6L190.0 736.6L189.0 736.6L188.0 736.9L187.0 737.1L186.0 737.1L185.0 737.1L184.0 737.6L183.0 737.8L182.0 738.1L181.0 739.6L180.0 740.5L179.0 741.3L178.0 741.0L177.0 741.0L176.0 740.3L175.0 740.3L174.0 740.3L173.0 740.2L172.0 740.3L171.0 740.6L170.0 740.1L169.0 739.9L168.0 740.6L167.0 740.4L166.0 740.6L165.0 740.5L164.0 738.6L163.0 735.5L162.0 735.5L161.0 735.5L160.0 735.5L159.0 735.5L158.0 735.5L157.0 735.5L156.0 735.5L155.0 735.5L154.0 735.5L153.0 735.5L152.0 735.5L151.0 735.5L150.0 735.5L149.0 735.5L148.0 735.5L147.0 735.5L146.0 735.5L145.0 735.5L144.0 735.5L143.0 735.5L142.0 735.5L141.0 735.5L140.0 735.5L139.0 735.5L138.0 735.5L137.0 735.5L136.0 735.5L135.0 735.5L134.0 735.5L133.0 735.5L132.0 735.5L131.0 735.5L130.0 735.5L129.0 735.5L128.0 735.5L127.0 735.5L126.0 735.5L125.0 735.5L124.0 735.5L123.0 735.5L122.0 735.5L121.0 735.5L120.0 735.5L119.0 735.5L118.0 735.5L117.0 735.5L116.0 735.5L115.0 735.5L114.0 735.5L113.0 735.5L112.0 735.5L111.0 735.5L110.0 735.5L109.0 735.5L108.0 735.5L107.0 735.5L106.0 735.5L105.0 735.5L104.0 735.5L103.0 735.5L102.0 735.5L101.0 735.5L100.0 735.5L99.0 735.5L98.0 735.5L97.0 735.5L96.0 735.5L95.0 735.5L94.0 735.5L93.0 735.5L92.0 735.5L91.0 735.5L90.0 735.5L89.0 735.5L88.0 735.5L87.0 735.5L86.0 735.5L85.0 735.5L84.0 735.5L83.0 735.5L82.0 735.5L81.0 735.5L80.0 735.5L79.0 735.5L78.0 735.5L77.0 735.5L76.0 735.5L75.0 735.5L74.0 735.5L73.0 735.5L72.0 735.5L71.0 735.6L70.0 735.8L69.0 736.1L68.0 736.2L67.0 736.1L66.0 736.2L65.0 736.1L64.0 736.1L63.0 736.2L62.0 736.2L61.0 736.3L60.0 736.4L59.0 736.4L58.0 736.3L57.0 736.3L56.0 736.3L55.0 736.4L54.0 736.4L53.0 736.5L52.0 736.4L51.0 736.3L50.0 736.4L49.0 736.4L48.0 736.5L47.0 736.3L46.0 736.4L45.0 736.2L44.0 736.3L43.0 736.5L42.0 736.7L41.0 736.6L40.0 736.6L39.0 736.7L38.0 736.8L37.0 736.8L36.0 737.2L35.0 737.6L34.0 738.1L33.0 738.9L32.0 739.3L31.0 739.8L30.0 740.4L29.0 741.3L28.0 740.7L27.0 740.1L26.0 740.7L25.0 740.6L24.0 741.5L23.0 741.4L22.0 741.8L21.0 740.8L20.0 740.4L19.0 740.1L18.0 739.4L17.0 739.8L16.0 739.7L15.0 739.9L14.0 739.2L13.0 738.8L12.0 736.8L11.0 735.9L10.0 735.7L9.0 735.8L8.0 735.8L7.0 735.8L6.0 735.9L5.0 736.1L4.0 736.1L3.0 736.2L2.0 736.2L1.0 736.2L0.0 736.3Z" fill="#1e1d22"/>
<path d="M0.0 755.9L1.0 755.8L2.0 755.8L3.0 755.8L4.0 755.8L5.0 755.9L6.0 755.9L7.0 756.0L8.0 756.1L9.0 756.2L10.0 756.2L11.0 756.1L12.0 755.1L13.0 753.2L14.0 752.9L15.0 753.0L16.0 752.8L17.0 753.0L18.0 752.8L19.0 752.7L20.0 752.8L21.0 752.5L22.0 752.6L23.0 752.2L24.0 751.6L25.0 751.5L26.0 751.9L27.0 752.5L28.0 752.4L29.0 752.1L30.0 752.5L31.0 752.7L32.0 753.7L33.0 754.0L34.0 754.6L35.0 755.0L36.0 755.4L37.0 755.7L38.0 755.6L39.0 755.4L40.0 755.3L41.0 755.4L42.0 755.4L43.0 755.4L44.0 755.4L45.0 755.6L46.0 755.6L47.0 755.6L48.0 755.7L49.0 755.8L50.0 755.7L51.0 755.6L52.0 755.6L53.0 755.7L54.0 755.7L55.0 755.8L56.0 755.7L57.0 755.7L58.0 755.7L59.0 755.8L60.0 755.9L61.0 755.8L62.0 755.9L63.0 755.8L64.0 755.8L65.0 755.8L66.0 755.9L67.0 755.9L68.0 755.8L69.0 755.9L70.0 756.1L71.0 756.2L72.0 756.2L73.0 756.2L74.0 756.2L75.0 756.2L76.0 756.2L77.0 756.2L78.0 756.2L79.0 756.2L80.0 756.2L81.0 756.2L82.0 756.2L83.0 756.2L84.0 756.2L85.0 756.2L86.0 756.2L87.0 756.2L88.0 756.2L89.0 756.2L90.0 756.2L91.0 756.2L92.0 756.2L93.0 756.2L94.0 756.2L95.0 756.2L96.0 756.2L97.0 756.2L98.0 756.2L99.0 756.2L100.0 756.2L101.0 756.2L102.0 756.2L103.0 756.2L104.0 756.2L105.0 756.2L106.0 756.2L107.0 756.2L108.0 756.2L109.0 756.2L110.0 756.2L111.0 756.2L112.0 756.2L113.0 756.2L114.0 756.2L115.0 756.2L116.0 756.2L117.0 756.2L118.0 756.2L119.0 756.2L120.0 756.2L121.0 756.2L122.0 756.2L123.0 756.2L124.0 756.2L125.0 756.2L126.0 756.2L127.0 756.2L128.0 756.2L129.0 756.2L130.0 756.2L131.0 756.2L132.0 756.2L133.0 756.2L134.0 756.2L135.0 756.2L136.0 756.2L137.0 756.2L138.0 756.2L139.0 756.2L140.0 756.2L141.0 756.2L142.0 756.2L143.0 756.2L144.0 756.2L145.0 756.2L146.0 756.2L147.0 756.2L148.0 756.2L149.0 756.2L150.0 756.2L151.0 756.2L152.0 756.2L153.0 756.2L154.0 756.2L155.0 756.2L156.0 756.2L157.0 756.2L158.0 756.2L159.0 756.2L160.0 756.2L161.0 756.2L162.0 756.2L163.0 756.2L164.0 753.7L165.0 751.3L166.0 752.0L167.0 752.9L168.0 752.6L169.0 752.4L170.0 752.4L171.0 752.6L172.0 752.7L173.0 752.8L174.0 752.7L175.0 752.7L176.0 752.5L177.0 752.0L178.0 751.5L179.0 751.6L180.0 752.0L181.0 752.9L182.0 754.1L183.0 754.4L184.0 754.6L185.0 754.9L186.0 755.0L187.0 755.0L188.0 755.2L189.0 755.0L190.0 755.2L191.0 755.2L192.0 755.3L193.0 755.5L194.0 755.6L195.0 755.5L196.0 755.3L197.0 755.3L198.0 755.2L199.0 752.0L200.0 750.9L201.0 751.1L202.0 751.5L203.0 752.1L204.0 752.1L205.0 752.2L206.0 752.0L207.0 752.2L208.0 752.0L209.0 752.0L210.0 751.3L211.0 750.2L212.0 750.8L213.0 751.3L214.0 752.1L215.0 752.8L216.0 752.6L217.0 753.1L218.0 753.6L219.0 754.1L220.0 754.7L221.0 755.1L222.0 755.3L223.0 755.3L224.0 755.2L225.0 755.3L226.0 755.4L227.0 755.5L228.0 755.5L229.0 755.4L230.0 755.5L231.0 755.5L232.0 755.5L233.0 755.5L234.0 755.5L235.0 755.5L236.0 755.6L237.0 755.7L238.0 755.6L239.0 755.6L240.0 755.5L241.0 755.4L242.0 755.4L243.0 755.4L244.0 755.4L245.0 755.5L246.0 755.5L247.0 755.6L248.0 755.7L249.0 755.7L250.0 755.7L251.0 755.8L252.0 755.8L253.0 755.7L254.0 755.9L255.0 755.8L256.0 755.9L257.0 755.9L258.0 756.0L259.0 756.0L260.0 756.0L261.0 756.1L262.0 756.1L263.0 756.1L264.0 756.2L265.0 756.2L266.0 756.2L267.0 756.2L268.0 756.2L269.0 756.2L270.0 756.2L271.0 756.2L272.0 756.2L273.0 756.2L274.0 756.2L275.0 756.2L276.0 756.2L277.0 756.2L278.0 756.2L279.0 756.2L280.0 756.2L281.0 756.2L282.0 756.2L283.0 756.2L284.0 756.2L285.0 756.2L286.0 756.2L287.0 756.2L288.0 756.2L289.0 756.2L290.0 756.2L291.0 756.2L292.0 756.2L293.0 756.2L294.0 756.2L295.0 756.2L296.0 756.2L297.0 756.2L298.0 756.2L299.0 756.2L300.0 756.2L301.0 756.2L302.0 756.2L303.0 756.2L304.0 756.2L305.0 756.2L306.0 756.2L307.0 756.2L308.0 756.2L309.0 756.2L310.0 756.2L311.0 756.2L312.0 756.2L313.0 756.2L314.0 756.2L315.0 756.2L316.0 756.2L317.0 756.2L318.0 756.2L319.0 756.2L320.0 756.2L321.0 756.2L322.0 756.2L323.0 756.2L324.0 756.2L325.0 756.2L326.0 756.2L327.0 756.2L328.0 756.2L329.0 756.2L330.0 756.2L331.0 756.2L332.0 756.2L333.0 756.2L334.0 756.2L335.0 756.2L336.0 756.2L337.0 756.2L338.0 756.2L339.0 756.2L340.0 756.2L341.0 756.2L342.0 756.2L343.0 756.2L344.0 756.2L345.0 756.2L346.0 756.2L347.0 756.2L348.0 756.2L349.0 753.7L350.0 753.3L351.0 753.0L352.0 753.1L353.0 753.2L354.0 753.3L355.0 753.0L356.0 752.9L357.0 752.8L358.0 752.6L359.0 752.3L360.0 752.2L361.0 752.1L362.0 751.9L363.0 752.4L364.0 752.8L365.0 753.0L366.0 753.0L367.0 753.1L368.0 753.7L369.0 754.3L370.0 754.8L371.0 755.1L372.0 755.0L373.0 755.2L374.0 755.3L375.0 755.3L376.0 755.3L377.0 755.4L378.0 755.5L379.0 755.6L380.0 755.6L381.0 755.5L382.0 755.6L383.0 755.0L384.0 754.1L385.0 753.4L386.0 753.1L387.0 752.8L388.0 752.3L389.0 752.4L390.0 752.2L391.0 751.7L392.0 751.5L393.0 752.0L394.0 751.8L395.0 751.1L396.0 751.0L397.0 750.4L398.0 751.2L399.0 751.3L400.0 751.0L401.0 751.7L402.0 753.1L403.0 754.0L404.0 754.4L405.0 754.7L406.0 754.7L407.0 754.8L408.0 754.7L409.0 754.8L410.0 754.8L411.0 754.8L412.0 755.0L413.0 755.0L414.0 755.1L415.0 755.0L416.0 755.0L417.0 755.1L418.0 755.1L419.0 755.0L420.0 755.2L421.0 755.1L422.0 755.3L423.0 755.2L424.0 755.3L425.0 755.1L426.0 755.1L427.0 755.0L428.0 755.3L429.0 755.4L430.0 755.4L431.0 755.4L432.0 755.3L433.0 755.2L434.0 755.3L435.0 755.4L436.0 755.5L437.0 755.6L438.0 755.7L439.0 755.8L440.0 755.8L441.0 755.8L442.0 755.8L443.0 755.9L444.0 755.9L445.0 756.0L446.0 756.0L447.0 756.1L448.0 756.1L449.0 756.2L450.0 756.2L451.0 756.2L452.0 756.2L453.0 756.2L454.0 756.2L455.0 756.2L456.0 756.2L457.0 756.2L458.0 756.2L459.0 756.2L460.0 756.2L461.0 756.2L462.0 756.2L463.0 756.2L464.0 756.2L465.0 756.2L466.0 756.2L467.0 756.2L468.0 756.2L469.0 756.2L470.0 756.2L471.0 756.2L472.0 756.2L473.0 756.2L474.0 756.2L475.0 756.2L476.0 756.2L477.0 756.2L478.0 756.2L479.0 756.2L480.0 756.2L481.0 756.2L482.0 756.2L483.0 756.2L484.0 756.2L485.0 756.2L486.0 756.2L487.0 756.2L488.0 756.2L489.0 756.2L490.0 756.2L491.0 756.2L492.0 756.2L493.0 756.2L494.0 756.2L495.0 756.2L496.0 756.2L497.0 756.2L498.0 756.2L499.0 756.2L500.0 756.2L501.0 756.2L502.0 756.2L503.0 756.2L504.0 756.2L505.0 756.2L506.0 756.2L507.0 756.2L508.0 756.2L509.0 756.2L510.0 756.2L511.0 756.2L512.0 756.2L513.0 756.2L514.0 756.2L515.0 756.2L516.0 756.2L517.0 756.2L518.0 756.2L519.0 756.2L520.0 756.2L521.0 756.2L522.0 756.2L523.0 756.2L524.0 756.2L525.0 756.2L526.0 756.2L527.0 756.2L528.0 756.2L529.0 756.2L530.0 756.2L531.0 756.2L532.0 756.2L533.0 756.2L534.0 756.2L535.0 754.4L536.0 754.4L537.0 754.2L538.0 754.0L539.0 753.8L540.0 753.7L541.0 753.3L542.0 753.6L543.0 753.6L544.0 753.6L545.0 753.4L546.0 753.2L547.0 753.5L548.0 753.4L549.0 753.5L550.0 753.4L551.0 753.4L552.0 753.2L553.0 753.4L554.0 753.5L555.0 754.3L556.0 754.8L557.0 755.2L558.0 755.6L559.0 755.8L560.0 755.7L561.0 755.7L562.0 755.7L563.0 755.9L564.0 755.8L565.0 755.9L566.0 755.9L567.0 755.9L568.0 755.9L569.0 755.7L570.0 755.4L571.0 753.8L572.0 753.6L573.0 753.5L574.0 753.4L575.0 753.2L576.0 753.0L577.0 752.9L578.0 753.3L579.0 753.5L580.0 753.6L581.0 753.5L582.0 753.3L583.0 752.8L584.0 753.3L585.0 753.5L586.0 753.2L587.0 753.3L588.0 753.4L589.0 753.5L590.0 754.0L591.0 754.8L592.0 755.3L593.0 755.7L594.0 755.7L595.0 755.8L596.0 755.8L597.0 755.8L598.0 755.7L599.0 755.7L600.0 755.8L601.0 755.8L602.0 755.9L603.0 755.9L604.0 755.9L605.0 755.9L606.0 756.0L607.0 756.0L608.0 756.0L609.0 756.0L610.0 756.1L611.0 756.1L612.0 756.1L613.0 756.1L614.0 756.1L615.0 756.1L616.0 756.0L617.0 756.0L618.0 756.0L619.0 756.0L620.0 755.9L621.0 755.9L622.0 755.9L623.0 755.9L624.0 755.9L625.0 755.8L626.0 755.8L627.0 755.8L628.0 755.9L629.0 755.9L630.0 755.9L631.0 755.9L632.0 755.9L633.0 755.8L634.0 755.8L635.0 755.9L636.0 755.9L637.0 755.9L638.0 755.9L639.0 755.9L640.0 756.0L641.0 756.0L642.0 756.0L643.0 756.0L644.0 756.1L645.0 756.1L646.0 756.1L647.0 756.2L648.0 756.2L649.0 756.2L650.0 756.2L651.0 756.2L652.0 756.2L653.0 756.2L654.0 756.2L655.0 756.2L656.0 756.2L657.0 755.9L658.0 756.0L659.0 756.2L660.0 756.2L661.0 756.2L662.0 756.2L663.0 756.2L664.0 756.2L665.0 756.2L666.0 756.2L667.0 756.2L668.0 756.2L669.0 756.2L670.0 756.2L671.0 756.2L672.0 756.2L673.0 756.2L674.0 756.2L675.0 756.2L676.0 756.2L676.0 757.8L675.0 757.8L674.0 757.8L673.0 757.8L672.0 757.8L671.0 757.8L670.0 757.8L669.0 757.8L668.0 757.8L667.0 757.8L666.0 757.8L665.0 757.8L664.0 757.8L663.0 757.8L662.0 757.8L661.0 757.8L660.0 757.8L659.0 757.8L658.0 758.0L657.0 758.1L656.0 757.8L655.0 757.8L654.0 757.8L653.0 757.8L652.0 757.8L651.0 757.8L650.0 757.8L649.0 757.8L648.0 757.8L647.0 757.8L646.0 757.9L645.0 757.9L644.0 757.9L643.0 758.0L642.0 758.0L641.0 758.0L640.0 758.0L639.0 758.1L638.0 758.1L637.0 758.1L636.0 758.1L635.0 758.1L634.0 758.2L633.0 758.2L632.0 758.2L631.0 758.1L630.0 758.1L629.0 758.2L628.0 758.1L627.0 758.2L626.0 758.2L625.0 758.2L624.0 758.1L623.0 758.1L622.0 758.1L621.0 758.1L620.0 758.1L619.0 758.0L618.0 758.0L617.0 758.0L616.0 758.0L615.0 757.9L614.0 757.9L613.0 757.9L612.0 757.9L611.0 757.9L610.0 757.9L609.0 758.0L608.0 758.0L607.0 758.0L606.0 758.0L605.0 758.1L604.0 758.1L603.0 758.1L602.0 758.1L601.0 758.2L600.0 758.0L599.0 758.1L598.0 758.2L597.0 758.2L596.0 758.3L595.0 758.3L594.0 758.3L593.0 758.4L592.0 758.6L591.0 759.2L590.0 760.4L589.0 760.5L588.0 760.5L587.0 760.6L586.0 760.9L585.0 760.9L584.0 760.9L583.0 760.7L582.0 760.8L581.0 760.6L580.0 760.5L579.0 760.6L578.0 760.8L577.0 760.9L576.0 760.7L575.0 760.4L574.0 760.2L573.0 760.4L572.0 760.2L571.0 760.1L570.0 758.4L569.0 758.2L568.0 758.1L567.0 758.1L566.0 758.1L565.0 758.1L564.0 758.2L563.0 758.1L562.0 758.1L561.0 758.2L560.0 758.3L559.0 758.3L558.0 758.4L557.0 758.6L556.0 759.1L555.0 759.7L554.0 760.4L553.0 760.3L552.0 760.2L551.0 760.5L550.0 760.8L549.0 761.0L548.0 760.8L547.0 761.0L546.0 760.8L545.0 760.8L544.0 760.3L543.0 760.6L542.0 760.7L541.0 760.9L540.0 760.6L539.0 760.7L538.0 760.6L537.0 760.3L536.0 760.2L535.0 760.1L534.0 757.8L533.0 757.8L532.0 757.8L531.0 757.8L530.0 757.8L529.0 757.8L528.0 757.8L527.0 757.8L526.0 757.8L525.0 757.8L524.0 757.8L523.0 757.8L522.0 757.8L521.0 757.8L520.0 757.8L519.0 757.8L518.0 757.8L517.0 757.8L516.0 757.8L515.0 757.8L514.0 757.8L513.0 757.8L512.0 757.8L511.0 757.8L510.0 757.8L509.0 757.8L508.0 757.8L507.0 757.8L506.0 757.8L505.0 757.8L504.0 757.8L503.0 757.8L502.0 757.8L501.0 757.8L500.0 757.8L499.0 757.8L498.0 757.8L497.0 757.8L496.0 757.8L495.0 757.8L494.0 757.8L493.0 757.8L492.0 757.8L491.0 757.8L490.0 757.8L489.0 757.8L488.0 757.8L487.0 757.8L486.0 757.8L485.0 757.8L484.0 757.8L483.0 757.8L482.0 757.8L481.0 757.8L480.0 757.8L479.0 757.8L478.0 757.8L477.0 757.8L476.0 757.8L475.0 757.8L474.0 757.8L473.0 757.8L472.0 757.8L471.0 757.8L470.0 757.8L469.0 757.8L468.0 757.8L467.0 757.8L466.0 757.8L465.0 757.8L464.0 757.8L463.0 757.8L462.0 757.8L461.0 757.8L460.0 757.8L459.0 757.8L458.0 757.8L457.0 757.8L456.0 757.8L455.0 757.8L454.0 757.8L453.0 757.8L452.0 757.8L451.0 757.8L450.0 757.8L449.0 757.8L448.0 757.9L447.0 757.9L446.0 758.0L445.0 758.0L444.0 758.1L443.0 758.1L442.0 758.1L441.0 758.2L440.0 758.3L439.0 758.3L438.0 758.4L437.0 758.5L436.0 758.6L435.0 758.7L434.0 758.6L433.0 758.6L432.0 758.6L431.0 758.6L430.0 758.7L429.0 758.7L428.0 758.8L427.0 758.8L426.0 758.7L425.0 758.7L424.0 758.6L423.0 758.8L422.0 758.9L421.0 758.9L420.0 758.7L419.0 758.8L418.0 758.8L417.0 758.9L416.0 758.9L415.0 758.9L414.0 758.9L413.0 759.0L412.0 759.0L411.0 759.1L410.0 759.0L409.0 759.1L408.0 759.1L407.0 759.2L406.0 759.4L405.0 759.5L404.0 759.8L403.0 760.6L402.0 761.2L401.0 762.3L400.0 762.4L399.0 762.5L398.0 763.7L397.0 763.9L396.0 762.8L395.0 762.5L394.0 762.3L393.0 762.2L392.0 762.4L391.0 762.3L390.0 762.1L389.0 762.2L388.0 761.7L387.0 761.0L386.0 761.2L385.0 761.0L384.0 760.3L383.0 759.1L382.0 758.5L381.0 758.3L380.0 758.3L379.0 758.4L378.0 758.4L377.0 758.5L376.0 758.6L375.0 758.6L374.0 758.7L373.0 758.7L372.0 758.8L371.0 759.0L370.0 759.3L369.0 759.8L368.0 760.3L367.0 760.9L366.0 761.1L365.0 761.4L364.0 761.6L363.0 761.3L362.0 761.5L361.0 761.7L360.0 761.4L359.0 760.9L358.0 760.9L357.0 761.0L356.0 761.1L355.0 761.2L354.0 760.9L353.0 760.6L352.0 760.8L351.0 760.4L350.0 760.3L349.0 759.8L348.0 757.8L347.0 757.8L346.0 757.8L345.0 757.8L344.0 757.8L343.0 757.8L342.0 757.8L341.0 757.8L340.0 757.8L339.0 757.8L338.0 757.8L337.0 757.8L336.0 757.8L335.0 757.8L334.0 757.8L333.0 757.8L332.0 757.8L331.0 757.8L330.0 757.8L329.0 757.8L328.0 757.8L327.0 757.8L326.0 757.8L325.0 757.8L324.0 757.8L323.0 757.8L322.0 757.8L321.0 757.8L320.0 757.8L319.0 757.8L318.0 757.8L317.0 757.8L316.0 757.8L315.0 757.8L314.0 757.8L313.0 757.8L312.0 757.8L311.0 757.8L310.0 757.8L309.0 757.8L308.0 757.8L307.0 757.8L306.0 757.8L305.0 757.8L304.0 757.8L303.0 757.8L302.0 757.8L301.0 757.8L300.0 757.8L299.0 757.8L298.0 757.8L297.0 757.8L296.0 757.8L295.0 757.8L294.0 757.8L293.0 757.8L292.0 757.8L291.0 757.8L290.0 757.8L289.0 757.8L288.0 757.8L287.0 757.8L286.0 757.8L285.0 757.8L284.0 757.8L283.0 757.8L282.0 757.8L281.0 757.8L280.0 757.8L279.0 757.8L278.0 757.8L277.0 757.8L276.0 757.8L275.0 757.8L274.0 757.8L273.0 757.8L272.0 757.8L271.0 757.8L270.0 757.8L269.0 757.8L268.0 757.8L267.0 757.8L266.0 757.8L265.0 757.8L264.0 757.8L263.0 757.9L262.0 757.9L261.0 757.9L260.0 758.0L259.0 758.0L258.0 758.0L257.0 758.1L256.0 758.1L255.0 758.2L254.0 758.2L253.0 758.2L252.0 758.2L251.0 758.4L250.0 758.3L249.0 758.3L248.0 758.2L247.0 758.4L246.0 758.3L245.0 758.4L244.0 758.4L243.0 758.5L242.0 758.3L241.0 758.5L240.0 758.4L239.0 758.4L238.0 758.4L237.0 758.5L236.0 758.5L235.0 758.6L234.0 758.5L233.0 758.5L232.0 758.5L231.0 758.6L230.0 758.6L229.0 758.8L228.0 758.7L227.0 758.7L226.0 758.8L225.0 758.8L224.0 758.7L223.0 758.7L222.0 758.7L221.0 758.8L220.0 759.2L219.0 759.5L218.0 760.1L217.0 760.7L216.0 761.5L215.0 761.9L214.0 762.6L213.0 763.2L212.0 763.9L211.0 763.4L210.0 763.2L209.0 763.2L208.0 762.6L207.0 761.6L206.0 761.8L205.0 761.3L204.0 761.6L203.0 761.8L202.0 762.4L201.0 762.1L200.0 762.2L199.0 761.7L198.0 758.6L197.0 758.5L196.0 758.5L195.0 758.3L194.0 758.3L193.0 758.3L192.0 758.4L191.0 758.5L190.0 758.6L189.0 758.6L188.0 758.8L187.0 759.0L186.0 759.1L185.0 759.0L184.0 759.2L183.0 759.3L182.0 759.5L181.0 760.7L180.0 761.8L179.0 761.9L178.0 761.8L177.0 761.8L176.0 761.6L175.0 762.0L174.0 762.0L173.0 761.9L172.0 761.9L171.0 761.8L170.0 762.1L169.0 761.9L168.0 761.6L167.0 761.5L166.0 762.7L165.0 762.5L164.0 760.3L163.0 757.8L162.0 757.8L161.0 757.8L160.0 757.8L159.0 757.8L158.0 757.8L157.0 757.8L156.0 757.8L155.0 757.8L154.0 757.8L153.0 757.8L152.0 757.8L151.0 757.8L150.0 757.8L149.0 757.8L148.0 757.8L147.0 757.8L146.0 757.8L145.0 757.8L144.0 757.8L143.0 757.8L142.0 757.8L141.0 757.8L140.0 757.8L139.0 757.8L138.0 757.8L137.0 757.8L136.0 757.8L135.0 757.8L134.0 757.8L133.0 757.8L132.0 757.8L131.0 757.8L130.0 757.8L129.0 757.8L128.0 757.8L127.0 757.8L126.0 757.8L125.0 757.8L124.0 757.8L123.0 757.8L122.0 757.8L121.0 757.8L120.0 757.8L119.0 757.8L118.0 757.8L117.0 757.8L116.0 757.8L115.0 757.8L114.0 757.8L113.0 757.8L112.0 757.8L111.0 757.8L110.0 757.8L109.0 757.8L108.0 757.8L107.0 757.8L106.0 757.8L105.0 757.8L104.0 757.8L103.0 757.8L102.0 757.8L101.0 757.8L100.0 757.8L99.0 757.8L98.0 757.8L97.0 757.8L96.0 757.8L95.0 757.8L94.0 757.8L93.0 757.8L92.0 757.8L91.0 757.8L90.0 757.8L89.0 757.8L88.0 757.8L87.0 757.8L86.0 757.8L85.0 757.8L84.0 757.8L83.0 757.8L82.0 757.8L81.0 757.8L80.0 757.8L79.0 757.8L78.0 757.8L77.0 757.8L76.0 757.8L75.0 757.8L74.0 757.8L73.0 757.8L72.0 757.8L71.0 757.8L70.0 757.9L69.0 758.1L68.0 758.1L67.0 758.1L66.0 758.2L65.0 758.2L64.0 758.3L63.0 758.2L62.0 758.2L61.0 758.1L60.0 758.2L59.0 758.1L58.0 758.2L57.0 758.2L56.0 758.2L55.0 758.3L54.0 758.2L53.0 758.2L52.0 758.3L51.0 758.3L50.0 758.4L49.0 758.3L48.0 758.3L47.0 758.3L46.0 758.3L45.0 758.2L44.0 758.2L43.0 758.4L42.0 758.5L41.0 758.6L40.0 758.6L39.0 758.5L38.0 758.4L37.0 758.4L36.0 758.8L35.0 759.2L34.0 759.5L33.0 759.8L32.0 760.2L31.0 760.9L30.0 761.4L29.0 762.1L28.0 762.3L27.0 761.8L26.0 762.2L25.0 762.4L24.0 762.8L23.0 762.6L22.0 762.5L21.0 762.4L20.0 761.9L19.0 761.4L18.0 760.8L17.0 760.7L16.0 760.7L15.0 760.7L14.0 760.8L13.0 760.7L12.0 758.9L11.0 757.9L10.0 757.8L9.0 757.8L8.0 757.9L7.0 758.0L6.0 758.1L5.0 758.1L4.0 758.2L3.0 758.1L2.0 758.1L1.0 758.2L0.0 758.4Z" fill="#1e1d22"/>
<rect x="-2.00" y="769.00" width="678.30" height="68.30" fill="#5f473a" />
<rect x="256.60" y="769.00" width="47.90" height="68.30" fill="#ffa374" />
<rect x="490.40" y="769.00" width="185.90" height="68.30" fill="#ffa374" />
<line x1="25.65" y1="791.50" x2="25.65" y2="837.30" stroke="rgba(0,0,0,0.13)" stroke-width="1" opacity="1.0"/>
<line x1="72.12" y1="791.50" x2="72.12" y2="837.30" stroke="rgba(0,0,0,0.13)" stroke-width="1" opacity="1.0"/>
<line x1="118.60" y1="791.50" x2="118.60" y2="837.30" stroke="rgba(0,0,0,0.13)" stroke-width="1" opacity="1.0"/>
<line x1="165.07" y1="791.50" x2="165.07" y2="837.30" stroke="rgba(0,0,0,0.13)" stroke-width="1" opacity="1.0"/>
<line x1="211.55" y1="791.50" x2="211.55" y2="837.30" stroke="rgba(0,0,0,0.13)" stroke-width="1" opacity="1.0"/>
<line x1="258.02" y1="791.50" x2="258.02" y2="837.30" stroke="rgba(0,0,0,0.13)" stroke-width="1" opacity="1.0"/>
<line x1="304.50" y1="791.50" x2="304.50" y2="837.30" stroke="rgba(0,0,0,0.13)" stroke-width="1" opacity="1.0"/>
<line x1="350.98" y1="791.50" x2="350.98" y2="837.30" stroke="rgba(0,0,0,0.13)" stroke-width="1" opacity="1.0"/>
<line x1="397.45" y1="791.50" x2="397.45" y2="837.30" stroke="rgba(0,0,0,0.13)" stroke-width="1" opacity="1.0"/>
<line x1="443.93" y1="791.50" x2="443.93" y2="837.30" stroke="rgba(0,0,0,0.13)" stroke-width="1" opacity="1.0"/>
<line x1="490.40" y1="791.50" x2="490.40" y2="837.30" stroke="rgba(0,0,0,0.13)" stroke-width="1" opacity="1.0"/>
<line x1="536.88" y1="791.50" x2="536.88" y2="837.30" stroke="rgba(0,0,0,0.13)" stroke-width="1" opacity="1.0"/>
<line x1="583.35" y1="791.50" x2="583.35" y2="837.30" stroke="rgba(0,0,0,0.13)" stroke-width="1" opacity="1.0"/>
<line x1="629.83" y1="791.50" x2="629.83" y2="837.30" stroke="rgba(0,0,0,0.13)" stroke-width="1" opacity="1.0"/>
<line x1="0.00" y1="791.50" x2="676.30" y2="791.50" stroke="rgba(20,10,5,0.6)" stroke-width="1" />
<path d="M0.0 801.6L1.0 801.7L2.0 801.6L3.0 801.7L4.0 801.9L5.0 802.0L6.0 802.1L7.0 802.2L8.0 802.1L9.0 802.1L10.0 802.2L11.0 802.0L12.0 801.0L13.0 799.1L14.0 798.7L15.0 798.2L16.0 797.8L17.0 798.1L18.0 797.7L19.0 797.1L20.0 797.2L21.0 797.1L22.0 796.7L23.0 796.4L24.0 796.1L25.0 796.7L26.0 797.1L27.0 797.7L28.0 797.4L29.0 796.9L30.0 798.2L31.0 798.5L32.0 798.9L33.0 799.1L34.0 800.1L35.0 800.7L36.0 800.9L37.0 801.1L38.0 801.2L39.0 801.4L40.0 801.4L41.0 801.4L42.0 801.3L43.0 801.4L44.0 801.5L45.0 801.4L46.0 801.5L47.0 801.4L48.0 801.5L49.0 801.5L50.0 801.5L51.0 801.7L52.0 801.8L53.0 801.8L54.0 801.6L55.0 801.5L56.0 801.5L57.0 801.5L58.0 801.7L59.0 801.7L60.0 801.7L61.0 801.5L62.0 801.6L63.0 801.5L64.0 801.6L65.0 801.7L66.0 801.9L67.0 801.9L68.0 801.9L69.0 802.0L70.0 802.1L71.0 802.3L72.0 802.4L73.0 802.4L74.0 802.4L75.0 802.4L76.0 802.4L77.0 802.4L78.0 802.4L79.0 802.4L80.0 802.4L81.0 802.4L82.0 802.4L83.0 802.4L84.0 802.4L85.0 802.4L86.0 802.4L87.0 802.4L88.0 802.4L89.0 802.4L90.0 802.4L91.0 802.4L92.0 802.4L93.0 802.4L94.0 802.4L95.0 802.4L96.0 802.4L97.0 802.4L98.0 802.4L99.0 802.4L100.0 802.4L101.0 802.4L102.0 802.4L103.0 802.4L104.0 802.4L105.0 802.4L106.0 802.4L107.0 802.4L108.0 802.4L109.0 802.4L110.0 802.4L111.0 802.4L112.0 802.4L113.0 802.4L114.0 802.4L115.0 802.4L116.0 802.4L117.0 802.4L118.0 802.4L119.0 802.4L120.0 802.4L121.0 802.4L122.0 802.4L123.0 802.4L124.0 802.4L125.0 802.4L126.0 802.4L127.0 802.4L128.0 802.4L129.0 802.4L130.0 802.4L131.0 802.4L132.0 802.4L133.0 802.4L134.0 802.4L135.0 802.4L136.0 802.4L137.0 802.4L138.0 802.4L139.0 802.4L140.0 802.4L141.0 802.4L142.0 802.4L143.0 802.4L144.0 802.4L145.0 802.4L146.0 802.4L147.0 802.4L148.0 802.4L149.0 802.4L150.0 802.4L151.0 802.4L152.0 802.4L153.0 802.4L154.0 802.4L155.0 802.4L156.0 802.4L157.0 802.4L158.0 802.4L159.0 802.4L160.0 802.4L161.0 802.4L162.0 802.4L163.0 802.4L164.0 799.2L165.0 796.7L166.0 796.9L167.0 798.1L168.0 798.1L169.0 797.6L170.0 797.1L171.0 797.3L172.0 797.4L173.0 797.5L174.0 797.6L175.0 797.3L176.0 796.9L177.0 796.6L178.0 796.0L179.0 796.2L180.0 797.2L181.0 798.5L182.0 799.4L183.0 799.9L184.0 800.5L185.0 800.9L186.0 800.6L187.0 800.7L188.0 800.9L189.0 801.2L190.0 801.3L191.0 801.3L192.0 801.3L193.0 801.4L194.0 801.4L195.0 801.2L196.0 801.1L197.0 801.3L198.0 801.4L199.0 797.8L200.0 796.4L201.0 796.3L202.0 796.5L203.0 797.2L204.0 797.5L205.0 797.6L206.0 797.2L207.0 797.2L208.0 797.2L209.0 797.4L210.0 797.0L211.0 796.2L212.0 795.7L213.0 796.2L214.0 796.1L215.0 796.6L216.0 796.7L217.0 797.4L218.0 798.6L219.0 799.6L220.0 800.4L221.0 801.1L222.0 801.1L223.0 801.2L224.0 801.3L225.0 801.2L226.0 801.0L227.0 801.1L228.0 801.0L229.0 801.0L230.0 801.0L231.0 801.1L232.0 801.3L233.0 801.5L234.0 801.2L235.0 801.3L236.0 801.2L237.0 801.3L238.0 801.3L239.0 801.2L240.0 801.4L241.0 801.4L242.0 801.4L243.0 801.5L244.0 801.3L245.0 801.3L246.0 801.3L247.0 801.4L248.0 801.6L249.0 801.7L250.0 801.7L251.0 801.7L252.0 801.7L253.0 801.7L254.0 801.7L255.0 801.9L256.0 801.9L257.0 802.2L258.0 802.4L259.0 802.4L260.0 802.4L261.0 802.4L262.0 802.4L263.0 802.4L264.0 802.4L265.0 802.4L266.0 802.4L267.0 802.4L268.0 800.6L269.0 799.0L270.0 798.7L271.0 798.7L272.0 798.1L273.0 798.4L274.0 798.0L275.0 798.1L276.0 798.7L277.0 799.0L278.0 798.9L279.0 798.2L280.0 798.2L281.0 798.5L282.0 798.7L283.0 798.8L284.0 799.2L285.0 799.0L286.0 799.2L287.0 799.5L288.0 800.0L289.0 800.1L290.0 800.5L291.0 800.8L292.0 801.1L293.0 801.1L294.0 801.2L295.0 801.4L296.0 801.5L297.0 801.7L298.0 801.8L299.0 801.9L300.0 802.1L301.0 802.0L302.0 802.1L303.0 802.2L304.0 802.3L305.0 802.4L306.0 802.4L307.0 802.4L308.0 802.4L309.0 802.4L310.0 802.4L311.0 802.4L312.0 802.4L313.0 802.4L314.0 802.4L315.0 802.4L316.0 802.4L317.0 802.4L318.0 802.4L319.0 802.4L320.0 802.4L321.0 802.4L322.0 802.4L323.0 802.4L324.0 802.4L325.0 802.4L326.0 802.4L327.0 802.4L328.0 802.4L329.0 802.4L330.0 802.4L331.0 802.4L332.0 802.4L333.0 802.4L334.0 802.4L335.0 802.4L336.0 802.4L337.0 802.4L338.0 802.4L339.0 802.4L340.0 802.4L341.0 802.4L342.0 802.4L343.0 802.4L344.0 802.4L345.0 802.4L346.0 802.4L347.0 802.4L348.0 802.3L349.0 799.0L350.0 798.8L351.0 798.6L352.0 798.2L353.0 798.3L354.0 798.3L355.0 798.1L356.0 798.3L357.0 798.7L358.0 798.2L359.0 797.8L360.0 797.7L361.0 797.3L362.0 797.4L363.0 797.5L364.0 798.0L365.0 798.4L366.0 798.3L367.0 798.4L368.0 799.1L369.0 799.7L370.0 800.1L371.0 800.7L372.0 800.7L373.0 800.8L374.0 801.1L375.0 801.3L376.0 801.5L377.0 801.5L378.0 801.5L379.0 801.4L380.0 801.3L381.0 801.2L382.0 801.3L383.0 800.4L384.0 799.1L385.0 797.8L386.0 797.6L387.0 797.0L388.0 796.9L389.0 796.9L390.0 797.4L391.0 797.5L392.0 797.4L393.0 797.0L394.0 796.5L395.0 796.0L396.0 795.6L397.0 795.6L398.0 796.0L399.0 796.5L400.0 796.6L401.0 796.4L402.0 798.0L403.0 799.2L404.0 800.0L405.0 800.4L406.0 800.5L407.0 800.5L408.0 800.3L409.0 800.3L410.0 800.5L411.0 800.8L412.0 801.0L413.0 800.9L414.0 800.9L415.0 800.9L416.0 800.9L417.0 800.9L418.0 801.0L419.0 800.9L420.0 800.9L421.0 801.0L422.0 801.0L423.0 801.0L424.0 800.9L425.0 800.7L426.0 801.0L427.0 801.0L428.0 801.0L429.0 800.9L430.0 801.2L431.0 801.3L432.0 801.2L433.0 801.3L434.0 801.1L435.0 801.2L436.0 801.1L437.0 801.1L438.0 801.4L439.0 801.6L440.0 801.7L441.0 801.8L442.0 801.8L443.0 801.9L444.0 801.9L445.0 802.0L446.0 802.1L447.0 802.1L448.0 802.1L449.0 802.2L450.0 802.2L451.0 802.3L452.0 802.3L453.0 802.4L454.0 802.4L455.0 802.4L456.0 802.4L457.0 802.4L458.0 802.4L459.0 802.4L460.0 802.4L461.0 802.4L462.0 802.4L463.0 802.4L464.0 802.4L465.0 802.4L466.0 802.4L467.0 802.4L468.0 802.4L469.0 802.4L470.0 802.4L471.0 802.4L472.0 802.4L473.0 802.4L474.0 802.4L475.0 802.4L476.0 802.4L477.0 802.4L478.0 802.4L479.0 802.4L480.0 802.4L481.0 802.4L482.0 802.4L483.0 802.4L484.0 802.4L485.0 802.4L486.0 802.4L487.0 802.4L488.0 802.4L489.0 802.4L490.0 802.4L491.0 802.4L492.0 802.4L493.0 802.4L494.0 802.4L495.0 802.4L496.0 802.4L497.0 802.4L498.0 802.4L499.0 802.4L500.0 802.4L501.0 802.4L502.0 802.4L503.0 802.4L504.0 802.4L505.0 802.4L506.0 802.4L507.0 802.4L508.0 802.4L509.0 802.4L510.0 802.4L511.0 802.4L512.0 802.4L513.0 802.4L514.0 802.4L515.0 802.4L516.0 802.4L517.0 802.4L518.0 802.4L519.0 802.4L520.0 802.4L521.0 802.4L522.0 802.4L523.0 802.4L524.0 802.4L525.0 802.4L526.0 802.4L527.0 802.4L528.0 802.4L529.0 802.4L530.0 802.4L531.0 802.4L532.0 802.4L533.0 802.4L534.0 802.4L535.0 799.7L536.0 799.3L537.0 799.1L538.0 799.0L539.0 799.1L540.0 798.8L541.0 798.8L542.0 798.8L543.0 799.0L544.0 798.3L545.0 798.3L546.0 797.9L547.0 798.4L548.0 798.7L549.0 798.8L550.0 799.3L551.0 798.8L552.0 798.8L553.0 798.9L554.0 798.7L555.0 799.6L556.0 800.0L557.0 800.8L558.0 801.4L559.0 801.6L560.0 801.6L561.0 801.6L562.0 801.7L563.0 801.9L564.0 801.9L565.0 802.0L566.0 802.0L567.0 801.9L568.0 801.9L569.0 801.6L570.0 801.2L571.0 799.1L572.0 799.2L573.0 798.8L574.0 798.2L575.0 798.7L576.0 798.8L577.0 799.2L578.0 798.9L579.0 799.0L580.0 798.7L581.0 799.1L582.0 799.1L583.0 798.9L584.0 799.0L585.0 798.9L586.0 798.5L587.0 798.5L588.0 798.6L589.0 798.7L590.0 799.6L591.0 800.5L592.0 801.3L593.0 801.6L594.0 801.7L595.0 801.7L596.0 801.7L597.0 801.7L598.0 801.7L599.0 801.6L600.0 801.8L601.0 801.8L602.0 802.0L603.0 802.0L604.0 802.0L605.0 801.9L606.0 802.0L607.0 802.0L608.0 802.0L609.0 802.1L610.0 802.0L611.0 802.0L612.0 802.1L613.0 802.1L614.0 802.0L615.0 801.9L616.0 801.4L617.0 799.9L618.0 798.9L619.0 796.8L620.0 798.0L621.0 799.6L622.0 800.6L623.0 801.4L624.0 801.5L625.0 801.5L626.0 801.6L627.0 801.7L628.0 801.7L629.0 801.7L630.0 801.8L631.0 801.7L632.0 801.8L633.0 801.8L634.0 801.7L635.0 801.9L636.0 802.0L637.0 801.9L638.0 801.8L639.0 802.0L640.0 802.0L641.0 802.0L642.0 802.0L643.0 802.0L644.0 802.0L645.0 802.1L646.0 802.1L647.0 802.1L648.0 802.2L649.0 802.2L650.0 802.3L651.0 802.3L652.0 802.3L653.0 802.4L654.0 802.4L655.0 802.3L656.0 802.2L657.0 801.8L658.0 802.0L659.0 802.3L660.0 802.4L661.0 802.4L662.0 802.4L663.0 802.4L664.0 802.4L665.0 802.4L666.0 802.4L667.0 802.4L668.0 802.4L669.0 802.4L670.0 802.4L671.0 802.4L672.0 802.4L673.0 802.4L674.0 802.4L675.0 802.4L676.0 802.4L676.0 804.0L675.0 804.0L674.0 804.0L673.0 804.0L672.0 804.0L671.0 804.0L670.0 804.0L669.0 804.0L668.0 804.0L667.0 804.0L666.0 804.0L665.0 804.0L664.0 804.0L663.0 804.0L662.0 804.0L661.0 804.0L660.0 804.0L659.0 804.1L658.0 804.4L657.0 804.6L656.0 804.2L655.0 804.1L654.0 804.0L653.0 804.0L652.0 804.1L651.0 804.1L650.0 804.1L649.0 804.2L648.0 804.2L647.0 804.3L646.0 804.3L645.0 804.3L644.0 804.4L643.0 804.4L642.0 804.3L641.0 804.3L640.0 804.3L639.0 804.4L638.0 804.4L637.0 804.5L636.0 804.4L635.0 804.4L634.0 804.4L633.0 804.4L632.0 804.6L631.0 804.7L630.0 804.6L629.0 804.6L628.0 804.7L627.0 804.9L626.0 804.9L625.0 804.9L624.0 805.0L623.0 805.0L622.0 805.9L621.0 807.0L620.0 808.5L619.0 809.3L618.0 807.2L617.0 806.0L616.0 805.0L615.0 804.5L614.0 804.3L613.0 804.3L612.0 804.3L611.0 804.4L610.0 804.4L609.0 804.3L608.0 804.4L607.0 804.4L606.0 804.5L605.0 804.3L604.0 804.5L603.0 804.5L602.0 804.5L601.0 804.5L600.0 804.5L599.0 804.6L598.0 804.7L597.0 804.6L596.0 804.7L595.0 804.7L594.0 804.7L593.0 804.9L592.0 805.2L591.0 805.9L590.0 807.0L589.0 807.6L588.0 807.5L587.0 807.4L586.0 807.9L585.0 807.9L584.0 808.2L583.0 808.3L582.0 808.1L581.0 808.2L580.0 808.1L579.0 808.3L578.0 808.4L577.0 808.1L576.0 807.9L575.0 807.9L574.0 808.0L573.0 807.8L572.0 807.2L571.0 807.2L570.0 805.2L569.0 804.8L568.0 804.4L567.0 804.5L566.0 804.5L565.0 804.7L564.0 804.7L563.0 804.7L562.0 804.7L561.0 804.7L560.0 804.7L559.0 804.8L558.0 804.9L557.0 805.2L556.0 805.7L555.0 806.4L554.0 807.1L553.0 806.8L552.0 807.4L551.0 807.3L550.0 807.7L549.0 807.8L548.0 808.1L547.0 808.5L546.0 808.5L545.0 808.2L544.0 808.3L543.0 808.1L542.0 807.8L541.0 807.4L540.0 807.4L539.0 807.1L538.0 807.2L537.0 807.4L536.0 807.0L535.0 806.6L534.0 804.0L533.0 804.0L532.0 804.0L531.0 804.0L530.0 804.0L529.0 804.0L528.0 804.0L527.0 804.0L526.0 804.0L525.0 804.0L524.0 804.0L523.0 804.0L522.0 804.0L521.0 804.0L520.0 804.0L519.0 804.0L518.0 804.0L517.0 804.0L516.0 804.0L515.0 804.0L514.0 804.0L513.0 804.0L512.0 804.0L511.0 804.0L510.0 804.0L509.0 804.0L508.0 804.0L507.0 804.0L506.0 804.0L505.0 804.0L504.0 804.0L503.0 804.0L502.0 804.0L501.0 804.0L500.0 804.0L499.0 804.0L498.0 804.0L497.0 804.0L496.0 804.0L495.0 804.0L494.0 804.0L493.0 804.0L492.0 804.0L491.0 804.0L490.0 804.0L489.0 804.0L488.0 804.0L487.0 804.0L486.0 804.0L485.0 804.0L484.0 804.0L483.0 804.0L482.0 804.0L481.0 804.0L480.0 804.0L479.0 804.0L478.0 804.0L477.0 804.0L476.0 804.0L475.0 804.0L474.0 804.0L473.0 804.0L472.0 804.0L471.0 804.0L470.0 804.0L469.0 804.0L468.0 804.0L467.0 804.0L466.0 804.0L465.0 804.0L464.0 804.0L463.0 804.0L462.0 804.0L461.0 804.0L460.0 804.0L459.0 804.0L458.0 804.0L457.0 804.0L456.0 804.0L455.0 804.0L454.0 804.0L453.0 804.0L452.0 804.1L451.0 804.1L450.0 804.2L449.0 804.2L448.0 804.3L447.0 804.3L446.0 804.3L445.0 804.3L444.0 804.3L443.0 804.5L442.0 804.6L441.0 804.8L440.0 804.8L439.0 804.9L438.0 805.0L437.0 805.1L436.0 805.3L435.0 805.5L434.0 805.3L433.0 805.5L432.0 805.3L431.0 805.4L430.0 805.2L429.0 805.1L428.0 805.2L427.0 805.3L426.0 805.5L425.0 805.7L424.0 805.6L423.0 805.4L422.0 805.2L421.0 805.5L420.0 805.5L419.0 805.6L418.0 805.4L417.0 805.5L416.0 805.7L415.0 805.6L414.0 805.5L413.0 805.4L412.0 805.3L411.0 805.4L410.0 805.6L409.0 805.7L408.0 805.6L407.0 805.8L406.0 806.0L405.0 805.9L404.0 806.4L403.0 807.2L402.0 808.5L401.0 810.2L400.0 810.6L399.0 810.2L398.0 811.2L397.0 812.1L396.0 811.6L395.0 811.0L394.0 810.5L393.0 810.0L392.0 810.2L391.0 809.6L390.0 810.0L389.0 809.4L388.0 809.1L387.0 808.6L386.0 808.3L385.0 807.5L384.0 806.9L383.0 806.0L382.0 805.2L381.0 805.1L380.0 805.0L379.0 805.2L378.0 805.1L377.0 805.1L376.0 805.4L375.0 805.2L374.0 805.2L373.0 805.4L372.0 805.9L371.0 805.9L370.0 806.4L369.0 807.1L368.0 807.8L367.0 808.5L366.0 808.6L365.0 808.5L364.0 808.9L363.0 808.8L362.0 809.0L361.0 809.4L360.0 808.9L359.0 809.1L358.0 808.6L357.0 808.6L356.0 808.1L355.0 808.2L354.0 808.2L353.0 808.1L352.0 808.4L351.0 808.0L350.0 807.2L349.0 806.7L348.0 804.1L347.0 804.0L346.0 804.0L345.0 804.0L344.0 804.0L343.0 804.0L342.0 804.0L341.0 804.0L340.0 804.0L339.0 804.0L338.0 804.0L337.0 804.0L336.0 804.0L335.0 804.0L334.0 804.0L333.0 804.0L332.0 804.0L331.0 804.0L330.0 804.0L329.0 804.0L328.0 804.0L327.0 804.0L326.0 804.0L325.0 804.0L324.0 804.0L323.0 804.0L322.0 804.0L321.0 804.0L320.0 804.0L319.0 804.0L318.0 804.0L317.0 804.0L316.0 804.0L315.0 804.0L314.0 804.0L313.0 804.0L312.0 804.0L311.0 804.0L310.0 804.0L309.0 804.0L308.0 804.0L307.0 804.0L306.0 804.0L305.0 804.0L304.0 804.1L303.0 804.2L302.0 804.3L301.0 804.4L300.0 804.5L299.0 804.5L298.0 804.6L297.0 804.7L296.0 804.7L295.0 804.7L294.0 804.9L293.0 805.0L292.0 805.2L291.0 805.6L290.0 805.9L289.0 806.1L288.0 806.4L287.0 806.8L286.0 807.1L285.0 807.3L284.0 807.5L283.0 807.9L282.0 808.2L281.0 807.7L280.0 807.4L279.0 807.2L278.0 807.6L277.0 807.3L276.0 807.8L275.0 807.6L274.0 807.7L273.0 807.7L272.0 807.7L271.0 807.4L270.0 807.4L269.0 807.3L268.0 805.8L267.0 804.0L266.0 804.0L265.0 804.0L264.0 804.0L263.0 804.0L262.0 804.0L261.0 804.0L260.0 804.0L259.0 804.0L258.0 804.0L257.0 804.2L256.0 804.4L255.0 804.4L254.0 804.7L253.0 804.8L252.0 804.9L251.0 805.0L250.0 804.9L249.0 804.9L248.0 804.8L247.0 805.0L246.0 805.0L245.0 805.2L244.0 805.2L243.0 804.9L242.0 804.9L241.0 804.9L240.0 805.0L239.0 805.0L238.0 805.0L237.0 805.0L236.0 805.1L235.0 805.2L234.0 805.2L233.0 805.3L232.0 805.2L231.0 805.3L230.0 805.3L229.0 805.1L228.0 805.3L227.0 805.3L226.0 805.3L225.0 805.2L224.0 805.3L223.0 805.2L222.0 805.3L221.0 805.5L220.0 806.1L219.0 806.7L218.0 807.4L217.0 808.4L216.0 809.0L215.0 809.1L214.0 809.3L213.0 810.1L212.0 811.1L211.0 810.6L210.0 811.0L209.0 811.2L208.0 810.0L207.0 809.9L206.0 809.3L205.0 809.8L204.0 810.0L203.0 809.6L202.0 809.3L201.0 810.1L200.0 810.6L199.0 808.8L198.0 805.4L197.0 805.3L196.0 805.1L195.0 804.9L194.0 805.0L193.0 805.0L192.0 805.1L191.0 805.2L190.0 805.4L189.0 805.6L188.0 805.5L187.0 805.4L186.0 805.5L185.0 805.7L184.0 806.0L183.0 806.1L182.0 806.6L181.0 808.0L180.0 809.7L179.0 810.2L178.0 810.4L177.0 810.0L176.0 809.8L175.0 809.2L174.0 808.7L173.0 808.9L172.0 808.3L171.0 808.9L170.0 808.9L169.0 808.8L168.0 808.5L167.0 808.5L166.0 809.5L165.0 809.4L164.0 807.2L163.0 804.0L162.0 804.0L161.0 804.0L160.0 804.0L159.0 804.0L158.0 804.0L157.0 804.0L156.0 804.0L155.0 804.0L154.0 804.0L153.0 804.0L152.0 804.0L151.0 804.0L150.0 804.0L149.0 804.0L148.0 804.0L147.0 804.0L146.0 804.0L145.0 804.0L144.0 804.0L143.0 804.0L142.0 804.0L141.0 804.0L140.0 804.0L139.0 804.0L138.0 804.0L137.0 804.0L136.0 804.0L135.0 804.0L134.0 804.0L133.0 804.0L132.0 804.0L131.0 804.0L130.0 804.0L129.0 804.0L128.0 804.0L127.0 804.0L126.0 804.0L125.0 804.0L124.0 804.0L123.0 804.0L122.0 804.0L121.0 804.0L120.0 804.0L119.0 804.0L118.0 804.0L117.0 804.0L116.0 804.0L115.0 804.0L114.0 804.0L113.0 804.0L112.0 804.0L111.0 804.0L110.0 804.0L109.0 804.0L108.0 804.0L107.0 804.0L106.0 804.0L105.0 804.0L104.0 804.0L103.0 804.0L102.0 804.0L101.0 804.0L100.0 804.0L99.0 804.0L98.0 804.0L97.0 804.0L96.0 804.0L95.0 804.0L94.0 804.0L93.0 804.0L92.0 804.0L91.0 804.0L90.0 804.0L89.0 804.0L88.0 804.0L87.0 804.0L86.0 804.0L85.0 804.0L84.0 804.0L83.0 804.0L82.0 804.0L81.0 804.0L80.0 804.0L79.0 804.0L78.0 804.0L77.0 804.0L76.0 804.0L75.0 804.0L74.0 804.0L73.0 804.0L72.0 804.0L71.0 804.1L70.0 804.3L69.0 804.4L68.0 804.5L67.0 804.6L66.0 804.7L65.0 804.7L64.0 804.7L63.0 804.8L62.0 804.8L61.0 804.8L60.0 804.7L59.0 804.8L58.0 804.6L57.0 804.7L56.0 804.7L55.0 804.7L54.0 804.7L53.0 804.9L52.0 804.9L51.0 804.9L50.0 804.9L49.0 805.1L48.0 805.0L47.0 804.9L46.0 804.8L45.0 804.8L44.0 804.8L43.0 805.0L42.0 805.2L41.0 805.2L40.0 805.1L39.0 805.1L38.0 805.3L37.0 805.3L36.0 805.9L35.0 806.4L34.0 806.5L33.0 806.9L32.0 807.5L31.0 807.9L30.0 808.2L29.0 809.3L28.0 809.2L27.0 809.2L26.0 809.6L25.0 810.0L24.0 810.5L23.0 810.2L22.0 809.9L21.0 809.3L20.0 809.8L19.0 808.7L18.0 808.5L17.0 807.8L16.0 808.0L15.0 808.3L14.0 808.0L13.0 807.6L12.0 805.3L11.0 804.4L10.0 804.2L9.0 804.3L8.0 804.3L7.0 804.4L6.0 804.6L5.0 804.5L4.0 804.7L3.0 804.7L2.0 804.9L1.0 804.9L0.0 804.9Z" fill="#1e1d22"/>
<path d="M0.0 824.1L1.0 824.2L2.0 824.4L3.0 824.5L4.0 824.3L5.0 824.4L6.0 824.4L7.0 824.5L8.0 824.6L9.0 824.7L10.0 824.7L11.0 824.6L12.0 823.9L13.0 822.2L14.0 821.6L15.0 821.5L16.0 821.5L17.0 821.2L18.0 821.0L19.0 820.8L20.0 821.0L21.0 820.5L22.0 819.5L23.0 819.7L24.0 820.1L25.0 819.9L26.0 820.5L27.0 820.4L28.0 820.1L29.0 819.8L30.0 820.8L31.0 821.2L32.0 821.8L33.0 822.2L34.0 822.7L35.0 823.1L36.0 823.7L37.0 824.1L38.0 824.0L39.0 823.9L40.0 823.9L41.0 823.9L42.0 824.0L43.0 824.0L44.0 824.1L45.0 824.1L46.0 824.3L47.0 824.2L48.0 824.1L49.0 824.0L50.0 824.1L51.0 824.1L52.0 824.1L53.0 824.0L54.0 824.0L55.0 824.2L56.0 824.1L57.0 824.1L58.0 824.1L59.0 824.3L60.0 824.2L61.0 824.2L62.0 824.3L63.0 824.3L64.0 824.2L65.0 824.3L66.0 824.4L67.0 824.3L68.0 824.3L69.0 824.4L70.0 824.6L71.0 824.7L72.0 824.7L73.0 824.7L74.0 824.7L75.0 824.7L76.0 824.7L77.0 824.7L78.0 824.7L79.0 824.7L80.0 824.7L81.0 824.7L82.0 824.7L83.0 824.7L84.0 824.7L85.0 824.7L86.0 824.7L87.0 824.7L88.0 824.7L89.0 824.7L90.0 824.7L91.0 824.7L92.0 824.7L93.0 824.7L94.0 824.7L95.0 824.7L96.0 824.7L97.0 824.7L98.0 824.7L99.0 824.7L100.0 824.7L101.0 824.7L102.0 824.7L103.0 824.7L104.0 824.7L105.0 824.7L106.0 824.7L107.0 824.7L108.0 824.7L109.0 824.7L110.0 824.7L111.0 824.7L112.0 824.7L113.0 824.7L114.0 824.7L115.0 824.7L116.0 824.7L117.0 824.7L118.0 824.7L119.0 824.7L120.0 824.7L121.0 824.7L122.0 824.7L123.0 824.7L124.0 824.7L125.0 824.7L126.0 824.7L127.0 824.7L128.0 824.7L129.0 824.7L130.0 824.7L131.0 824.7L132.0 824.7L133.0 824.7L134.0 824.7L135.0 824.7L136.0 824.7L137.0 824.7L138.0 824.7L139.0 824.7L140.0 824.7L141.0 824.7L142.0 824.7L143.0 824.7L144.0 824.7L145.0 824.7L146.0 824.7L147.0 824.7L148.0 824.7L149.0 824.7L150.0 824.7L151.0 824.7L152.0 824.7L153.0 824.7L154.0 824.7L155.0 824.7L156.0 824.7L157.0 824.7L158.0 824.7L159.0 824.7L160.0 824.7L161.0 824.7L162.0 824.7L163.0 824.7L164.0 822.3L165.0 821.2L166.0 820.8L167.0 821.3L168.0 820.6L169.0 820.6L170.0 820.2L171.0 820.7L172.0 820.5L173.0 821.1L174.0 821.2L175.0 820.7L176.0 820.3L177.0 820.4L178.0 820.6L179.0 820.7L180.0 820.9L181.0 821.9L182.0 822.4L183.0 822.8L184.0 823.1L185.0 823.2L186.0 823.5L187.0 823.6L188.0 823.6L189.0 823.6L190.0 823.7L191.0 824.0L192.0 824.0L193.0 824.1L194.0 824.0L195.0 824.1L196.0 824.0L197.0 823.8L198.0 823.7L199.0 820.6L200.0 819.4L201.0 820.1L202.0 820.6L203.0 820.9L204.0 820.6L205.0 820.1L206.0 820.1L207.0 820.2L208.0 820.1L209.0 820.3L210.0 819.8L211.0 819.3L212.0 818.5L213.0 819.5L214.0 820.1L215.0 820.7L216.0 820.6L217.0 821.0L218.0 821.7L219.0 822.8L220.0 823.5L221.0 823.7L222.0 823.6L223.0 823.8L224.0 823.7L225.0 823.9L226.0 823.8L227.0 824.0L228.0 824.0L229.0 824.0L230.0 823.9L231.0 823.8L232.0 824.0L233.0 824.0L234.0 824.0L235.0 824.1L236.0 824.1L237.0 824.1L238.0 824.1L239.0 824.0L240.0 823.9L241.0 824.1L242.0 824.1L243.0 824.1L244.0 824.2L245.0 824.3L246.0 824.2L247.0 824.3L248.0 824.2L249.0 824.3L250.0 824.1L251.0 824.2L252.0 824.3L253.0 824.4L254.0 824.5L255.0 824.3L256.0 824.4L257.0 824.7L258.0 824.7L259.0 824.7L260.0 824.7L261.0 824.7L262.0 824.7L263.0 824.7L264.0 824.7L265.0 824.7L266.0 824.7L267.0 824.7L268.0 823.1L269.0 821.5L270.0 821.3L271.0 821.6L272.0 821.7L273.0 822.3L274.0 821.8L275.0 821.8L276.0 821.5L277.0 821.4L278.0 821.8L279.0 822.0L280.0 822.2L281.0 822.3L282.0 821.9L283.0 822.1L284.0 821.9L285.0 822.3L286.0 822.4L287.0 822.6L288.0 822.9L289.0 823.2L290.0 823.3L291.0 823.5L292.0 823.9L293.0 824.0L294.0 824.2L295.0 824.2L296.0 824.4L297.0 824.4L298.0 824.4L299.0 824.4L300.0 824.5L301.0 824.6L302.0 824.6L303.0 824.7L304.0 824.7L305.0 824.7L306.0 824.7L307.0 824.7L308.0 824.7L309.0 824.7L310.0 824.7L311.0 824.7L312.0 824.7L313.0 824.7L314.0 824.7L315.0 824.7L316.0 824.7L317.0 824.7L318.0 824.7L319.0 824.7L320.0 824.7L321.0 824.7L322.0 824.7L323.0 824.7L324.0 824.7L325.0 824.7L326.0 824.7L327.0 824.7L328.0 824.7L329.0 824.7L330.0 824.7L331.0 824.7L332.0 824.7L333.0 824.7L334.0 824.7L335.0 824.7L336.0 824.7L337.0 824.7L338.0 824.7L339.0 824.7L340.0 824.7L341.0 824.7L342.0 824.7L343.0 824.7L344.0 824.7L345.0 824.7L346.0 824.7L347.0 824.7L348.0 824.7L349.0 822.5L350.0 822.3L351.0 822.1L352.0 821.7L353.0 821.5L354.0 821.6L355.0 821.6L356.0 821.7L357.0 821.8L358.0 821.0L359.0 820.8L360.0 820.9L361.0 820.7L362.0 820.6L363.0 820.9L364.0 820.9L365.0 821.3L366.0 821.4L367.0 821.0L368.0 821.7L369.0 822.5L370.0 823.0L371.0 823.5L372.0 823.7L373.0 823.8L374.0 823.9L375.0 823.9L376.0 824.1L377.0 824.1L378.0 824.0L379.0 823.9L380.0 824.0L381.0 824.1L382.0 824.1L383.0 823.4L384.0 822.3L385.0 821.3L386.0 820.9L387.0 820.3L388.0 820.7L389.0 820.8L390.0 820.8L391.0 820.7L392.0 820.3L393.0 819.9L394.0 819.5L395.0 819.3L396.0 818.9L397.0 819.1L398.0 819.9L399.0 820.3L400.0 820.3L401.0 820.5L402.0 821.5L403.0 822.4L404.0 823.0L405.0 823.2L406.0 823.4L407.0 823.4L408.0 823.6L409.0 823.5L410.0 823.6L411.0 823.7L412.0 823.6L413.0 823.5L414.0 823.5L415.0 823.5L416.0 823.3L417.0 823.6L418.0 823.7L419.0 823.7L420.0 823.7L421.0 823.7L422.0 823.5L423.0 823.7L424.0 823.6L425.0 823.6L426.0 823.8L427.0 823.7L428.0 823.7L429.0 823.7L430.0 823.9L431.0 824.1L432.0 824.0L433.0 823.8L434.0 823.7L435.0 823.8L436.0 823.8L437.0 823.8L438.0 823.9L439.0 824.0L440.0 824.2L441.0 824.4L442.0 824.5L443.0 824.4L444.0 824.4L445.0 824.5L446.0 824.5L447.0 824.6L448.0 824.6L449.0 824.7L450.0 824.7L451.0 824.7L452.0 824.7L453.0 824.7L454.0 824.7L455.0 824.7L456.0 824.7L457.0 824.7L458.0 824.7L459.0 824.7L460.0 824.7L461.0 824.7L462.0 824.7L463.0 824.7L464.0 824.7L465.0 824.7L466.0 824.7L467.0 824.7L468.0 824.7L469.0 824.7L470.0 824.7L471.0 824.7L472.0 824.7L473.0 824.7L474.0 824.7L475.0 824.7L476.0 824.7L477.0 824.7L478.0 824.7L479.0 824.7L480.0 824.7L481.0 824.7L482.0 824.7L483.0 824.7L484.0 824.7L485.0 824.7L486.0 824.7L487.0 824.7L488.0 824.7L489.0 824.7L490.0 824.7L491.0 824.7L492.0 824.7L493.0 824.7L494.0 824.7L495.0 824.7L496.0 824.7L497.0 824.7L498.0 824.7L499.0 824.7L500.0 824.7L501.0 824.7L502.0 824.7L503.0 824.7L504.0 824.7L505.0 824.7L506.0 824.7L507.0 824.7L508.0 824.7L509.0 824.7L510.0 824.7L511.0 824.7L512.0 824.7L513.0 824.7L514.0 824.7L515.0 824.7L516.0 824.7L517.0 824.7L518.0 824.7L519.0 824.7L520.0 824.7L521.0 824.7L522.0 824.7L523.0 824.7L524.0 824.7L525.0 824.7L526.0 824.7L527.0 824.7L528.0 824.7L529.0 824.7L530.0 824.7L531.0 824.7L532.0 824.7L533.0 824.7L534.0 824.7L535.0 822.9L536.0 822.6L537.0 822.7L538.0 822.5L539.0 822.3L540.0 822.4L541.0 822.0L542.0 821.7L543.0 821.5L544.0 821.5L545.0 821.3L546.0 821.3L547.0 821.9L548.0 822.1L549.0 821.8L550.0 821.8L551.0 821.9L552.0 821.8L553.0 821.9L554.0 822.4L555.0 822.8L556.0 823.3L557.0 823.7L558.0 824.0L559.0 824.2L560.0 824.3L561.0 824.3L562.0 824.3L563.0 824.2L564.0 824.3L565.0 824.4L566.0 824.4L567.0 824.4L568.0 824.4L569.0 824.2L570.0 824.0L571.0 822.6L572.0 822.6L573.0 822.1L574.0 821.6L575.0 821.8L576.0 821.7L577.0 821.7L578.0 821.8L579.0 821.7L580.0 821.9L581.0 821.9L582.0 821.8L583.0 821.8L584.0 821.8L585.0 822.2L586.0 822.2L587.0 822.0L588.0 822.4L589.0 822.4L590.0 822.4L591.0 823.3L592.0 823.9L593.0 824.1L594.0 824.0L595.0 824.1L596.0 824.3L597.0 824.4L598.0 824.3L599.0 824.4L600.0 824.4L601.0 824.3L602.0 824.4L603.0 824.4L604.0 824.4L605.0 824.4L606.0 824.5L607.0 824.5L608.0 824.5L609.0 824.5L610.0 824.6L611.0 824.6L612.0 824.6L613.0 824.6L614.0 824.5L615.0 824.4L616.0 824.1L617.0 822.8L618.0 821.6L619.0 820.0L620.0 821.5L621.0 822.7L622.0 823.6L623.0 824.1L624.0 824.1L625.0 824.2L626.0 824.2L627.0 824.3L628.0 824.3L629.0 824.3L630.0 824.3L631.0 824.2L632.0 824.3L633.0 824.3L634.0 824.3L635.0 824.4L636.0 824.4L637.0 824.4L638.0 824.4L639.0 824.4L640.0 824.5L641.0 824.5L642.0 824.5L643.0 824.5L644.0 824.6L645.0 824.6L646.0 824.6L647.0 824.7L648.0 824.7L649.0 824.7L650.0 824.7L651.0 824.7L652.0 824.7L653.0 824.7L654.0 824.7L655.0 824.7L656.0 824.7L657.0 824.4L658.0 824.5L659.0 824.7L660.0 824.7L661.0 824.7L662.0 824.7L663.0 824.7L664.0 824.7L665.0 824.7L666.0 824.7L667.0 824.7L668.0 824.7L669.0 824.7L670.0 824.7L671.0 824.7L672.0 824.7L673.0 824.7L674.0 824.7L675.0 824.7L676.0 824.7L676.0 826.3L675.0 826.3L674.0 826.3L673.0 826.3L672.0 826.3L671.0 826.3L670.0 826.3L669.0 826.3L668.0 826.3L667.0 826.3L666.0 826.3L665.0 826.3L664.0 826.3L663.0 826.3L662.0 826.3L661.0 826.3L660.0 826.3L659.0 826.3L658.0 826.5L657.0 826.6L656.0 826.3L655.0 826.3L654.0 826.3L653.0 826.3L652.0 826.3L651.0 826.3L650.0 826.3L649.0 826.3L648.0 826.3L647.0 826.3L646.0 826.4L645.0 826.4L644.0 826.4L643.0 826.5L642.0 826.5L641.0 826.5L640.0 826.5L639.0 826.6L638.0 826.6L637.0 826.6L636.0 826.6L635.0 826.6L634.0 826.7L633.0 826.7L632.0 826.7L631.0 826.7L630.0 826.7L629.0 826.8L628.0 826.8L627.0 826.7L626.0 826.7L625.0 826.7L624.0 826.7L623.0 826.9L622.0 827.5L621.0 828.5L620.0 829.3L619.0 830.3L618.0 829.0L617.0 828.0L616.0 827.0L615.0 826.6L614.0 826.5L613.0 826.4L612.0 826.4L611.0 826.4L610.0 826.4L609.0 826.5L608.0 826.5L607.0 826.5L606.0 826.5L605.0 826.6L604.0 826.6L603.0 826.6L602.0 826.6L601.0 826.7L600.0 826.7L599.0 826.7L598.0 826.8L597.0 826.7L596.0 826.8L595.0 826.8L594.0 826.9L593.0 826.9L592.0 827.1L591.0 827.7L590.0 828.8L589.0 829.2L588.0 829.1L587.0 829.2L586.0 829.2L585.0 828.7L584.0 829.0L583.0 829.2L582.0 829.2L581.0 829.5L580.0 829.2L579.0 828.9L578.0 828.9L577.0 829.2L576.0 829.1L575.0 829.2L574.0 829.3L573.0 829.1L572.0 829.3L571.0 828.9L570.0 827.1L569.0 826.7L568.0 826.6L567.0 826.6L566.0 826.6L565.0 826.6L564.0 826.7L563.0 826.5L562.0 826.6L561.0 826.7L560.0 826.7L559.0 826.8L558.0 826.9L557.0 827.2L556.0 827.7L555.0 828.2L554.0 828.4L553.0 828.5L552.0 828.7L551.0 828.9L550.0 829.2L549.0 829.3L548.0 829.4L547.0 829.2L546.0 829.7L545.0 829.5L544.0 829.2L543.0 828.9L542.0 828.9L541.0 828.9L540.0 829.2L539.0 829.3L538.0 828.6L537.0 828.3L536.0 828.4L535.0 828.2L534.0 826.3L533.0 826.3L532.0 826.3L531.0 826.3L530.0 826.3L529.0 826.3L528.0 826.3L527.0 826.3L526.0 826.3L525.0 826.3L524.0 826.3L523.0 826.3L522.0 826.3L521.0 826.3L520.0 826.3L519.0 826.3L518.0 826.3L517.0 826.3L516.0 826.3L515.0 826.3L514.0 826.3L513.0 826.3L512.0 826.3L511.0 826.3L510.0 826.3L509.0 826.3L508.0 826.3L507.0 826.3L506.0 826.3L505.0 826.3L504.0 826.3L503.0 826.3L502.0 826.3L501.0 826.3L500.0 826.3L499.0 826.3L498.0 826.3L497.0 826.3L496.0 826.3L495.0 826.3L494.0 826.3L493.0 826.3L492.0 826.3L491.0 826.3L490.0 826.3L489.0 826.3L488.0 826.3L487.0 826.3L486.0 826.3L485.0 826.3L484.0 826.3L483.0 826.3L482.0 826.3L481.0 826.3L480.0 826.3L479.0 826.3L478.0 826.3L477.0 826.3L476.0 826.3L475.0 826.3L474.0 826.3L473.0 826.3L472.0 826.3L471.0 826.3L470.0 826.3L469.0 826.3L468.0 826.3L467.0 826.3L466.0 826.3L465.0 826.3L464.0 826.3L463.0 826.3L462.0 826.3L461.0 826.3L460.0 826.3L459.0 826.3L458.0 826.3L457.0 826.3L456.0 826.3L455.0 826.3L454.0 826.3L453.0 826.3L452.0 826.3L451.0 826.3L450.0 826.3L449.0 826.3L448.0 826.4L447.0 826.4L446.0 826.5L445.0 826.5L444.0 826.6L443.0 826.6L442.0 826.6L441.0 826.7L440.0 826.9L439.0 826.9L438.0 827.1L437.0 827.2L436.0 827.1L435.0 827.2L434.0 827.0L433.0 827.0L432.0 827.0L431.0 827.1L430.0 827.3L429.0 827.3L428.0 827.3L427.0 827.3L426.0 827.3L425.0 827.3L424.0 827.3L423.0 827.2L422.0 827.2L421.0 827.2L420.0 827.3L419.0 827.2L418.0 827.2L417.0 827.3L416.0 827.2L415.0 827.5L414.0 827.5L413.0 827.6L412.0 827.7L411.0 827.7L410.0 827.6L409.0 827.6L408.0 827.7L407.0 827.7L406.0 827.7L405.0 827.7L404.0 828.1L403.0 829.1L402.0 830.0L401.0 830.6L400.0 830.5L399.0 830.4L398.0 831.0L397.0 831.9L396.0 832.3L395.0 831.6L394.0 831.1L393.0 830.3L392.0 830.4L391.0 830.4L390.0 829.9L389.0 830.2L388.0 830.2L387.0 830.3L386.0 829.8L385.0 829.4L384.0 828.5L383.0 827.4L382.0 826.8L381.0 826.8L380.0 826.9L379.0 827.1L378.0 827.0L377.0 827.0L376.0 826.9L375.0 827.0L374.0 827.2L373.0 827.2L372.0 827.5L371.0 827.6L370.0 828.1L369.0 828.4L368.0 829.0L367.0 829.6L366.0 829.9L365.0 829.9L364.0 829.8L363.0 830.3L362.0 829.9L361.0 829.5L360.0 829.4L359.0 829.6L358.0 829.6L357.0 829.6L356.0 829.6L355.0 829.6L354.0 829.5L353.0 829.2L352.0 829.3L351.0 829.2L350.0 828.9L349.0 828.7L348.0 826.3L347.0 826.3L346.0 826.3L345.0 826.3L344.0 826.3L343.0 826.3L342.0 826.3L341.0 826.3L340.0 826.3L339.0 826.3L338.0 826.3L337.0 826.3L336.0 826.3L335.0 826.3L334.0 826.3L333.0 826.3L332.0 826.3L331.0 826.3L330.0 826.3L329.0 826.3L328.0 826.3L327.0 826.3L326.0 826.3L325.0 826.3L324.0 826.3L323.0 826.3L322.0 826.3L321.0 826.3L320.0 826.3L319.0 826.3L318.0 826.3L317.0 826.3L316.0 826.3L315.0 826.3L314.0 826.3L313.0 826.3L312.0 826.3L311.0 826.3L310.0 826.3L309.0 826.3L308.0 826.3L307.0 826.3L306.0 826.3L305.0 826.3L304.0 826.3L303.0 826.3L302.0 826.4L301.0 826.4L300.0 826.5L299.0 826.6L298.0 826.6L297.0 826.5L296.0 826.6L295.0 826.7L294.0 826.8L293.0 827.0L292.0 827.0L291.0 827.3L290.0 827.5L289.0 827.8L288.0 828.0L287.0 828.4L286.0 828.5L285.0 828.8L284.0 828.8L283.0 829.0L282.0 828.7L281.0 828.9L280.0 828.9L279.0 829.1L278.0 829.4L277.0 829.2L276.0 829.1L275.0 829.3L274.0 829.3L273.0 829.6L272.0 829.5L271.0 829.0L270.0 828.8L269.0 829.0L268.0 827.5L267.0 826.3L266.0 826.3L265.0 826.3L264.0 826.3L263.0 826.3L262.0 826.3L261.0 826.3L260.0 826.3L259.0 826.3L258.0 826.3L257.0 826.3L256.0 826.6L255.0 826.7L254.0 826.6L253.0 826.7L252.0 826.7L251.0 826.7L250.0 826.7L249.0 826.8L248.0 826.8L247.0 826.8L246.0 826.9L245.0 826.9L244.0 826.9L243.0 826.8L242.0 826.8L241.0 826.9L240.0 826.9L239.0 826.8L238.0 826.8L237.0 826.9L236.0 827.0L235.0 827.0L234.0 827.0L233.0 827.0L232.0 827.1L231.0 827.3L230.0 827.2L229.0 827.2L228.0 827.2L227.0 827.1L226.0 827.0L225.0 827.1L224.0 827.1L223.0 827.1L222.0 827.2L221.0 827.3L220.0 827.7L219.0 828.3L218.0 829.0L217.0 829.9L216.0 830.3L215.0 830.3L214.0 830.7L213.0 831.6L212.0 832.1L211.0 832.0L210.0 831.2L209.0 830.5L208.0 830.6L207.0 830.9L206.0 831.1L205.0 830.7L204.0 830.9L203.0 830.4L202.0 830.3L201.0 831.1L200.0 831.5L199.0 830.0L198.0 827.0L197.0 827.0L196.0 827.0L195.0 826.9L194.0 826.8L193.0 826.9L192.0 826.9L191.0 827.0L190.0 827.1L189.0 827.2L188.0 827.3L187.0 827.1L186.0 827.4L185.0 827.5L184.0 827.8L183.0 828.1L182.0 828.3L181.0 829.6L180.0 830.2L179.0 830.6L178.0 830.3L177.0 830.6L176.0 830.5L175.0 830.3L174.0 830.2L173.0 830.4L172.0 830.4L171.0 830.4L170.0 830.3L169.0 829.7L168.0 829.7L167.0 829.7L166.0 829.9L165.0 830.1L164.0 828.7L163.0 826.3L162.0 826.3L161.0 826.3L160.0 826.3L159.0 826.3L158.0 826.3L157.0 826.3L156.0 826.3L155.0 826.3L154.0 826.3L153.0 826.3L152.0 826.3L151.0 826.3L150.0 826.3L149.0 826.3L148.0 826.3L147.0 826.3L146.0 826.3L145.0 826.3L144.0 826.3L143.0 826.3L142.0 826.3L141.0 826.3L140.0 826.3L139.0 826.3L138.0 826.3L137.0 826.3L136.0 826.3L135.0 826.3L134.0 826.3L133.0 826.3L132.0 826.3L131.0 826.3L130.0 826.3L129.0 826.3L128.0 826.3L127.0 826.3L126.0 826.3L125.0 826.3L124.0 826.3L123.0 826.3L122.0 826.3L121.0 826.3L120.0 826.3L119.0 826.3L118.0 826.3L117.0 826.3L116.0 826.3L115.0 826.3L114.0 826.3L113.0 826.3L112.0 826.3L111.0 826.3L110.0 826.3L109.0 826.3L108.0 826.3L107.0 826.3L106.0 826.3L105.0 826.3L104.0 826.3L103.0 826.3L102.0 826.3L101.0 826.3L100.0 826.3L99.0 826.3L98.0 826.3L97.0 826.3L96.0 826.3L95.0 826.3L94.0 826.3L93.0 826.3L92.0 826.3L91.0 826.3L90.0 826.3L89.0 826.3L88.0 826.3L87.0 826.3L86.0 826.3L85.0 826.3L84.0 826.3L83.0 826.3L82.0 826.3L81.0 826.3L80.0 826.3L79.0 826.3L78.0 826.3L77.0 826.3L76.0 826.3L75.0 826.3L74.0 826.3L73.0 826.3L72.0 826.3L71.0 826.3L70.0 826.4L69.0 826.6L68.0 826.6L67.0 826.6L66.0 826.8L65.0 826.7L64.0 826.6L63.0 826.7L62.0 826.6L61.0 826.7L60.0 826.7L59.0 826.7L58.0 826.8L57.0 826.8L56.0 826.7L55.0 826.8L54.0 826.8L53.0 826.8L52.0 826.8L51.0 826.7L50.0 826.8L49.0 826.9L48.0 826.9L47.0 826.8L46.0 826.8L45.0 826.7L44.0 826.8L43.0 826.8L42.0 826.9L41.0 826.9L40.0 826.9L39.0 826.9L38.0 827.0L37.0 826.9L36.0 827.2L35.0 827.6L34.0 827.9L33.0 828.4L32.0 829.2L31.0 829.6L30.0 829.9L29.0 830.1L28.0 830.4L27.0 830.6L26.0 831.0L25.0 831.1L24.0 831.2L23.0 830.7L22.0 830.1L21.0 830.1L20.0 829.9L19.0 830.0L18.0 829.7L17.0 829.8L16.0 829.4L15.0 829.3L14.0 828.9L13.0 828.5L12.0 827.0L11.0 826.4L10.0 826.3L9.0 826.3L8.0 826.4L7.0 826.5L6.0 826.6L5.0 826.6L4.0 826.7L3.0 826.7L2.0 826.8L1.0 826.8L0.0 826.7Z" fill="#1e1d22"/>
<rect x="-2.00" y="840.40" width="306.50" height="21.00" fill="#ffa374" />
<rect x="-2.00" y="865.30" width="863.00" height="21.10" fill="#ff94a6" />
<polygon points="616,865.3000000000001 676.3,865.3000000000001 676.3,886.4" fill="rgba(150,40,60,0.14)"/>
<polygon points="768,865.3000000000001 861.0,865.3000000000001 861.0,877.3000000000001" fill="rgba(150,40,60,0.17)"/>
<line x1="676.30" y1="865.30" x2="676.30" y2="886.40" stroke="rgba(120,40,60,0.6)" stroke-width="1" />
<rect x="-2.00" y="889.40" width="4.00" height="91.80" fill="#ff94a6" />
<rect x="305.10" y="890.60" width="69.40" height="90.60" fill="#ff94a6" />
<polygon points="305.1,911.9 338.1,911.9 321.1,940.6 311.1,969.2 305.1,981.2" fill="rgba(150,40,60,0.11)"/>
<line x1="305.10" y1="911.90" x2="374.50" y2="911.90" stroke="rgba(120,30,50,0.4)" stroke-width="1" />
<clipPath id="dc305"><rect x="305.1" y="890.6" width="69.39999999999998" height="90.60000000000002"/></clipPath>
<g clip-path="url(#dc305)">
<path d="M305.1 929.1L306.0 929.1L306.9 929.1L307.8 929.0L308.7 928.8L309.6 928.7L310.5 928.6L311.4 928.4L312.3 928.2L313.2 928.1L314.1 928.0L315.0 927.8L315.9 927.8L316.8 927.6L317.7 927.2L318.6 926.8L319.5 926.4L320.4 925.8L321.3 925.8L322.2 925.5L323.1 925.2L324.0 925.4L324.9 925.4L325.8 925.3L326.7 925.2L327.6 924.9L328.5 924.1L329.4 923.7L330.3 923.4L331.2 922.9L332.1 922.5L333.0 922.3L333.9 921.9L334.8 921.5L335.7 920.9L336.6 920.6L337.5 920.8L338.4 921.9L339.3 922.6L340.2 922.7L341.1 923.0L342.0 923.3L342.9 923.5L343.8 923.4L344.7 923.5L345.6 923.1L346.5 922.9L347.4 923.0L348.3 923.3L349.2 923.6L350.1 923.8L351.0 923.9L351.9 924.3L352.8 924.3L353.7 923.9L354.6 922.9L355.5 922.1L356.4 921.5L357.3 921.9L358.2 921.9L359.1 922.5L360.0 922.3L360.9 922.7L361.8 923.7L362.7 924.1L363.6 924.4L364.5 924.6L365.4 924.5L366.3 924.3L367.2 924.0L368.1 923.8L369.0 923.8L369.9 923.4L370.8 923.3L371.7 923.5L372.6 923.9L373.5 924.1L374.4 925.2L374.4 934.9L373.5 935.8L372.6 935.9L371.7 935.8L370.8 935.9L369.9 936.4L369.0 936.5L368.1 936.5L367.2 936.1L366.3 936.0L365.4 935.3L364.5 935.0L363.6 935.2L362.7 935.4L361.8 935.9L360.9 937.1L360.0 937.9L359.1 937.9L358.2 938.1L357.3 937.7L356.4 937.6L355.5 937.0L354.6 936.3L353.7 935.5L352.8 935.1L351.9 935.6L351.0 936.4L350.1 936.8L349.2 936.5L348.3 935.6L347.4 935.2L346.5 935.2L345.6 935.7L344.7 936.1L343.8 936.2L342.9 935.7L342.0 935.3L341.1 935.0L340.2 935.4L339.3 935.9L338.4 937.0L337.5 937.8L336.6 938.8L335.7 938.1L334.8 937.6L333.9 937.1L333.0 936.3L332.1 935.2L331.2 935.5L330.3 935.4L329.4 935.8L328.5 935.3L327.6 935.4L326.7 935.1L325.8 934.7L324.9 934.3L324.0 933.8L323.1 933.5L322.2 933.4L321.3 933.6L320.4 933.4L319.5 933.1L318.6 932.7L317.7 932.3L316.8 932.0L315.9 932.0L315.0 932.0L314.1 931.9L313.2 931.6L312.3 931.4L311.4 931.3L310.5 931.0L309.6 930.9L308.7 930.8L307.8 930.6L306.9 930.5L306.0 930.4L305.1 930.4Z" fill="#1e1d22"/>
<path d="M305.1 963.9L306.0 963.9L306.9 963.8L307.8 963.7L308.7 963.5L309.6 963.4L310.5 963.5L311.4 963.3L312.3 963.1L313.2 962.9L314.1 962.8L315.0 962.5L315.9 962.2L316.8 961.9L317.7 961.5L318.6 961.3L319.5 960.8L320.4 960.6L321.3 960.3L322.2 960.4L323.1 960.2L324.0 959.9L324.9 959.3L325.8 959.1L326.7 958.8L327.6 959.1L328.5 959.2L329.4 959.3L330.3 958.8L331.2 958.5L332.1 958.1L333.0 957.6L333.9 957.1L334.8 956.8L335.7 955.8L336.6 955.2L337.5 954.8L338.4 954.1L339.3 955.7L340.2 957.0L341.1 958.5L342.0 958.8L342.9 958.8L343.8 958.8L344.7 958.9L345.6 959.0L346.5 958.6L347.4 958.8L348.3 958.7L349.2 958.1L350.1 957.9L351.0 957.5L351.9 956.9L352.8 956.0L353.7 956.4L354.6 956.8L355.5 957.5L356.4 958.1L357.3 957.5L358.2 956.7L359.1 955.9L360.0 955.5L360.9 955.1L361.8 954.4L362.7 954.8L363.6 955.1L364.5 955.4L365.4 955.9L366.3 956.3L367.2 956.7L368.1 957.1L369.0 957.3L369.9 957.5L370.8 957.8L371.7 958.0L372.6 958.4L373.5 958.8L374.4 959.3L374.4 969.9L373.5 970.8L372.6 970.9L371.7 971.3L370.8 971.7L369.9 971.2L369.0 970.8L368.1 970.5L367.2 971.1L366.3 971.4L365.4 972.5L364.5 973.2L363.6 973.8L362.7 974.5L361.8 974.6L360.9 974.0L360.0 972.6L359.1 971.8L358.2 972.2L357.3 972.2L356.4 972.3L355.5 972.7L354.6 972.6L353.7 973.0L352.8 972.8L351.9 972.3L351.0 971.9L350.1 971.8L349.2 971.4L348.3 971.2L347.4 971.3L346.5 970.9L345.6 970.8L344.7 970.9L343.8 970.6L342.9 970.9L342.0 971.6L341.1 971.9L340.2 972.6L339.3 973.0L338.4 972.8L337.5 973.0L336.6 972.8L335.7 972.7L334.8 972.4L333.9 971.9L333.0 971.3L332.1 970.6L331.2 970.6L330.3 970.7L329.4 970.7L328.5 970.6L327.6 970.5L326.7 970.2L325.8 970.0L324.9 969.6L324.0 969.2L323.1 968.6L322.2 968.7L321.3 968.5L320.4 968.5L319.5 968.2L318.6 968.0L317.7 967.7L316.8 967.3L315.9 966.8L315.0 966.5L314.1 966.1L313.2 965.9L312.3 965.8L311.4 965.6L310.5 965.4L309.6 965.6L308.7 965.5L307.8 965.3L306.9 965.2L306.0 965.1L305.1 965.1Z" fill="#1e1d22"/>
</g>
<rect x="676.00" y="890.60" width="69.40" height="90.60" fill="#ff94a6" />
<polygon points="676.0,911.9 709.0,911.9 692.0,940.6 682.0,969.2 676.0,981.2" fill="rgba(150,40,60,0.11)"/>
<line x1="676.00" y1="911.90" x2="745.40" y2="911.90" stroke="rgba(120,30,50,0.4)" stroke-width="1" />
<clipPath id="dc676"><rect x="676.0" y="890.6" width="69.39999999999998" height="90.60000000000002"/></clipPath>
<g clip-path="url(#dc676)">
<path d="M676.0 929.1L676.9 929.1L677.8 929.1L678.7 929.0L679.6 928.8L680.5 928.7L681.4 928.6L682.3 928.4L683.2 928.1L684.1 928.0L685.0 927.6L685.9 927.6L686.8 927.4L687.7 927.1L688.6 927.0L689.5 926.8L690.4 926.6L691.3 926.3L692.2 925.9L693.1 925.4L694.0 925.0L694.9 924.8L695.8 924.9L696.7 925.0L697.6 924.7L698.5 924.6L699.4 924.7L700.3 924.2L701.2 923.8L702.1 923.0L703.0 922.0L703.9 922.0L704.8 921.1L705.7 921.0L706.6 920.8L707.5 920.6L708.4 921.6L709.3 923.0L710.2 923.7L711.1 924.6L712.0 925.1L712.9 925.3L713.8 925.2L714.7 924.9L715.6 924.9L716.5 924.8L717.4 924.8L718.3 924.3L719.2 924.3L720.1 924.5L721.0 924.4L721.9 924.4L722.8 924.0L723.7 924.1L724.6 923.6L725.5 923.4L726.4 923.2L727.3 922.8L728.2 921.9L729.1 921.1L730.0 919.9L730.9 919.6L731.8 920.7L732.7 921.7L733.6 922.5L734.5 923.1L735.4 923.1L736.3 923.2L737.2 923.5L738.1 923.5L739.0 923.4L739.9 923.7L740.8 924.0L741.7 923.9L742.6 924.2L743.5 924.2L744.4 924.4L745.3 925.3L745.3 935.0L744.4 936.1L743.5 936.3L742.6 936.6L741.7 936.5L740.8 936.3L739.9 936.2L739.0 936.0L738.1 936.0L737.2 936.1L736.3 936.1L735.4 936.0L734.5 936.0L733.6 936.0L732.7 936.6L731.8 937.7L730.9 938.9L730.0 938.8L729.1 938.1L728.2 937.3L727.3 936.9L726.4 936.6L725.5 936.9L724.6 936.5L723.7 936.5L722.8 936.7L721.9 936.4L721.0 936.4L720.1 936.2L719.2 936.4L718.3 936.4L717.4 936.5L716.5 936.6L715.6 936.4L714.7 936.5L713.8 936.2L712.9 935.8L712.0 935.8L711.1 936.3L710.2 937.3L709.3 938.1L708.4 939.0L707.5 938.9L706.6 938.0L705.7 936.9L704.8 936.8L703.9 936.9L703.0 937.0L702.1 936.5L701.2 935.8L700.3 935.5L699.4 935.3L698.5 935.1L697.6 934.7L696.7 934.6L695.8 934.4L694.9 934.0L694.0 933.9L693.1 933.9L692.2 933.9L691.3 933.9L690.4 933.5L689.5 933.1L688.6 932.6L687.7 932.3L686.8 932.3L685.9 932.1L685.0 932.1L684.1 931.7L683.2 931.5L682.3 931.1L681.4 930.9L680.5 930.9L679.6 930.8L678.7 930.6L677.8 930.5L676.9 930.4L676.0 930.4Z" fill="#1e1d22"/>
<path d="M676.0 963.9L676.9 963.9L677.8 963.8L678.7 963.7L679.6 963.5L680.5 963.4L681.4 963.2L682.3 963.0L683.2 962.7L684.1 962.5L685.0 962.4L685.9 962.3L686.8 962.3L687.7 962.3L688.6 962.1L689.5 961.8L690.4 961.4L691.3 960.9L692.2 960.4L693.1 959.9L694.0 959.5L694.9 959.2L695.8 958.9L696.7 958.5L697.6 958.5L698.5 958.5L699.4 958.8L700.3 958.6L701.2 958.1L702.1 957.8L703.0 957.2L703.9 957.4L704.8 957.0L705.7 956.7L706.6 956.2L707.5 955.4L708.4 954.3L709.3 954.0L710.2 955.2L711.1 956.9L712.0 958.4L712.9 958.7L713.8 959.1L714.7 959.2L715.6 958.8L716.5 958.4L717.4 957.8L718.3 957.8L719.2 957.5L720.1 957.9L721.0 958.2L721.9 957.4L722.8 956.3L723.7 955.3L724.6 955.2L725.5 955.6L726.4 956.0L727.3 956.5L728.2 956.6L729.1 956.0L730.0 956.1L730.9 955.4L731.8 954.9L732.7 954.6L733.6 955.1L734.5 955.6L735.4 956.0L736.3 956.4L737.2 956.3L738.1 956.4L739.0 956.3L739.9 956.8L740.8 957.4L741.7 958.0L742.6 958.0L743.5 957.8L744.4 957.9L745.3 958.9L745.3 970.3L744.4 971.2L743.5 971.3L742.6 971.0L741.7 971.2L740.8 971.7L739.9 972.1L739.0 972.4L738.1 972.1L737.2 971.5L736.3 971.1L735.4 971.5L734.5 972.6L733.6 973.9L732.7 975.1L731.8 974.3L730.9 973.4L730.0 973.0L729.1 972.2L728.2 971.6L727.3 971.7L726.4 971.6L725.5 972.4L724.6 972.8L723.7 973.1L722.8 973.2L721.9 972.9L721.0 972.7L720.1 972.6L719.2 972.0L718.3 971.9L717.4 971.6L716.5 971.4L715.6 971.1L714.7 970.6L713.8 971.0L712.9 970.9L712.0 971.0L711.1 972.5L710.2 973.5L709.3 975.0L708.4 974.3L707.5 973.0L706.6 971.9L705.7 971.6L704.8 971.7L703.9 971.9L703.0 972.5L702.1 971.4L701.2 970.2L700.3 969.5L699.4 969.2L698.5 969.3L697.6 969.6L696.7 969.8L695.8 969.3L694.9 969.1L694.0 968.9L693.1 968.6L692.2 968.3L691.3 968.2L690.4 967.9L689.5 967.7L688.6 967.4L687.7 967.3L686.8 967.0L685.9 966.7L685.0 966.6L684.1 966.3L683.2 966.2L682.3 965.9L681.4 965.7L680.5 965.6L679.6 965.5L678.7 965.3L677.8 965.2L676.9 965.1L676.0 965.1Z" fill="#1e1d22"/>
</g>
<rect x="-2.00" y="984.20" width="306.50" height="21.00" fill="#d86ce4" />
<rect x="0.00" y="1006.30" width="861.00" height="2.00" fill="#23252d" />
<rect x="0.00" y="1061.30" width="861.00" height="2.00" fill="#23252d" />
<rect x="0.00" y="1087.00" width="863.00" height="1.50" fill="#23252d" />
<rect x="0.00" y="1088.50" width="1170.00" height="28.50" fill="#2b2d38" />
<line x1="13.90" y1="1089.50" x2="13.90" y2="1099.50" stroke="#7b7d88" stroke-width="1" />
<text x="17.90" y="1103.70" font-family='"Liberation Sans", sans-serif' font-size="12" font-weight="bold" fill="#8e909a" text-anchor="start" letter-spacing="0.9" >1:18</text>
<rect x="47.09" y="1089.50" width="1.40" height="1.60" fill="#6b6d78" />
<rect x="80.98" y="1089.50" width="1.40" height="1.60" fill="#6b6d78" />
<rect x="114.86" y="1089.50" width="1.40" height="1.60" fill="#6b6d78" />
<line x1="149.45" y1="1089.50" x2="149.45" y2="1099.50" stroke="#7b7d88" stroke-width="1" />
<text x="153.45" y="1103.70" font-family='"Liberation Sans", sans-serif' font-size="12" font-weight="bold" fill="#8e909a" text-anchor="start" letter-spacing="0.9" >1:20</text>
<rect x="182.64" y="1089.50" width="1.40" height="1.60" fill="#6b6d78" />
<rect x="216.53" y="1089.50" width="1.40" height="1.60" fill="#6b6d78" />
<rect x="250.41" y="1089.50" width="1.40" height="1.60" fill="#6b6d78" />
<line x1="285.00" y1="1089.50" x2="285.00" y2="1099.50" stroke="#7b7d88" stroke-width="1" />
<text x="289.00" y="1103.70" font-family='"Liberation Sans", sans-serif' font-size="12" font-weight="bold" fill="#8e909a" text-anchor="start" letter-spacing="0.9" >1:22</text>
<rect x="318.19" y="1089.50" width="1.40" height="1.60" fill="#6b6d78" />
<rect x="352.07" y="1089.50" width="1.40" height="1.60" fill="#6b6d78" />
<rect x="385.96" y="1089.50" width="1.40" height="1.60" fill="#6b6d78" />
<line x1="420.55" y1="1089.50" x2="420.55" y2="1099.50" stroke="#7b7d88" stroke-width="1" />
<text x="424.55" y="1103.70" font-family='"Liberation Sans", sans-serif' font-size="12" font-weight="bold" fill="#8e909a" text-anchor="start" letter-spacing="0.9" >1:24</text>
<rect x="453.74" y="1089.50" width="1.40" height="1.60" fill="#6b6d78" />
<rect x="487.63" y="1089.50" width="1.40" height="1.60" fill="#6b6d78" />
<rect x="521.51" y="1089.50" width="1.40" height="1.60" fill="#6b6d78" />
<line x1="556.10" y1="1089.50" x2="556.10" y2="1099.50" stroke="#7b7d88" stroke-width="1" />
<text x="560.10" y="1103.70" font-family='"Liberation Sans", sans-serif' font-size="12" font-weight="bold" fill="#8e909a" text-anchor="start" letter-spacing="0.9" >1:26</text>
<rect x="589.29" y="1089.50" width="1.40" height="1.60" fill="#6b6d78" />
<rect x="623.17" y="1089.50" width="1.40" height="1.60" fill="#6b6d78" />
<rect x="657.06" y="1089.50" width="1.40" height="1.60" fill="#6b6d78" />
<line x1="691.65" y1="1089.50" x2="691.65" y2="1099.50" stroke="#7b7d88" stroke-width="1" />
<text x="695.65" y="1103.70" font-family='"Liberation Sans", sans-serif' font-size="12" font-weight="bold" fill="#8e909a" text-anchor="start" letter-spacing="0.9" >1:28</text>
<rect x="724.84" y="1089.50" width="1.40" height="1.60" fill="#6b6d78" />
<rect x="758.72" y="1089.50" width="1.40" height="1.60" fill="#6b6d78" />
<rect x="792.61" y="1089.50" width="1.40" height="1.60" fill="#6b6d78" />
<line x1="827.20" y1="1089.50" x2="827.20" y2="1099.50" stroke="#7b7d88" stroke-width="1" />
<text x="831.20" y="1103.70" font-family='"Liberation Sans", sans-serif' font-size="12" font-weight="bold" fill="#8e909a" text-anchor="start" letter-spacing="0.9" >1:30</text>
<text x="821.00" y="1083.20" font-family='"Liberation Sans", sans-serif' font-size="21" font-weight="bold" fill="#777a85" text-anchor="start" letter-spacing="2.4" >1/2</text>
<rect x="0.00" y="1117.00" width="1170.00" height="48.00" fill="#282a34" />
<rect x="0.00" y="1128.50" width="592.00" height="25.50" fill="#2e303b" rx="2"/>
<rect x="603.00" y="1128.50" width="24.00" height="25.50" fill="#2e303b" rx="2"/>
<path d="M611 1136.5v10l8.5-5z" fill="#c3c5ce"/>
<rect x="628.00" y="1128.50" width="271.00" height="25.50" fill="#2b2d38" />
<rect x="628.00" y="1128.50" width="65.00" height="25.50" fill="#30323d" />
<line x1="630.00" y1="1134.30" x2="898.00" y2="1134.30" stroke="#1b1c23" stroke-width="1.0" />
<ellipse cx="648" cy="1134.3" rx="3.8" ry="2.1" fill="#1b1c23"/>
<ellipse cx="660.8" cy="1134.3" rx="3.8" ry="2.1" fill="#1b1c23"/>
<ellipse cx="714.6" cy="1134.3" rx="3.8" ry="2.1" fill="#1b1c23"/>
<ellipse cx="727.4" cy="1134.3" rx="3.8" ry="2.1" fill="#1b1c23"/>
<ellipse cx="780" cy="1134.3" rx="3.8" ry="2.1" fill="#1b1c23"/>
<ellipse cx="792.8" cy="1134.3" rx="3.8" ry="2.1" fill="#1b1c23"/>
<ellipse cx="846.7" cy="1134.3" rx="3.8" ry="2.1" fill="#1b1c23"/>
<ellipse cx="859.5" cy="1134.3" rx="3.8" ry="2.1" fill="#1b1c23"/>
<line x1="630.00" y1="1147.40" x2="898.00" y2="1147.40" stroke="#1b1c23" stroke-width="1.0" />
<ellipse cx="648" cy="1147.4" rx="3.8" ry="2.1" fill="#1b1c23"/>
<ellipse cx="660.8" cy="1147.4" rx="3.8" ry="2.1" fill="#1b1c23"/>
<ellipse cx="714.6" cy="1147.4" rx="3.8" ry="2.1" fill="#1b1c23"/>
<ellipse cx="727.4" cy="1147.4" rx="3.8" ry="2.1" fill="#1b1c23"/>
<ellipse cx="780" cy="1147.4" rx="3.8" ry="2.1" fill="#1b1c23"/>
<ellipse cx="792.8" cy="1147.4" rx="3.8" ry="2.1" fill="#1b1c23"/>
<ellipse cx="846.7" cy="1147.4" rx="3.8" ry="2.1" fill="#1b1c23"/>
<ellipse cx="859.5" cy="1147.4" rx="3.8" ry="2.1" fill="#1b1c23"/>
<rect x="906.00" y="1128.50" width="24.00" height="25.50" fill="#2e303b" rx="2"/>
<path d="M914 1136.5v10l8.5-5z" fill="#c3c5ce"/>
<rect x="932.50" y="1128.50" width="56.00" height="25.50" fill="#2e303b" rx="2"/>
<text x="939.50" y="1146.00" font-family='"Liberation Sans", sans-serif' font-size="12.5" font-weight="bold" fill="#d5d7de" text-anchor="start" >Vocals</text>
<rect x="990.00" y="1129.50" width="55.00" height="24.00" fill="#343743" />
<rect x="998.00" y="1131.50" width="29.00" height="14.50" fill="#1f2129" />
<rect x="1028.50" y="1131.50" width="14.00" height="20.00" fill="#3a3e4a" />
<rect x="1046.50" y="1129.50" width="50.50" height="24.00" fill="#343743" />
<rect x="1062.80" y="1132.00" width="24.50" height="20.50" fill="#20232a" />
<rect x="1046.50" y="1138.00" width="14.00" height="14.00" fill="#2a2d37" />
<rect x="1047.50" y="1133.50" width="6.50" height="2.20" fill="#d9984c" />
<rect x="1057.00" y="1133.50" width="6.50" height="2.20" fill="#d9984c" />
<rect x="1089.00" y="1133.00" width="6.50" height="2.20" fill="#d9984c" />
<rect x="1047.50" y="1138.00" width="6.50" height="2.20" fill="#d9984c" />
<rect x="1057.00" y="1138.00" width="6.50" height="2.20" fill="#d9984c" />
<rect x="1000.00" y="1147.50" width="5.00" height="1.50" fill="#8c7a58" />
<rect x="1012.00" y="1148.50" width="5.00" height="1.50" fill="#8c7a58" />
<rect x="1021.00" y="1147.50" width="5.00" height="1.50" fill="#8c7a58" />
<rect x="1089.00" y="1136.00" width="7.00" height="1.00" fill="#4a4e5b" />
<rect x="1089.00" y="1141.00" width="7.00" height="1.00" fill="#4a4e5b" />
<rect x="1089.00" y="1146.00" width="7.00" height="1.00" fill="#4a4e5b" />
<rect x="1089.00" y="1151.00" width="7.00" height="1.00" fill="#4a4e5b" />
<path d="M1120.5 1136v14M1125.4 1130v20M1131 1136v14M1136.7 1133v17" stroke="#40434f" stroke-width="2"/>
<path d="M1147 1138.7h7.5l-3.75 6z" fill="#40434f"/>
<rect x="0.00" y="1165.00" width="1170.00" height="10.00" fill="#000" />
<line x1="304.50" y1="126.00" x2="304.50" y2="1100.00" stroke="#9e9fa8" stroke-width="1.3" />
<line x1="180.50" y1="166.00" x2="180.50" y2="1087.50" stroke="#ffffff" stroke-width="1.5" />
<line x1="180.50" y1="168.20" x2="180.50" y2="282.80" stroke="#15161d" stroke-width="1.6" />
<line x1="180.50" y1="284.60" x2="180.50" y2="398.80" stroke="#15161d" stroke-width="1.6" />
<line x1="180.50" y1="400.80" x2="180.50" y2="515.30" stroke="#15161d" stroke-width="1.6" />
<line x1="180.50" y1="517.10" x2="180.50" y2="630.30" stroke="#15161d" stroke-width="1.6" />
<line x1="180.50" y1="700.40" x2="180.50" y2="767.80" stroke="#15161d" stroke-width="1.6" />
<line x1="180.50" y1="839.40" x2="180.50" y2="862.00" stroke="#15161d" stroke-width="1.6" />
<line x1="180.50" y1="864.10" x2="180.50" y2="887.30" stroke="#15161d" stroke-width="1.6" />
<line x1="180.50" y1="983.30" x2="180.50" y2="1006.30" stroke="#15161d" stroke-width="1.6" />
<line x1="180.80" y1="551.50" x2="180.80" y2="574.00" stroke="#ffffff" stroke-width="1.3" />
<line x1="180.80" y1="598.50" x2="180.80" y2="617.00" stroke="#ffffff" stroke-width="1.3" />
<line x1="180.80" y1="729.50" x2="180.80" y2="740.00" stroke="#ffffff" stroke-width="1.3" />
<line x1="180.80" y1="752.50" x2="180.80" y2="761.50" stroke="#ffffff" stroke-width="1.3" />
<rect x="860.50" y="167.00" width="3.50" height="921.00" fill="#1c1d25" />
<rect x="863.00" y="168.20" width="295.50" height="949.00" fill="#31333e" />
<rect x="1158.50" y="52.00" width="11.50" height="1113.00" fill="#262831" />
<rect x="1000.00" y="168.20" width="158.50" height="920.00" fill="#31333e" />
<rect x="1000.00" y="517.10" width="158.50" height="320.20" fill="#3f424e" />
<rect x="999.00" y="168.20" width="2.80" height="919.00" fill="#262830" />
<rect x="865.50" y="120.50" width="38.70" height="16.20" fill="#1c1d25" rx="8.1"/>
<text x="884.80" y="133.50" font-family='"Liberation Sans", sans-serif' font-size="13.4" font-weight="bold" fill="#d9dbe2" text-anchor="middle" >Set</text>
<rect x="918.50" y="120.50" width="30.30" height="16.20" fill="#1c1d25" />
<path d="M929.5 133l9-9" stroke="#d9dbe2" stroke-width="1.6"/><circle cx="929.6" cy="132.8" r="1.9" fill="#d9dbe2"/><circle cx="938.4" cy="124.2" r="1.9" fill="#d9dbe2"/>
<rect x="954.00" y="120.50" width="30.20" height="16.20" fill="#1c1d25" />
<rect x="964.7" y="128" width="9.4" height="6" fill="#d9dbe2"/><path d="M966.7 128v-1.6a2.7 2.7 0 0 1 5.4 0v1.6" stroke="#d9dbe2" stroke-width="1.4" fill="none"/>
<circle cx="873.8" cy="152.6" r="8.3" fill="#1c1d25"/>
<path d="M878.4 151.3h-4.4v-3l-5 4.3l5 4.3v-3h4.4z" fill="#b9bbc4"/>
<circle cx="895.3" cy="152.6" r="8.3" fill="#1c1d25"/>
<path d="M890.6999999999999 151.3h4.4v-3l5 4.3l-5 4.3v-3h-4.4z" fill="#b9bbc4"/>
<rect x="863.00" y="166.00" width="295.50" height="2.20" fill="#25272f" />
<rect x="863.00" y="168.20" width="136.00" height="114.60" fill="#92a7ff" />
<circle cx="875.4" cy="180.0" r="7.4" fill="none" stroke="#2b3677" stroke-width="1.7"/>
<path d="M871.2 177.7h8.4l-4.2 6z" fill="#2b3677"/>
<text x="894.00" y="184.60" font-family='"Liberation Sans", sans-serif' font-size="12.5" font-weight="bold" fill="#2b3677" text-anchor="start" letter-spacing="0.4" >Drums</text>
<rect x="1005.50" y="172.50" width="58.50" height="15.00" fill="#ffad56" />
<text x="1034.70" y="184.60" font-family='"Liberation Sans", sans-serif' font-size="12.8" font-weight="bold" fill="#2b2217" text-anchor="middle" >1</text>
<rect x="1070.80" y="172.50" width="26.80" height="15.00" fill="#1f2129" />
<text x="1084.20" y="184.60" font-family='"Liberation Sans", sans-serif' font-size="12.6" font-weight="bold" fill="#d5d7de" text-anchor="middle" >S</text>
<rect x="1103.20" y="172.50" width="27.60" height="15.00" fill="#1f2129" />
<circle cx="1117" cy="180.0" r="4.6" fill="#d5d7de"/>
<path d="M1118.3 176.9v4.6" stroke="#22242c" stroke-width="1.3" fill="none"/>
<ellipse cx="1116.9" cy="181.6" rx="1.7" ry="1.3" fill="#22242c"/>
<rect x="1005.50" y="194.70" width="58.50" height="15.20" fill="#1f2129" />
<rect x="1005.50" y="194.70" width="47.50" height="15.20" fill="#138a9c" />
<text x="1036.00" y="207.10" font-family='"Liberation Sans", sans-serif' font-size="12.8" font-weight="normal" fill="#ced1d9" text-anchor="middle" letter-spacing="0.35" stroke="#ced1d9" stroke-width="0.3">-1.0</text>
<rect x="1070.80" y="194.70" width="60.00" height="15.20" fill="#1f2129" />
<text x="1101.00" y="207.00" font-family='"Liberation Sans", sans-serif' font-size="12.6" font-weight="bold" fill="#d5d7de" text-anchor="middle" >C</text>
<rect x="1005.50" y="217.20" width="38.00" height="15.20" fill="#1f2129" />
<rect x="1005.50" y="217.20" width="6.00" height="15.20" fill="#138a9c" />
<text x="1025.70" y="229.60" font-family='"Liberation Sans", sans-serif' font-size="12.8" font-weight="normal" fill="#ced1d9" text-anchor="middle" letter-spacing="0.35" stroke="#ced1d9" stroke-width="0.3">-41.0</text>
<rect x="1048.80" y="217.20" width="38.80" height="15.20" fill="#1f2129" />
<rect x="1048.80" y="217.20" width="7.50" height="15.20" fill="#138a9c" />
<text x="1069.40" y="229.60" font-family='"Liberation Sans", sans-serif' font-size="12.8" font-weight="normal" fill="#ced1d9" text-anchor="middle" letter-spacing="0.35" stroke="#ced1d9" stroke-width="0.3">-42.0</text>
<rect x="1136.20" y="173.00" width="4.20" height="107.00" fill="#1f2129" />
<rect x="1136.20" y="193.00" width="4.20" height="16.00" fill="#a99c2c" />
<rect x="1136.20" y="209.00" width="4.20" height="5.00" fill="#8fd036" />
<rect x="1136.20" y="213.50" width="4.20" height="66.50" fill="#1edc4a" />
<rect x="1141.60" y="173.00" width="4.20" height="107.00" fill="#1f2129" />
<rect x="1141.60" y="193.00" width="4.20" height="16.00" fill="#a99c2c" />
<rect x="1141.60" y="209.00" width="4.20" height="5.00" fill="#8fd036" />
<rect x="1141.60" y="213.50" width="4.20" height="66.50" fill="#1edc4a" />
<rect x="1135.60" y="190.80" width="11.00" height="1.40" fill="#e6a23c" />
<rect x="1135.60" y="180.00" width="11.00" height="1.00" fill="#3a3d4a" />
<rect x="1135.60" y="187.50" width="11.00" height="1.00" fill="#3a3d4a" />
<rect x="863.00" y="284.60" width="136.00" height="114.20" fill="#5cffe8" />
<circle cx="875.4" cy="296.40000000000003" r="7.4" fill="none" stroke="#17655a" stroke-width="1.7"/>
<path d="M871.2 294.1h8.4l-4.2 6z" fill="#17655a"/>
<text x="894.00" y="301.00" font-family='"Liberation Sans", sans-serif' font-size="12.5" font-weight="bold" fill="#17655a" text-anchor="start" letter-spacing="0.4" >Bass</text>
<rect x="1005.50" y="288.90" width="58.50" height="15.00" fill="#ffad56" />
<text x="1034.70" y="301.00" font-family='"Liberation Sans", sans-serif' font-size="12.8" font-weight="bold" fill="#2b2217" text-anchor="middle" >2</text>
<rect x="1070.80" y="288.90" width="26.80" height="15.00" fill="#1f2129" />
<text x="1084.20" y="301.00" font-family='"Liberation Sans", sans-serif' font-size="12.6" font-weight="bold" fill="#d5d7de" text-anchor="middle" >S</text>
<rect x="1103.20" y="288.90" width="27.60" height="15.00" fill="#1f2129" />
<circle cx="1117" cy="296.40000000000003" r="4.6" fill="#d5d7de"/>
<path d="M1118.3 293.3v4.6" stroke="#22242c" stroke-width="1.3" fill="none"/>
<ellipse cx="1116.9" cy="298.00000000000006" rx="1.7" ry="1.3" fill="#22242c"/>
<rect x="1005.50" y="311.10" width="58.50" height="15.20" fill="#1f2129" />
<rect x="1005.50" y="311.10" width="39.00" height="15.20" fill="#138a9c" />
<text x="1036.00" y="323.50" font-family='"Liberation Sans", sans-serif' font-size="12.8" font-weight="normal" fill="#ced1d9" text-anchor="middle" letter-spacing="0.35" stroke="#ced1d9" stroke-width="0.3">-7.7</text>
<rect x="1070.80" y="311.10" width="60.00" height="15.20" fill="#1f2129" />
<text x="1101.00" y="323.40" font-family='"Liberation Sans", sans-serif' font-size="12.6" font-weight="bold" fill="#d5d7de" text-anchor="middle" >C</text>
<rect x="1005.50" y="333.60" width="38.00" height="15.20" fill="#1f2129" />
<text x="1015.00" y="345.80" font-family='"Liberation Sans", sans-serif' fill="#ced1d9" font-size="12.8" stroke="#ced1d9" stroke-width="0.3">-<tspan font-size="18.5" dy="1.6" dx="0.3">∞</tspan></text>
<rect x="1048.80" y="333.60" width="38.80" height="15.20" fill="#1f2129" />
<text x="1058.70" y="345.80" font-family='"Liberation Sans", sans-serif' fill="#ced1d9" font-size="12.8" stroke="#ced1d9" stroke-width="0.3">-<tspan font-size="18.5" dy="1.6" dx="0.3">∞</tspan></text>
<rect x="1136.20" y="290.00" width="4.20" height="106.50" fill="#1f2129" />
<rect x="1136.20" y="335.50" width="4.20" height="61.00" fill="#1edc4a" />
<rect x="1141.60" y="290.00" width="4.20" height="106.50" fill="#1f2129" />
<rect x="1141.60" y="335.50" width="4.20" height="61.00" fill="#1edc4a" />
<rect x="1135.60" y="316.00" width="11.00" height="1.40" fill="#e6a23c" />
<rect x="863.00" y="400.80" width="136.00" height="114.50" fill="#f7f47c" />
<circle cx="875.4" cy="412.6" r="7.4" fill="none" stroke="#5d5b22" stroke-width="1.7"/>
<path d="M871.2 410.3h8.4l-4.2 6z" fill="#5d5b22"/>
<text x="894.00" y="417.20" font-family='"Liberation Sans", sans-serif' font-size="12.5" font-weight="bold" fill="#5d5b22" text-anchor="start" letter-spacing="0.4" >Keys</text>
<rect x="1005.50" y="405.10" width="58.50" height="15.00" fill="#ffad56" />
<text x="1034.70" y="417.20" font-family='"Liberation Sans", sans-serif' font-size="12.8" font-weight="bold" fill="#2b2217" text-anchor="middle" >3</text>
<rect x="1070.80" y="405.10" width="26.80" height="15.00" fill="#1f2129" />
<text x="1084.20" y="417.20" font-family='"Liberation Sans", sans-serif' font-size="12.6" font-weight="bold" fill="#d5d7de" text-anchor="middle" >S</text>
<rect x="1103.20" y="405.10" width="27.60" height="15.00" fill="#1f2129" />
<circle cx="1117" cy="412.6" r="4.6" fill="#d5d7de"/>
<path d="M1118.3 409.5v4.6" stroke="#22242c" stroke-width="1.3" fill="none"/>
<ellipse cx="1116.9" cy="414.20000000000005" rx="1.7" ry="1.3" fill="#22242c"/>
<rect x="1005.50" y="427.30" width="58.50" height="15.20" fill="#1f2129" />
<rect x="1005.50" y="427.30" width="40.00" height="15.20" fill="#138a9c" />
<text x="1036.00" y="439.70" font-family='"Liberation Sans", sans-serif' font-size="12.8" font-weight="normal" fill="#ced1d9" text-anchor="middle" letter-spacing="0.35" stroke="#ced1d9" stroke-width="0.3">-6.6</text>
<rect x="1070.80" y="427.30" width="60.00" height="15.20" fill="#1f2129" />
<text x="1101.00" y="439.60" font-family='"Liberation Sans", sans-serif' font-size="12.6" font-weight="bold" fill="#d5d7de" text-anchor="middle" >C</text>
<rect x="1005.50" y="449.80" width="38.00" height="15.20" fill="#1f2129" />
<rect x="1005.50" y="449.80" width="5.50" height="15.20" fill="#138a9c" />
<text x="1025.70" y="462.20" font-family='"Liberation Sans", sans-serif' font-size="12.8" font-weight="normal" fill="#ced1d9" text-anchor="middle" letter-spacing="0.35" stroke="#ced1d9" stroke-width="0.3">-45.0</text>
<rect x="1048.80" y="449.80" width="38.80" height="15.20" fill="#1f2129" />
<text x="1058.70" y="462.00" font-family='"Liberation Sans", sans-serif' fill="#ced1d9" font-size="12.8" stroke="#ced1d9" stroke-width="0.3">-<tspan font-size="18.5" dy="1.6" dx="0.3">∞</tspan></text>
<rect x="1136.20" y="405.50" width="4.20" height="106.50" fill="#1f2129" />
<rect x="1136.20" y="455.00" width="4.20" height="57.00" fill="#1edc4a" />
<rect x="1141.60" y="405.50" width="4.20" height="106.50" fill="#1f2129" />
<rect x="1141.60" y="455.00" width="4.20" height="57.00" fill="#1edc4a" />
<rect x="1135.60" y="445.00" width="11.00" height="1.40" fill="#e6a23c" />
<rect x="1141.60" y="455.00" width="4.20" height="11.00" fill="#1f2129" />
<rect x="863.00" y="517.10" width="136.00" height="113.20" fill="#ffa374" />
<circle cx="875.4" cy="528.9" r="7.4" fill="none" stroke="#6b3a1e" stroke-width="1.7"/>
<path d="M871.2 526.6h8.4l-4.2 6z" fill="#6b3a1e"/>
<text x="894.00" y="533.50" font-family='"Liberation Sans", sans-serif' font-size="12.5" font-weight="bold" fill="#6b3a1e" text-anchor="start" letter-spacing="0.4" >Vocals</text>
<rect x="1005.50" y="521.40" width="58.50" height="15.00" fill="#ffad56" />
<text x="1034.70" y="533.50" font-family='"Liberation Sans", sans-serif' font-size="12.8" font-weight="bold" fill="#2b2217" text-anchor="middle" >4</text>
<rect x="1070.80" y="521.40" width="26.80" height="15.00" fill="#1f2129" />
<text x="1084.20" y="533.50" font-family='"Liberation Sans", sans-serif' font-size="12.6" font-weight="bold" fill="#d5d7de" text-anchor="middle" >S</text>
<rect x="1103.20" y="521.40" width="27.60" height="15.00" fill="#1f2129" />
<circle cx="1117" cy="528.9" r="4.3" fill="#7d808c"/>
<rect x="1005.50" y="543.60" width="58.50" height="15.20" fill="#1f2129" />
<rect x="1005.50" y="543.60" width="19.50" height="15.20" fill="#138a9c" />
<text x="1036.00" y="556.00" font-family='"Liberation Sans", sans-serif' font-size="12.8" font-weight="normal" fill="#ced1d9" text-anchor="middle" letter-spacing="0.35" stroke="#ced1d9" stroke-width="0.3">-21.7</text>
<rect x="1070.80" y="543.60" width="60.00" height="15.20" fill="#1f2129" />
<text x="1101.00" y="555.90" font-family='"Liberation Sans", sans-serif' font-size="12.6" font-weight="bold" fill="#d5d7de" text-anchor="middle" >C</text>
<rect x="1005.50" y="566.10" width="38.00" height="15.20" fill="#1f2129" />
<rect x="1005.50" y="566.10" width="20.00" height="15.20" fill="#138a9c" />
<text x="1025.70" y="578.50" font-family='"Liberation Sans", sans-serif' font-size="12.8" font-weight="normal" fill="#ced1d9" text-anchor="middle" letter-spacing="0.35" stroke="#ced1d9" stroke-width="0.3">-17.2</text>
<rect x="1048.80" y="566.10" width="38.80" height="15.20" fill="#1f2129" />
<text x="1058.70" y="578.30" font-family='"Liberation Sans", sans-serif' fill="#ced1d9" font-size="12.8" stroke="#ced1d9" stroke-width="0.3">-<tspan font-size="18.5" dy="1.6" dx="0.3">∞</tspan></text>
<rect x="1136.20" y="521.50" width="4.20" height="313.00" fill="#1f2129" />
<rect x="1136.20" y="652.00" width="4.20" height="182.50" fill="#22a84c" />
<rect x="1136.20" y="708.00" width="4.20" height="126.50" fill="#1edc4a" />
<rect x="1141.60" y="521.50" width="4.20" height="313.00" fill="#1f2129" />
<rect x="1141.60" y="664.00" width="4.20" height="170.50" fill="#22a84c" />
<rect x="1141.60" y="720.00" width="4.20" height="114.50" fill="#1edc4a" />
<rect x="1135.60" y="649.00" width="5.50" height="1.30" fill="#3bd060" />
<rect x="1135.60" y="552.00" width="11.00" height="1.00" fill="#4a4d5a" />
<rect x="863.00" y="631.40" width="136.00" height="67.80" fill="#916b56" />
<text x="867.00" y="648.40" font-family='"Liberation Sans", sans-serif' font-size="12.8" font-weight="bold" fill="#f6dccb" text-anchor="start" >Lane</text>
<rect x="979.00" y="635.50" width="17.00" height="17.00" fill="#1c1d25" />
<path d="M983.4 641.60h3.6l4.2-3.2v10.6l-4.2-2.2h-3.6z M987 641.60v5.2" fill="none" stroke="#d9dbe2" stroke-width="1.2" stroke-linejoin="miter"/>
<rect x="863.00" y="700.40" width="136.00" height="67.40" fill="#916b56" />
<text x="867.00" y="717.40" font-family='"Liberation Sans", sans-serif' font-size="12.8" font-weight="bold" fill="#f6dccb" text-anchor="start" >Lane</text>
<rect x="979.00" y="704.50" width="17.00" height="17.00" fill="#1c1d25" />
<path d="M983.4 710.60h3.6l4.2-3.2v10.6l-4.2-2.2h-3.6z M987 710.60v5.2" fill="none" stroke="#d9dbe2" stroke-width="1.2" stroke-linejoin="miter"/>
<rect x="863.00" y="769.00" width="136.00" height="68.30" fill="#916b56" />
<text x="867.00" y="786.00" font-family='"Liberation Sans", sans-serif' font-size="12.8" font-weight="bold" fill="#f6dccb" text-anchor="start" >Lane</text>
<rect x="979.00" y="773.10" width="17.00" height="17.00" fill="#1c1d25" />
<path d="M983.4 779.20h3.6l4.2-3.2v10.6l-4.2-2.2h-3.6z M987 779.20v5.2" fill="none" stroke="#d9dbe2" stroke-width="1.2" stroke-linejoin="miter"/>
<rect x="863.00" y="630.30" width="136.00" height="1.20" fill="#5f473a" />
<rect x="863.00" y="699.20" width="136.00" height="1.20" fill="#5f473a" />
<rect x="863.00" y="767.80" width="136.00" height="1.20" fill="#5f473a" />
<rect x="863.00" y="839.40" width="136.00" height="22.60" fill="#ffa374" />
<circle cx="875.4" cy="851.1999999999999" r="7.4" fill="none" stroke="#6b3a1e" stroke-width="1.7"/>
<path d="M872.8 846.8v8.8l6.5-4.4z" fill="#6b3a1e"/>
<text x="894.00" y="855.80" font-family='"Liberation Sans", sans-serif' font-size="12.5" font-weight="bold" fill="#6b3a1e" text-anchor="start" letter-spacing="0.4" >Rain Pad</text>
<rect x="1005.50" y="844.10" width="58.50" height="14.30" fill="#ffad56" />
<text x="1034.70" y="855.85" font-family='"Liberation Sans", sans-serif' font-size="12.8" font-weight="bold" fill="#2b2217" text-anchor="middle" >5</text>
<rect x="1070.80" y="844.10" width="26.80" height="14.30" fill="#1f2129" />
<text x="1084.20" y="855.85" font-family='"Liberation Sans", sans-serif' font-size="12.6" font-weight="bold" fill="#d5d7de" text-anchor="middle" >S</text>
<rect x="1103.20" y="844.10" width="27.60" height="14.30" fill="#1f2129" />
<circle cx="1117" cy="851.2499999999999" r="4.6" fill="#d5d7de"/>
<path d="M1118.3 848.1499999999999v4.6" stroke="#22242c" stroke-width="1.3" fill="none"/>
<ellipse cx="1116.9" cy="852.8499999999999" rx="1.7" ry="1.3" fill="#22242c"/>
<rect x="1136.20" y="846.00" width="4.20" height="14.50" fill="#1edc4a" />
<rect x="1141.60" y="846.00" width="4.20" height="14.50" fill="#1edc4a" />
<rect x="1135.60" y="844.50" width="11.00" height="1.40" fill="#e6a23c" />
<rect x="863.00" y="864.10" width="136.00" height="23.20" fill="#ff94a6" />
<circle cx="875.4" cy="875.9" r="7.4" fill="none" stroke="#6e2a3a" stroke-width="1.7"/>
<path d="M872.8 871.5v8.8l6.5-4.4z" fill="#6e2a3a"/>
<text x="894.00" y="880.50" font-family='"Liberation Sans", sans-serif' font-size="12.5" font-weight="bold" fill="#6e2a3a" text-anchor="start" letter-spacing="0.4" >Ambience</text>
<rect x="1005.50" y="869.20" width="58.50" height="14.30" fill="#ffad56" />
<text x="1034.70" y="880.95" font-family='"Liberation Sans", sans-serif' font-size="12.8" font-weight="bold" fill="#2b2217" text-anchor="middle" >6</text>
<rect x="1070.80" y="869.20" width="26.80" height="14.30" fill="#1f2129" />
<text x="1084.20" y="880.95" font-family='"Liberation Sans", sans-serif' font-size="12.6" font-weight="bold" fill="#d5d7de" text-anchor="middle" >S</text>
<rect x="1103.20" y="869.20" width="27.60" height="14.30" fill="#1f2129" />
<circle cx="1117" cy="876.3499999999999" r="4.3" fill="#7d808c"/>
<rect x="1136.20" y="877.00" width="4.20" height="8.50" fill="#22b84c" />
<rect x="1141.60" y="877.00" width="4.20" height="8.50" fill="#22b84c" />
<rect x="1135.60" y="870.00" width="11.00" height="1.00" fill="#4a4d5a" />
<rect x="863.00" y="889.40" width="136.00" height="91.80" fill="#ff94a6" />
<circle cx="875.4" cy="901.1999999999999" r="7.4" fill="none" stroke="#6e2a3a" stroke-width="1.7"/>
<path d="M871.2 898.9h8.4l-4.2 6z" fill="#6e2a3a"/>
<text x="894.00" y="905.80" font-family='"Liberation Sans", sans-serif' font-size="12.5" font-weight="bold" fill="#6e2a3a" text-anchor="start" letter-spacing="0.4" >Drone</text>
<rect x="1005.50" y="894.10" width="58.50" height="14.30" fill="#ffad56" />
<text x="1034.70" y="905.85" font-family='"Liberation Sans", sans-serif' font-size="12.8" font-weight="bold" fill="#2b2217" text-anchor="middle" >7</text>
<rect x="1070.80" y="894.10" width="26.80" height="14.30" fill="#1f2129" />
<text x="1084.20" y="905.85" font-family='"Liberation Sans", sans-serif' font-size="12.6" font-weight="bold" fill="#d5d7de" text-anchor="middle" >S</text>
<rect x="1103.20" y="894.10" width="27.60" height="14.30" fill="#1f2129" />
<circle cx="1117" cy="901.2499999999999" r="4.3" fill="#7d808c"/>
<rect x="1005.50" y="915.90" width="58.50" height="15.20" fill="#1f2129" />
<rect x="1005.50" y="915.90" width="25.00" height="15.20" fill="#138a9c" />
<text x="1036.00" y="928.30" font-family='"Liberation Sans", sans-serif' font-size="12.8" font-weight="normal" fill="#ced1d9" text-anchor="middle" letter-spacing="0.35" stroke="#ced1d9" stroke-width="0.3">-15.6</text>
<rect x="1070.80" y="915.90" width="60.00" height="15.20" fill="#1f2129" />
<text x="1101.00" y="928.20" font-family='"Liberation Sans", sans-serif' font-size="12.6" font-weight="bold" fill="#d5d7de" text-anchor="middle" >C</text>
<rect x="1005.50" y="938.40" width="38.00" height="15.20" fill="#1f2129" />
<rect x="1005.50" y="938.40" width="13.00" height="15.20" fill="#138a9c" />
<text x="1025.70" y="950.80" font-family='"Liberation Sans", sans-serif' font-size="12.8" font-weight="normal" fill="#ced1d9" text-anchor="middle" letter-spacing="0.35" stroke="#ced1d9" stroke-width="0.3">-22.8</text>
<rect x="1048.80" y="938.40" width="38.80" height="15.20" fill="#1f2129" />
<rect x="1048.80" y="938.40" width="13.50" height="15.20" fill="#138a9c" />
<text x="1069.40" y="950.80" font-family='"Liberation Sans", sans-serif' font-size="12.8" font-weight="normal" fill="#ced1d9" text-anchor="middle" letter-spacing="0.35" stroke="#ced1d9" stroke-width="0.3">-25.0</text>
<rect x="1136.20" y="894.00" width="4.20" height="84.00" fill="#1f2129" />
<rect x="1141.60" y="894.00" width="4.20" height="84.00" fill="#1f2129" />
<rect x="1135.60" y="940.50" width="11.00" height="1.30" fill="#2c9c4c" />
<rect x="863.00" y="983.30" width="136.00" height="23.00" fill="#d86ce4" />
<circle cx="875.4" cy="995.0999999999999" r="7.4" fill="none" stroke="#5b1f63" stroke-width="1.7"/>
<path d="M872.8 990.6999999999999v8.8l6.5-4.4z" fill="#5b1f63"/>
<text x="894.00" y="999.70" font-family='"Liberation Sans", sans-serif' font-size="12.5" font-weight="bold" fill="#5b1f63" text-anchor="start" letter-spacing="0.4" >FX</text>
<rect x="1005.50" y="987.70" width="58.50" height="14.30" fill="#ffad56" />
<text x="1034.70" y="999.45" font-family='"Liberation Sans", sans-serif' font-size="12.8" font-weight="bold" fill="#2b2217" text-anchor="middle" >8</text>
<rect x="1070.80" y="987.70" width="26.80" height="14.30" fill="#1f2129" />
<text x="1084.20" y="999.45" font-family='"Liberation Sans", sans-serif' font-size="12.6" font-weight="bold" fill="#d5d7de" text-anchor="middle" >S</text>
<rect x="1103.20" y="987.70" width="27.60" height="14.30" fill="#1f2129" />
<circle cx="1117" cy="994.8499999999999" r="4.3" fill="#7d808c"/>
<rect x="1136.20" y="990.00" width="4.20" height="14.50" fill="#1edc4a" />
<rect x="1141.60" y="990.00" width="4.20" height="14.50" fill="#1edc4a" />
<rect x="1000.00" y="282.80" width="158.50" height="1.90" fill="#2b2d38" />
<rect x="863.00" y="282.80" width="140.00" height="1.90" fill="#1c1d25" />
<rect x="1000.00" y="398.80" width="158.50" height="1.90" fill="#2b2d38" />
<rect x="863.00" y="398.80" width="140.00" height="1.90" fill="#1c1d25" />
<rect x="1000.00" y="515.30" width="158.50" height="1.90" fill="#2b2d38" />
<rect x="863.00" y="515.30" width="140.00" height="1.90" fill="#1c1d25" />
<rect x="1000.00" y="837.30" width="158.50" height="1.90" fill="#2b2d38" />
<rect x="863.00" y="837.30" width="140.00" height="1.90" fill="#1c1d25" />
<rect x="1000.00" y="862.00" width="158.50" height="1.90" fill="#2b2d38" />
<rect x="863.00" y="862.00" width="140.00" height="1.90" fill="#1c1d25" />
<rect x="1000.00" y="887.30" width="158.50" height="1.90" fill="#2b2d38" />
<rect x="863.00" y="887.30" width="140.00" height="1.90" fill="#1c1d25" />
<rect x="1000.00" y="981.20" width="158.50" height="1.90" fill="#2b2d38" />
<rect x="863.00" y="981.20" width="140.00" height="1.90" fill="#1c1d25" />
<rect x="1000.00" y="1006.30" width="158.50" height="1.90" fill="#2b2d38" />
<rect x="863.00" y="1006.30" width="140.00" height="1.90" fill="#1c1d25" />
<rect x="1000.00" y="1061.30" width="158.50" height="1.90" fill="#2b2d38" />
<rect x="863.00" y="1061.30" width="140.00" height="1.90" fill="#1c1d25" />
<rect x="1000.00" y="1087.00" width="158.50" height="1.90" fill="#2b2d38" />
<rect x="863.00" y="1087.00" width="140.00" height="1.90" fill="#1c1d25" />
<rect x="863.00" y="1008.30" width="295.50" height="53.00" fill="#2f313c" />
<rect x="863.00" y="1064.00" width="136.00" height="22.80" fill="#ffffff" />
<circle cx="875.4" cy="1075.6" r="7.4" fill="none" stroke="#3a3d48" stroke-width="1.7"/>
<path d="M872.8 1071.1999999999998v8.8l6.5-4.4z" fill="#3a3d48"/>
<text x="895.50" y="1080.30" font-family='"Liberation Sans", sans-serif' font-size="12.5" font-weight="bold" fill="#3a3d48" text-anchor="start" letter-spacing="0.4" >Main</text>
<rect x="1005.50" y="1067.80" width="59.00" height="15.20" fill="#1f2129" />
<rect x="1005.50" y="1067.80" width="49.50" height="15.20" fill="#138a9c" />
<text x="1034.00" y="1080.20" font-family='"Liberation Sans", sans-serif' font-size="12.8" font-weight="normal" fill="#bfe6ee" text-anchor="middle" stroke="#bfe6ee" stroke-width="0.3">0</text>
<rect x="1070.80" y="1067.80" width="59.50" height="15.20" fill="#1f2129" />
<rect x="1070.80" y="1067.80" width="50.00" height="15.20" fill="#3f74d4" />
<text x="1100.00" y="1080.20" font-family='"Liberation Sans", sans-serif' font-size="12.8" font-weight="normal" fill="#d3def7" text-anchor="middle" stroke="#d3def7" stroke-width="0.3">0</text>
<rect x="1136.20" y="1068.50" width="4.20" height="16.00" fill="#1edc4a" />
<rect x="1141.60" y="1068.50" width="4.20" height="16.00" fill="#1edc4a" />
<rect x="1135.60" y="1067.00" width="11.00" height="1.60" fill="#e6a23c" />
<rect x="863.00" y="1088.50" width="295.50" height="28.50" fill="#31333e" />
<rect x="863.50" y="1096.00" width="19.00" height="15.00" fill="#ffad56" />
<path d="M866.5 1103.5h13M868.5 1101.5v4M870.7 1099.5v8M873 1097.8v11.4M875.3 1100v7M877.5 1101.8v3.4" stroke="#7a4a14" stroke-width="1.1"/>
<rect x="886.70" y="1096.00" width="46.00" height="15.00" fill="#1f2129" />
<rect x="886.70" y="1096.00" width="14.00" height="15.00" fill="#138a9c" />
<text x="889.50" y="1108.20" font-family='"Liberation Sans", sans-serif' font-size="12.8" font-weight="normal" fill="#ced1d9" text-anchor="start" letter-spacing="0.2" stroke="#ced1d9" stroke-width="0.3">1.00x</text>
<rect x="954.50" y="1096.00" width="19.50" height="15.00" fill="#1f2129" />
<text x="964.20" y="1108.00" font-family='"Liberation Sans", sans-serif' font-size="12" font-weight="bold" fill="#d5d7de" text-anchor="middle" >H</text>
<rect x="977.00" y="1096.00" width="21.00" height="15.00" fill="#1f2129" />
<text x="987.50" y="1108.00" font-family='"Liberation Sans", sans-serif' font-size="12" font-weight="bold" fill="#d5d7de" text-anchor="middle" >W</text>
</svg>
</body>
</html>
